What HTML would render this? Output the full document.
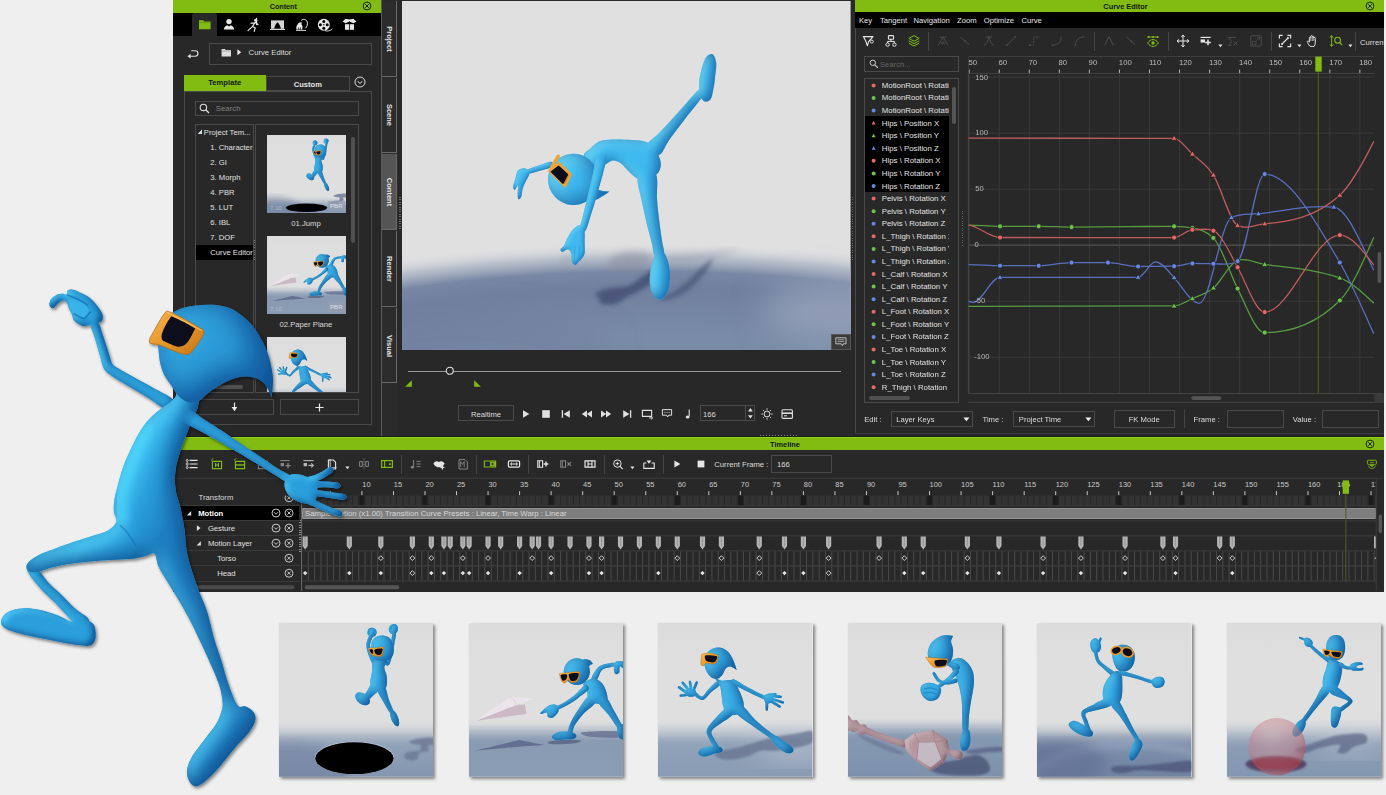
<!DOCTYPE html><html><head><meta charset="utf-8"><title>iClone Curve Editor</title><style>
*{box-sizing:border-box;margin:0;padding:0}
html,body{width:1386px;height:795px;overflow:hidden;background:#efefef}
body{position:relative;font-family:"Liberation Sans",sans-serif;font-size:8px;color:#d0d0d0;line-height:1}
.a{position:absolute}
.t{position:absolute;white-space:nowrap;line-height:10px;height:10px}
.b{position:absolute;border:1px solid #4a4a4a}
.g{background:#82bc13}
svg{position:absolute;overflow:visible}
</style></head><body>
<div class="a" style="left:173px;top:0px;width:209px;height:435.6px;background:#282828;"></div><div class="a" style="left:173px;top:0px;width:208.5px;height:12.5px;background:#82bc13;"></div><div class="t" style="top:1.8px;font-size:7.2px;color:#10180a;font-weight:bold;left:183.3px;width:200px;text-align:center;">Content</div><svg style="left:362px;top:1.3px;" width="10" height="10" viewBox="0 0 10 10"><circle cx="5" cy="5" r="3.9" fill="none" stroke="#1a2a00" stroke-width="1"/><path d="M3.2 3.2L6.8 6.8M6.8 3.2L3.2 6.8" stroke="#1a2a00" stroke-width="1" fill="none"/></svg><div class="a" style="left:173px;top:12.5px;width:208.5px;height:23.5px;background:#000;"></div><div class="a" style="left:192.2px;top:13.2px;width:24.8px;height:23px;background:#282828;border-radius:2px 2px 0 0;"></div><svg style="left:198px;top:18px;" width="14" height="13" viewBox="0 0 14 13"><path d="M1 2.2h4.2l1 1.3H12.6v7.8H1z" fill="#82bc13"/><path d="M1 4.6H12.6" stroke="#5a8a0a" stroke-width="0.7"/></svg><svg style="left:223px;top:18px;" width="12" height="13" viewBox="0 0 12 13"><circle cx="6" cy="3.6" r="2.7" fill="#e8e8e8"/><path d="M0.8 11.6c0.3-3 2.2-3.8 3.6-4.3l1.6 1.2 1.6-1.2c1.4 0.5 3.3 1.3 3.6 4.3z" fill="#e8e8e8"/></svg><svg style="left:246.5px;top:17.5px;" width="13" height="14" viewBox="0 0 13 14"><circle cx="8.6" cy="2.2" r="1.5" fill="#e8e8e8"/><path d="M8.2 4.2L5.6 8.4l2.6 1.6-1 3.4M5.6 8.4L1 12.6M7.8 5L4 5.2M8.2 4.6l2.8 2M9.6 0.4v6.2" stroke="#e8e8e8" stroke-width="1.2" fill="none" stroke-linecap="round"/></svg><svg style="left:270px;top:18.5px;" width="15" height="12" viewBox="0 0 15 12"><path d="M1 1.4h13v8.4H1z" fill="#d4d4d4"/><path d="M4.2 9.8c0.4-3 1.6-4.8 3.3-6.6 1.7 1.8 2.9 3.6 3.3 6.6z" fill="#000"/><path d="M0 10.4h15" stroke="#e8e8e8" stroke-width="1"/></svg><svg style="left:294.5px;top:17.5px;" width="14" height="14" viewBox="0 0 14 14"><path d="M6.2 2.4C8 0.6 11.4 1.2 12.2 4c0.6 2.4-0.2 4.6-1.6 6.2" fill="none" stroke="#e8e8e8" stroke-width="1"/><path d="M1.4 11.6C1 9.4 1.4 7.6 2.6 6.4 3.4 4.8 5 4 6.8 4.4L6.4 6.2C7.6 7.2 7.8 9 7.2 11.6z" fill="#e8e8e8"/><path d="M3.4 9.4v2.6M5.4 9.4v2.6" stroke="#000" stroke-width="0.7"/><path d="M1 12.4H11" stroke="#e8e8e8" stroke-width="0.9"/></svg><svg style="left:317px;top:17.5px;" width="16" height="14" viewBox="0 0 16 14"><circle cx="6.8" cy="6.8" r="6" fill="#e8e8e8"/><circle cx="6.8" cy="3.4" r="1.5" fill="#000"/><circle cx="6.8" cy="10.2" r="1.5" fill="#000"/><circle cx="3.4" cy="6.8" r="1.5" fill="#000"/><circle cx="10.2" cy="6.8" r="1.5" fill="#000"/><circle cx="6.8" cy="6.8" r="0.7" fill="#000"/><path d="M8 12.8c3 0.6 5.4 0 7.4-1.8" stroke="#e8e8e8" stroke-width="0.9" fill="none"/></svg><svg style="left:341.5px;top:18px;" width="15" height="13" viewBox="0 0 15 13"><path d="M3 6.2h9v5.6H3z" fill="#e8e8e8"/><path d="M7.5 1.6L3.6 0.8 0.6 3.6l3 1.6 3.9-1.6 3.9 1.6 3-1.6-3-2.8z" fill="#e8e8e8"/><path d="M7.5 3.6v8.2" stroke="#000" stroke-width="0.8"/></svg><svg style="left:186px;top:48px;" width="14" height="12" viewBox="0 0 14 12"><path d="M3.4 8.2H9.2a2.7 2.7 0 0 0 0-5.4H5.2" fill="none" stroke="#ddd" stroke-width="1.1"/><path d="M4.6 5.8L1.4 8.2l3.2 2.4z" fill="#ddd"/></svg><div class="a" style="left:209px;top:43.3px;width:162.5px;height:22.2px;border:1px solid #4a4a4a;"></div><svg style="left:220.5px;top:47.5px;" width="11" height="10" viewBox="0 0 11 10"><path d="M0.6 1h3.4l0.8 1H10v6.6H0.6z" fill="#ddd"/><path d="M0.6 3h9.4" stroke="#888" stroke-width="0.6"/></svg><svg style="left:236.6px;top:49.3px;" width="5" height="7" viewBox="0 0 5 7"><path d="M0.4 0.2L4.2 3.2 0.4 6.2z" fill="#eee"/></svg><div class="t" style="top:48.1px;font-size:7.71px;color:#dcdcdc;left:248.6px;">Curve Editor</div><div class="a" style="left:183.5px;top:75.4px;width:82.8px;height:15.6px;background:#82bc13;"></div><div class="t" style="top:78.3px;font-size:7.67px;color:#10180a;font-weight:bold;left:124.7px;width:200px;text-align:center;">Template</div><div class="a" style="left:266px;top:75.8px;width:83.8px;height:15.6px;border:1px solid #4a4a4a;"></div><div class="t" style="top:79.7px;font-size:7.57px;color:#e4e4e4;font-weight:bold;left:207.8px;width:200px;text-align:center;">Custom</div><svg style="left:354px;top:76px;" width="12" height="12" viewBox="0 0 12 12"><circle cx="6" cy="6" r="5" fill="none" stroke="#ddd" stroke-width="1"/><path d="M3.6 5L6 7.6 8.4 5" fill="none" stroke="#ddd" stroke-width="1"/></svg><div class="a" style="left:183.5px;top:90.6px;width:188px;height:334.2px;border:1px solid #4a4a4a;"></div><div class="a" style="left:195px;top:100.6px;width:164.4px;height:15.6px;border:1px solid #4a4a4a;"></div><svg style="left:199px;top:103px;" width="11" height="11" viewBox="0 0 11 11"><circle cx="4.4" cy="4.4" r="3.2" fill="none" stroke="#ddd" stroke-width="1.1"/><path d="M6.8 6.8L10 10" stroke="#ddd" stroke-width="1.3"/></svg><div class="t" style="top:104.1px;font-size:7.85px;color:#808080;left:215.7px;">Search</div><div class="a" style="left:195.4px;top:123.6px;width:58.4px;height:269.6px;border:1px solid #4a4a4a;"></div><div class="a" style="left:255.4px;top:123.6px;width:103.6px;height:269.6px;border:1px solid #4a4a4a;"></div><div class="a" style="left:196.4px;top:245px;width:56.6px;height:14.6px;background:#000;"></div><svg style="left:196.8px;top:128.6px;" width="6" height="6" viewBox="0 0 6 6"><path d="M5 0.6V5H0.6z" fill="#ddd"/></svg><div class="t" style="top:127.7px;font-size:7.67px;color:#e0e0e0;left:203.8px;">Project Tem...</div><div class="t" style="top:142.8px;font-size:7.67px;color:#e0e0e0;left:210.3px;width:42.6px;overflow:hidden;">1. Character</div><div class="t" style="top:157.85px;font-size:7.67px;color:#e0e0e0;left:210.3px;width:42.6px;overflow:hidden;">2. GI</div><div class="t" style="top:172.9px;font-size:7.67px;color:#e0e0e0;left:210.3px;width:42.6px;overflow:hidden;">3. Morph</div><div class="t" style="top:187.95px;font-size:7.67px;color:#e0e0e0;left:210.3px;width:42.6px;overflow:hidden;">4. PBR</div><div class="t" style="top:203px;font-size:7.67px;color:#e0e0e0;left:210.3px;width:42.6px;overflow:hidden;">5. LUT</div><div class="t" style="top:218.05px;font-size:7.67px;color:#e0e0e0;left:210.3px;width:42.6px;overflow:hidden;">6. IBL</div><div class="t" style="top:233.1px;font-size:7.67px;color:#e0e0e0;left:210.3px;width:42.6px;overflow:hidden;">7. DOF</div><div class="t" style="top:248.15px;font-size:7.67px;color:#e0e0e0;left:210.3px;width:42.6px;overflow:hidden;">Curve Editor</div><div class="a" style="left:254px;top:240px;width:1.4px;height:22px;background:repeating-linear-gradient(#777 0 1px,transparent 1px 2.4px);"></div><div class="a" style="left:199px;top:385.2px;width:44px;height:3.8px;background:#505050;border-radius:2px;"></div><svg style="left:267px;top:134.5px;overflow:hidden;" width="79" height="78.7" viewBox="0 0 154.4 153.8" preserveAspectRatio="none"><defs><linearGradient id="tb7" x1="0" y1="0" x2="0" y2="154" gradientUnits="userSpaceOnUse"><stop offset="0" stop-color="#dcdcdc"/><stop offset="0.3" stop-color="#dfdfdf"/><stop offset="0.77" stop-color="#dfdfdf"/><stop offset="0.79" stop-color="#ddddde"/><stop offset="0.8" stop-color="#d7d8db"/><stop offset="0.82" stop-color="#ced1d6"/><stop offset="0.83" stop-color="#c2c9d1"/><stop offset="0.85" stop-color="#b6c0cb"/><stop offset="0.86" stop-color="#abb6c5"/><stop offset="0.88" stop-color="#9faec0"/><stop offset="0.89" stop-color="#96a7bb"/><stop offset="0.91" stop-color="#90a2b8"/><stop offset="0.92" stop-color="#8ea0b7"/><stop offset="1" stop-color="#8497b0"/></linearGradient><clipPath id="tc7"><rect x="0" y="0" width="154.4" height="153.8"/></clipPath></defs><rect x="0" y="0" width="154.4" height="153.8" fill="url(#tb7)"/><g clip-path="url(#tc7)"><g filter="url(#blur6)"><ellipse cx="10" cy="150" rx="60" ry="30" fill="#6d7a9c" opacity="0.5"/></g><g filter="url(#blur1)"><path d="M130.08 118.53C131.11 117.57 136.33 116.02 140.39 115.44C144.45 114.85 152.08 113.99 154.42 115.02C156.75 116.06 155.38 120.35 154.42 121.63C153.45 122.9 149.43 121.63 148.64 122.66C147.85 123.69 151.05 126.61 149.67 127.81C148.3 129.02 142.28 128.5 140.39 129.88C138.5 131.25 140.05 134.86 138.33 136.06C136.61 137.27 132.31 137.61 130.08 137.1C127.84 136.58 124.92 134.35 124.92 132.97C124.92 131.59 127.5 129.7 130.08 128.84C132.65 127.99 138.5 128.95 140.39 127.81C142.28 126.68 142.45 123.14 141.42 122.04C140.39 120.94 136.09 121.8 134.2 121.21C132.31 120.63 129.04 119.49 130.08 118.53Z" fill="#6a7594" opacity="0.8"/></g><ellipse cx="77.2" cy="142.1" rx="40.6" ry="8.4" transform="rotate(0 77.2 142.1)" fill="#000"/><g transform="translate(1,6)"><g filter="url(#t2)" fill="#35a8e2"><path d="M110.76 40.87C111.78 38.71 113.04 32.98 113.87 29.3C114.7 25.62 115.22 21.93 115.74 18.8C116.26 15.67 117.03 12.19 116.99 10.5C116.94 8.81 116.05 8.74 115.46 8.65C114.87 8.56 114 8.39 113.46 9.97C112.92 11.56 112.81 15.12 112.23 18.18C111.65 21.23 111.01 24.76 109.98 28.3C108.96 31.85 106.45 37.1 106.08 39.42C105.71 41.75 106.99 42.01 107.77 42.26C108.55 42.5 109.74 43.03 110.76 40.87Z" /><path d="M98.22 39.03C97.58 37.04 94.38 33.07 93.18 30.18C91.98 27.28 90.91 24.48 91.01 21.66C91.12 18.85 93.55 15.01 93.82 13.27C94.08 11.52 93.18 11.37 92.62 11.19C92.05 11.01 91.29 10.44 90.43 12.16C89.57 13.88 87.62 18.27 87.45 21.5C87.29 24.74 88.35 28.26 89.41 31.56C90.48 34.85 92.59 39.5 93.86 41.26C95.13 43.02 96.32 42.48 97.04 42.11C97.77 41.74 98.87 41.02 98.22 39.03Z" /><ellipse cx="114.4" cy="6.11" rx="4.6" ry="5.2" transform="rotate(15 114.4 6.11)" /><ellipse cx="92.95" cy="9.41" rx="4.6" ry="4.6" transform="rotate(0 92.95 9.41)" /></g><path d="M111.51 6.53C111.86 5.91 112.54 3.43 113.57 2.81C114.61 2.19 116.94 2.06 117.7 2.81C118.46 3.57 118.04 6.59 118.11 7.35" fill="none" stroke="#2b90cc" stroke-width="1.2"/><path d="M89.85 10.65C89.85 9.96 89.34 7.35 89.85 6.53C90.37 5.7 91.81 5.56 92.95 5.7C94.08 5.84 96.11 6.46 96.66 7.35C97.21 8.24 96.32 10.45 96.25 11.06" fill="none" stroke="#2b90cc" stroke-width="1.2"/><g filter="url(#t4)" fill="#35a8e2"><path d="M93.25 59.78C91.34 61.15 89.83 65.38 88.39 67.63C86.94 69.89 85.14 71.71 84.58 73.3C84.03 74.89 84.31 76.53 85.04 77.17C85.76 77.81 87.4 77.91 88.93 77.13C90.46 76.35 92.21 74.35 94.21 72.48C96.2 70.61 99.96 68.08 100.9 65.9C101.84 63.72 101.1 60.41 99.83 59.39C98.55 58.37 95.15 58.4 93.25 59.78Z" /><path d="M98.32 67.56C98.99 70.41 102.68 75.85 104.75 79.51C106.82 83.17 109.32 87.73 110.75 89.52C112.18 91.31 112.75 90.53 113.35 90.24C113.95 89.94 114.89 89.91 114.34 87.73C113.78 85.54 111.39 81.01 110.02 77.11C108.66 73.21 107.68 66.75 106.14 64.3C104.59 61.86 102.07 61.87 100.76 62.42C99.46 62.96 97.66 64.71 98.32 67.56Z" /><ellipse cx="83.67" cy="75.83" rx="8.25" ry="5.36" transform="rotate(35 83.67 75.83)" /><ellipse cx="115.64" cy="95.22" rx="3.51" ry="8.66" transform="rotate(-22 115.64 95.22)" /><path d="M94.6 38.09C92.02 39.98 93.5 45.82 92.95 49.43C92.4 53.04 91.02 56.82 91.3 59.74C91.57 62.67 92.78 65.52 94.6 66.96C96.42 68.41 100.1 68.92 102.23 68.41C104.36 67.89 106.46 66.34 107.39 63.87C108.31 61.39 108.14 56.82 107.8 53.56C107.45 50.29 105.22 46.85 105.32 44.27C105.43 41.7 110.21 39.12 108.42 38.09C106.63 37.05 97.18 36.19 94.6 38.09Z" /></g><g filter="url(#t4)" fill="#35a8e2"><path d="M92.53 26.74C92.19 23.99 92.02 20.69 92.95 18.49C93.88 16.29 96.04 14.5 98.1 13.54C100.17 12.58 103.09 12.3 105.32 12.71C107.56 13.13 109.96 14.19 111.51 16.01C113.06 17.84 114.19 21 114.61 23.65C115.02 26.29 114.85 29.66 113.99 31.9C113.13 34.13 111.58 36.02 109.45 37.05C107.32 38.09 103.6 38.43 101.2 38.09C98.79 37.74 96.45 36.88 95.01 34.99C93.57 33.1 92.88 29.49 92.53 26.74Z" /></g><path d="M89.23 25.09C89.23 25.09 95.04 24.84 97.07 24.68C99.11 24.51 104.5 23.85 104.5 23.85C104.5 23.85 104.77 27.54 104.5 28.8C104.22 30.07 103.37 32.74 102.44 33.34C101.5 33.95 98.53 33.45 97.49 33.34C96.44 33.23 95.42 32.85 94.6 32.52C93.77 32.19 92.01 31.86 91.3 30.87C90.58 29.88 89.23 25.09 89.23 25.09Z" fill="url(#orG)" stroke="#a8640f" stroke-width="0.4"/><path d="M95.42 26.74C96.25 26 102.27 25.3 103.26 25.71C104.25 26.12 103.18 29.01 102.85 29.83C102.52 30.66 101.56 31.7 100.79 31.9C100.02 32.09 97.79 31.97 97.07 31.28C96.36 30.59 94.6 27.48 95.42 26.74Z" fill="#0b0c1a"/><path d="M90.47 26.74C90.69 26.3 93.28 26.19 93.77 26.74C94.27 27.29 94.4 30.43 94.18 30.87C93.96 31.31 92.62 30.59 92.12 30.04C91.63 29.49 90.25 27.18 90.47 26.74Z" fill="#0b0c1a"/></g></g></svg><div class="t" style="top:202.8px;font-size:6.17px;color:rgba(190,195,210,0.75);left:270px;">7.10</div><div class="a" style="left:328px;top:200.5px;width:16.6px;height:10px;background:rgba(150,158,178,0.75);"></div><div class="t" style="top:200.8px;font-size:6.17px;color:rgba(225,228,236,0.95);left:236.3px;width:200px;text-align:center;">PBR</div><svg style="left:267px;top:235.8px;overflow:hidden;" width="79" height="78.5" viewBox="0 0 154.4 153.41" preserveAspectRatio="none"><defs><linearGradient id="tb2" x1="0" y1="0" x2="0" y2="154" gradientUnits="userSpaceOnUse"><stop offset="0" stop-color="#dcdcdc"/><stop offset="0.3" stop-color="#dfdfdf"/><stop offset="0.63" stop-color="#dfdfdf"/><stop offset="0.64" stop-color="#ddddde"/><stop offset="0.66" stop-color="#d6d8da"/><stop offset="0.67" stop-color="#ccd0d5"/><stop offset="0.69" stop-color="#c1c7d0"/><stop offset="0.7" stop-color="#b4bdc9"/><stop offset="0.72" stop-color="#a7b3c2"/><stop offset="0.73" stop-color="#9caabd"/><stop offset="0.75" stop-color="#92a2b8"/><stop offset="0.76" stop-color="#8b9db4"/><stop offset="0.78" stop-color="#899bb3"/><stop offset="1" stop-color="#8b9db5"/></linearGradient><clipPath id="tc2"><rect x="0" y="0" width="154.4" height="153.8"/></clipPath></defs><rect x="0" y="0" width="154.4" height="153.8" fill="url(#tb2)"/><g clip-path="url(#tc2)"><g filter="url(#blur05)"><path d="M5.68 127.81C5.68 127.81 50.03 117.09 50.03 117.09C50.03 117.09 75.81 122.04 75.81 122.04C75.81 122.04 37.65 124.72 37.65 124.72C37.65 124.72 5.68 127.81 5.68 127.81Z" fill="#5e6a8c" opacity="0.9"/><path d="M78.91 119.15C80.28 118.36 87.85 116.74 93.35 116.47C98.85 116.19 110.19 116.81 111.91 117.5C113.63 118.19 108.13 119.97 103.66 120.59C99.19 121.21 89.22 121.45 85.1 121.21C80.97 120.97 77.53 119.94 78.91 119.15Z" fill="#56627f" opacity="0.8"/><path d="M111.91 109.66C113.63 108.8 121.54 108.36 128.41 108.22C135.29 108.08 149.04 107.8 153.17 108.84C157.29 109.87 156.6 113.48 153.17 114.41C149.73 115.33 138.38 114.58 132.54 114.41C126.69 114.23 121.54 114.16 118.1 113.37C114.66 112.58 110.19 110.52 111.91 109.66Z" fill="#5c6787" opacity="0.7"/></g><path d="M6.71 97.9C6.71 97.9 44.87 82.43 44.87 82.43C44.87 82.43 55.81 81.2 55.81 81.2C55.81 81.2 57.46 91.1 57.46 91.1C57.46 91.1 6.71 97.9 6.71 97.9Z" fill="#cbb9c6"/><path d="M6.71 97.9C6.71 97.9 41.78 73.77 41.78 73.77C41.78 73.77 65.5 75.42 65.5 75.42C65.5 75.42 45.9 82.64 45.9 82.64C45.9 82.64 6.71 97.9 6.71 97.9Z" fill="#ebe4ea"/><path d="M41.78 73.77C41.78 73.77 46.94 79.34 46.94 79.34C46.94 79.34 45.9 82.64 45.9 82.64" fill="none" stroke="#c9bcc6" stroke-width="0.5"/><g filter="url(#t2)" fill="#35a8e2"><path d="M127.8 57.11C129.3 55.3 130.73 49.15 132.97 46.99C135.2 44.83 138.7 44.77 141.23 44.17C143.76 43.56 146.76 43.82 148.16 43.37C149.56 42.92 149.66 42.05 149.61 41.46C149.56 40.86 149.4 40.02 147.86 39.82C146.31 39.62 143.32 39.62 140.35 40.25C137.38 40.89 132.97 41.31 130.05 43.62C127.13 45.93 123.85 51.76 122.84 54.13C121.82 56.5 123.15 57.36 123.98 57.85C124.81 58.35 126.3 58.92 127.8 57.11Z" /><path d="M146.57 39.12C147.77 37.74 150.62 37.91 152.13 38.09C153.65 38.26 155.06 38.77 155.64 40.15C156.23 41.52 156.4 45.75 155.64 46.34C154.88 46.92 152.03 43.07 151.1 43.65C150.17 44.24 150.83 48.61 150.07 49.84C149.32 51.08 147.42 51.66 146.57 51.08C145.71 50.5 144.91 48.33 144.91 46.34C144.91 44.34 145.36 40.49 146.57 39.12Z" /></g><g filter="url(#t4)" fill="#35a8e2"><path d="M118.6 73.98C115.95 76.07 112.13 82.24 109.28 86.56C106.43 90.88 103.28 95.88 101.47 99.9C99.66 103.92 98.68 108.45 98.43 110.67C98.19 112.89 99.28 113.02 99.99 113.23C100.7 113.45 101.72 113.81 102.7 111.95C103.68 110.1 103.88 105.64 105.85 102.09C107.83 98.55 111.21 94.27 114.54 90.68C117.88 87.09 124.08 83.35 125.85 80.57C127.63 77.8 126.4 75.11 125.19 74.01C123.98 72.91 121.25 71.89 118.6 73.98Z" /><path d="M129.54 80.07C131.04 83.21 136.81 88.29 140.06 92.51C143.3 96.73 146.98 103.13 149.02 105.38C151.05 107.62 151.56 106.4 152.26 105.97C152.95 105.54 154.29 105.66 153.19 102.81C152.09 99.96 148.25 93.58 145.65 88.86C143.05 84.14 140.03 77.02 137.6 74.49C135.17 71.95 132.4 72.72 131.06 73.65C129.72 74.58 128.04 76.92 129.54 80.07Z" /><path d="M83.03 113.37C83.55 112.07 86.47 110.01 89.22 109.25C91.97 108.49 96.61 108.49 99.54 108.84C102.46 109.18 105.72 110.21 106.75 111.31C107.79 112.41 107.61 114.58 105.72 115.44C103.83 116.3 98.68 116.19 95.41 116.47C92.14 116.74 88.19 117.6 86.13 117.09C84.07 116.57 82.52 114.68 83.03 113.37Z" /><path d="M148.63 103.06C149.66 101.69 153.54 99.97 154.82 102.03C156.09 104.09 156.88 113.2 156.26 115.44C155.64 117.67 152.37 116.3 151.1 115.44C149.83 114.58 149.04 112.34 148.63 110.28C148.22 108.22 147.6 104.44 148.63 103.06Z" /><path d="M114.39 61.39C114.39 59.5 116.28 58.64 118.1 57.68C119.92 56.72 122.91 55.27 125.32 55.62C127.73 55.96 130.58 57.68 132.54 59.74C134.5 61.81 136.11 65.07 137.08 67.99C138.04 70.92 139.07 75.15 138.31 77.28C137.56 79.41 134.88 80.27 132.54 80.78C130.2 81.3 126.52 80.96 124.29 80.37C122.05 79.79 120.16 79.17 119.13 77.28C118.1 75.39 118.89 71.67 118.1 69.03C117.31 66.38 114.39 63.28 114.39 61.39Z" /></g><g filter="url(#t6)" fill="#35a8e2"><ellipse cx="107.79" cy="48.61" rx="13" ry="13.41" transform="rotate(0 107.79 48.61)" /><path d="M113.97 37.05C114.49 35.34 118.51 36.44 120.16 37.05C121.81 37.67 123.88 40.77 123.88 40.77C123.88 40.77 120.71 41.73 120.16 43.24C119.61 44.75 121.09 49.16 120.57 49.84C120.06 50.53 118.17 49.5 117.07 47.37C115.97 45.24 113.46 38.77 113.97 37.05Z" /></g><path d="M90.25 50.67C90.25 50.67 96.79 49.71 99.54 49.43C102.29 49.16 110.88 48.61 110.88 48.61C110.88 48.61 110.67 53.24 110.26 54.59C109.85 55.93 108.89 58.08 107.79 58.71C106.69 59.35 103.11 59.58 102.01 59.33C100.91 59.08 100.36 56.75 99.54 56.86C98.71 56.97 96.76 60.05 95.82 60.16C94.89 60.27 93.26 58.95 92.52 57.68C91.78 56.42 90.25 50.67 90.25 50.67Z" fill="url(#orG)" stroke="#a8640f" stroke-width="0.4"/><path d="M99.95 51.08C100.94 50.09 108.39 49.51 109.44 50.26C110.48 51 108.78 55.66 107.79 56.65C106.8 57.64 103.06 58.42 102.01 57.68C100.97 56.94 98.96 52.07 99.95 51.08Z" fill="#0b0c1a"/><path d="M91.7 51.91C92.25 51.08 97.12 50.94 97.89 51.49C98.66 52.04 98.02 55.21 97.47 56.03C96.92 56.86 94.53 58.23 93.76 57.68C92.99 57.13 91.15 52.73 91.7 51.91Z" fill="#0b0c1a"/><g filter="url(#t2)" fill="#35a8e2"><path d="M115.14 62.74C113.04 64.11 109.52 68.75 106.41 71.4C103.29 74.06 99.78 76.56 96.44 78.65C93.1 80.74 88.15 82.67 86.36 83.93C84.58 85.2 85.46 85.71 85.72 86.25C85.99 86.78 85.83 87.81 87.96 87.12C90.09 86.43 94.97 84.13 98.5 82.09C102.04 80.05 105.75 77.4 109.17 74.9C112.58 72.4 117.35 69.02 118.99 67.07C120.63 65.11 119.66 63.89 119.02 63.17C118.38 62.45 117.25 61.36 115.14 62.74Z" /><path d="M88.19 82.43C86.75 81.51 83.55 80.99 80.97 82.02C78.39 83.05 74.23 87.11 72.72 88.62C71.21 90.13 71.04 90.93 71.9 91.1C72.75 91.27 76.71 89.21 77.88 89.65C79.05 90.1 78.05 92.92 78.91 93.78C79.77 94.64 81.66 95.15 83.03 94.81C84.41 94.47 86.06 92.92 87.16 91.72C88.26 90.51 89.46 89.14 89.63 87.59C89.81 86.04 89.63 83.36 88.19 82.43Z" /></g></g></svg><div class="t" style="top:304.1px;font-size:6.17px;color:rgba(190,195,210,0.75);left:270px;">7.10</div><div class="a" style="left:328px;top:301.8px;width:16.6px;height:10px;background:rgba(150,158,178,0.75);"></div><div class="t" style="top:302.1px;font-size:6.17px;color:rgba(225,228,236,0.95);left:236.3px;width:200px;text-align:center;">PBR</div><svg style="left:267px;top:336.8px;overflow:hidden;" width="79" height="55" viewBox="0 0 154.4 107.48" preserveAspectRatio="none"><defs><linearGradient id="tb3" x1="0" y1="0" x2="0" y2="154" gradientUnits="userSpaceOnUse"><stop offset="0" stop-color="#dcdcdc"/><stop offset="0.3" stop-color="#dfdfdf"/><stop offset="0.63" stop-color="#dfdfdf"/><stop offset="0.65" stop-color="#ddddde"/><stop offset="0.66" stop-color="#d7d9db"/><stop offset="0.68" stop-color="#ced2d7"/><stop offset="0.7" stop-color="#c3cad1"/><stop offset="0.72" stop-color="#b8c0cc"/><stop offset="0.74" stop-color="#acb7c6"/><stop offset="0.75" stop-color="#a1afc0"/><stop offset="0.77" stop-color="#98a8bc"/><stop offset="0.79" stop-color="#92a4b9"/><stop offset="0.81" stop-color="#90a2b8"/><stop offset="1" stop-color="#899bb3"/></linearGradient><clipPath id="tc3"><rect x="0" y="0" width="154.4" height="153.8"/></clipPath></defs><rect x="0" y="0" width="154.4" height="153.8" fill="url(#tb3)"/><g clip-path="url(#tc3)"><g filter="url(#blur14)"><ellipse cx="140" cy="122" rx="40" ry="12" fill="#c4c9d6" opacity="0.8"/></g><g filter="url(#blur1)"><path d="M57.68 129.88C60.78 127.81 74.87 125.75 82.43 123.69C90 121.63 96.87 119.22 103.06 117.5C109.25 115.78 113.37 114.58 119.56 113.37C125.75 112.17 134.41 111.14 140.19 110.28C145.97 109.42 151.88 106.67 154.22 108.22C156.55 109.76 156.9 116.81 154.22 119.56C151.53 122.31 143.9 123.34 138.13 124.72C132.35 126.09 125.41 127.3 119.56 127.81C113.72 128.33 107.87 126.95 103.06 127.81C98.25 128.67 94.81 131.59 90.68 132.97C86.56 134.35 82.78 135.55 78.31 136.06C73.84 136.58 67.31 137.1 63.87 136.06C60.43 135.03 54.59 131.94 57.68 129.88Z" fill="#66718f" opacity="0.75"/></g><g filter="url(#t2)" fill="#35a8e2"><path d="M58.13 58.93C56.25 60.13 52.47 64.11 50.13 66.53C47.78 68.95 46.23 73.11 44.04 73.45C41.85 73.78 38.53 69.25 36.97 68.55C35.4 67.84 34.98 68.7 34.66 69.21C34.35 69.71 33.44 70.27 35.08 71.57C36.72 72.86 41.55 77.33 44.51 76.98C47.47 76.63 50.05 71.85 52.86 69.46C55.67 67.07 59.93 64.31 61.36 62.62C62.78 60.93 61.94 59.94 61.4 59.32C60.87 58.71 60.01 57.73 58.13 58.93Z" /><path d="M37.05 66.96C35.85 65.83 32.58 64.73 30.87 64.9C29.15 65.07 27.15 66.72 26.74 67.99C26.33 69.27 27.19 71.57 28.39 72.53C29.59 73.5 32.34 73.91 33.96 73.77C35.58 73.63 37.57 72.84 38.09 71.71C38.6 70.57 38.26 68.1 37.05 66.96Z" /><path d="M30.86 65.08C30.02 63.77 26.67 60.05 25.53 59.03C24.4 58.01 24.32 58.74 24.04 58.97C23.75 59.21 23.03 59.15 23.82 60.46C24.62 61.76 27.68 65.72 28.81 66.79C29.94 67.85 30.26 67.14 30.6 66.86C30.95 66.57 31.71 66.38 30.86 65.08Z" /><path d="M34.25 64.68C34.23 63.42 33.42 59.69 33 58.53C32.58 57.37 32.1 57.66 31.73 57.72C31.37 57.78 30.82 57.66 30.8 58.9C30.78 60.13 31.22 63.92 31.61 65.12C32 66.32 32.69 66.16 33.13 66.09C33.57 66.01 34.27 65.94 34.25 64.68Z" /><path d="M37.26 66.44C37.96 65.22 39.43 61.09 39.74 59.75C40.04 58.41 39.43 58.54 39.08 58.4C38.74 58.26 38.39 57.74 37.67 58.91C36.96 60.08 35.13 64.07 34.78 65.43C34.43 66.78 35.16 66.88 35.57 67.05C35.98 67.21 36.57 67.65 37.26 66.44Z" /><path d="M28.54 67.93C27.34 66.87 23 64.07 21.6 63.37C20.2 62.66 20.35 63.4 20.14 63.71C19.93 64.01 19.18 64.13 20.33 65.2C21.47 66.26 25.6 69.37 27.01 70.12C28.41 70.88 28.5 70.08 28.76 69.71C29.01 69.35 29.73 68.99 28.54 67.93Z" /><path d="M28.63 70.38C27.37 70.36 23.64 71.05 22.47 71.43C21.3 71.81 21.57 72.3 21.62 72.67C21.67 73.03 21.54 73.58 22.76 73.64C23.99 73.7 27.77 73.38 28.98 73.03C30.19 72.68 30.05 71.99 30 71.55C29.94 71.11 29.88 70.4 28.63 70.38Z" /></g><g filter="url(#t4)" fill="#35a8e2"><path d="M67.92 84.88C64.74 86.85 58.55 93.76 55.34 97.58C52.13 101.4 49.13 104.32 48.67 107.79C48.2 111.27 51.21 115.43 52.57 118.43C53.92 121.44 55.59 124.49 56.78 125.82C57.97 127.16 59.06 126.83 59.71 126.46C60.35 126.09 61.16 125.26 60.65 123.61C60.13 121.96 57.8 119.06 56.61 116.56C55.42 114.07 52.93 111.01 53.49 108.64C54.06 106.27 56.56 105.07 60.02 102.35C63.48 99.64 71.85 95.13 74.25 92.36C76.66 89.6 75.51 87.02 74.46 85.77C73.4 84.53 71.11 82.91 67.92 84.88Z" /><path d="M78.08 90.16C80.49 93.15 87.87 97.98 92.65 101.49C97.43 105 102.66 108.42 106.76 111.22C110.86 114.02 115.02 117.23 117.25 118.29C119.49 119.36 119.75 118.23 120.17 117.62C120.6 117.01 121.56 116.37 119.81 114.64C118.06 112.92 113.48 110.32 109.67 107.28C105.87 104.24 101.13 100.44 96.97 96.38C92.81 92.33 87.86 85.09 84.73 82.96C81.59 80.82 79.27 82.37 78.16 83.57C77.05 84.77 75.66 87.17 78.08 90.16Z" /><path d="M40.15 129.88C39.98 128.5 41.7 126.44 44.27 125.34C46.85 124.24 52.42 123.38 55.62 123.28C58.82 123.17 62.08 123.79 63.46 124.72C64.83 125.65 65.18 127.81 63.87 128.84C62.56 129.88 58.71 130.12 55.62 130.91C52.52 131.7 47.88 133.76 45.3 133.59C42.73 133.42 40.32 131.25 40.15 129.88Z" /><path d="M113.79 117.5C113.17 115.37 116.09 112.96 117.91 112.96C119.73 112.96 122.11 115.71 124.72 117.5C127.33 119.29 131.84 121.9 133.59 123.69C135.34 125.48 135.86 127.13 135.24 128.23C134.62 129.33 132.14 130.7 129.88 130.29C127.61 129.88 124.31 127.88 121.63 125.75C118.94 123.62 114.41 119.63 113.79 117.5Z" /><path d="M57.68 55.62C57.96 54.59 60.95 57.34 63.87 57.68C66.79 58.02 72.29 55.96 75.21 57.68C78.14 59.4 79.68 64.38 81.4 67.99C83.12 71.6 84.94 76.07 85.53 79.34C86.11 82.61 86.11 85.53 84.91 87.59C83.71 89.65 80.78 91.13 78.31 91.72C75.83 92.3 72.19 92.3 70.06 91.1C67.93 89.89 66.55 87.32 65.52 84.5C64.49 81.68 64.42 77.62 63.87 74.18C63.32 70.74 63.25 66.96 62.22 63.87C61.19 60.78 57.41 56.65 57.68 55.62Z" /></g><g filter="url(#t6)" fill="#35a8e2"><path d="M46.34 41.18C45.89 37.91 46.41 34.48 47.78 31.9C49.16 29.32 52.08 26.91 54.59 25.71C57.1 24.51 60.26 24.16 62.84 24.68C65.42 25.19 67.99 26.74 70.06 28.8C72.12 30.87 73.77 34.03 75.21 37.05C76.66 40.08 78.72 46.96 78.72 46.96C78.72 46.96 74.94 43.93 73.15 43.65C71.36 43.38 69.54 43.83 67.99 45.3C66.45 46.78 65.59 50.74 63.87 52.52C62.15 54.31 59.92 56.2 57.68 56.03C55.45 55.86 52.35 53.97 50.46 51.49C48.57 49.02 46.78 44.45 46.34 41.18Z" /></g><path d="M43.65 31.28C43.65 31.28 49.29 29.93 51.49 30.04C53.69 30.15 60.16 32.1 60.16 32.1C60.16 32.1 59.94 36.88 59.33 38.09C58.73 39.3 57.08 40.93 55.62 41.18C54.16 41.43 49.77 39.72 48.4 39.94C47.02 40.16 46.05 42.66 45.3 42.83C44.56 42.99 43.05 42.72 42.83 41.18C42.61 39.64 43.65 31.28 43.65 31.28Z" fill="url(#orG)" stroke="#a8640f" stroke-width="0.4"/><path d="M47.37 32.52C48.74 31.88 57.34 32.6 58.71 33.34C60.09 34.08 58.23 37.26 57.68 38.09C57.13 38.91 55.82 39.53 54.59 39.53C53.35 39.53 49.36 39.02 48.4 38.09C47.44 37.15 45.99 33.15 47.37 32.52Z" fill="#0b0c1a"/><g filter="url(#t2)" fill="#35a8e2"><path d="M74.04 60.86C76.1 62.37 81.61 64.71 85.63 66.68C89.65 68.65 94.53 71 98.17 72.7C101.81 74.39 105.57 76.31 107.49 76.84C109.41 77.37 109.44 76.41 109.68 75.87C109.92 75.32 110.6 74.65 108.94 73.59C107.28 72.52 103.28 71.22 99.7 69.48C96.13 67.74 91.37 65.28 87.49 63.12C83.6 60.97 78.76 57.47 76.39 56.56C74.02 55.65 73.67 56.94 73.28 57.66C72.89 58.37 71.98 59.36 74.04 60.86Z" /><path d="M106.15 72.53C107.01 71.5 109.76 70.81 111.31 71.09C112.86 71.36 114.92 72.81 115.44 74.18C115.95 75.56 115.44 78.31 114.41 79.34C113.37 80.37 110.62 80.71 109.25 80.37C107.87 80.03 106.67 78.58 106.15 77.28C105.64 75.97 105.3 73.56 106.15 72.53Z" /><path d="M113.29 74.49C115.02 74.79 120.85 74.99 122.58 74.88C124.31 74.77 123.63 74.21 123.66 73.84C123.68 73.47 124.43 73 122.73 72.66C121.03 72.32 115.22 71.75 113.46 71.82C111.7 71.89 112.2 72.63 112.17 73.07C112.14 73.52 111.55 74.18 113.29 74.49Z" /><path d="M114.02 77.53C115.88 78.28 122.46 80.06 124.4 80.41C126.34 80.76 125.57 79.98 125.68 79.63C125.79 79.27 126.85 79.05 125.04 78.27C123.22 77.5 116.75 75.36 114.79 74.97C112.83 74.57 113.38 75.47 113.25 75.9C113.13 76.33 112.16 76.77 114.02 77.53Z" /><path d="M112.67 79.44C114.11 80.56 119.4 83.65 121.03 84.41C122.67 85.17 122.28 84.31 122.48 84C122.67 83.68 123.61 83.66 122.22 82.52C120.82 81.38 115.73 77.98 114.08 77.17C112.44 76.37 112.59 77.29 112.35 77.67C112.12 78.05 111.22 78.32 112.67 79.44Z" /><path d="M107.5 78.31C107.31 79.88 107.5 85.02 107.72 86.56C107.95 88.1 108.47 87.56 108.84 87.56C109.21 87.56 109.73 88.1 109.95 86.56C110.17 85.02 110.36 79.88 110.17 78.31C109.99 76.73 109.28 77.11 108.84 77.11C108.39 77.11 107.69 76.73 107.5 78.31Z" /><path d="M110.47 73.44C111.9 73.43 116.32 72.61 117.66 72.19C118.99 71.78 118.54 71.31 118.49 70.95C118.44 70.58 118.74 70.01 117.34 69.99C115.94 69.96 111.47 70.41 110.09 70.8C108.72 71.18 109.03 71.85 109.09 72.29C109.15 72.73 109.04 73.46 110.47 73.44Z" /></g></g></svg><div class="a" style="left:351.2px;top:137px;width:3.8px;height:106px;background:#505050;border-radius:2px;"></div><div class="t" style="top:218.9px;font-size:7.67px;color:#dcdcdc;left:206px;width:200px;text-align:center;">01.Jump</div><div class="t" style="top:320.1px;font-size:7.67px;color:#dcdcdc;left:206px;width:200px;text-align:center;">02.Paper Plane</div><div class="a" style="left:195px;top:399px;width:78.8px;height:15.6px;border:1px solid #4a4a4a;"></div><div class="a" style="left:280px;top:399px;width:78.8px;height:15.6px;border:1px solid #4a4a4a;"></div><svg style="left:230px;top:402px;" width="9" height="10" viewBox="0 0 9 10"><path d="M4.5 0.6V6" stroke="#e8e8e8" stroke-width="1.2"/><path d="M1.6 5L4.5 9.2 7.4 5z" fill="#e8e8e8"/></svg><svg style="left:315px;top:402.6px;" width="9" height="9" viewBox="0 0 9 9"><path d="M4.5 0.4V8.6M0.4 4.5H8.6" stroke="#e8e8e8" stroke-width="1.2"/></svg>
<div class="a" style="left:381px;top:0px;width:17.2px;height:435.6px;background:#2a2a2a;"></div><div class="a" style="left:381px;top:0px;width:1px;height:435.6px;background:#5a5a5a;"></div><div class="a" style="left:382px;top:1px;width:15.4px;height:75.5px;background:#2c2c2c;border-right:1px solid #6a6a6a;border-bottom:1px solid #6a6a6a;"></div><div class="t" style="left:358.8px;top:33.75px;width:60px;text-align:center;font-size:7.5px;font-weight:bold;color:#e6e6e6;transform:rotate(90deg);">Project</div><div class="a" style="left:382px;top:77.5px;width:15.4px;height:75.9px;background:#2c2c2c;border-right:1px solid #6a6a6a;border-bottom:1px solid #6a6a6a;"></div><div class="t" style="left:358.8px;top:110.45px;width:60px;text-align:center;font-size:7.5px;font-weight:bold;color:#e6e6e6;transform:rotate(90deg);">Scene</div><div class="a" style="left:382px;top:154.4px;width:15.4px;height:75.9px;background:#555555;border-right:1px solid #6a6a6a;border-bottom:1px solid #6a6a6a;"></div><div class="t" style="left:358.8px;top:187.35px;width:60px;text-align:center;font-size:7.5px;font-weight:bold;color:#e6e6e6;transform:rotate(90deg);">Content</div><div class="a" style="left:382px;top:231.3px;width:15.4px;height:75.9px;background:#2c2c2c;border-right:1px solid #6a6a6a;border-bottom:1px solid #6a6a6a;"></div><div class="t" style="left:358.8px;top:264.25px;width:60px;text-align:center;font-size:7.5px;font-weight:bold;color:#e6e6e6;transform:rotate(90deg);">Render</div><div class="a" style="left:382px;top:308.2px;width:15.4px;height:74.8px;background:#2c2c2c;border-right:1px solid #6a6a6a;border-bottom:1px solid #6a6a6a;"></div><div class="t" style="left:358.8px;top:340.6px;width:60px;text-align:center;font-size:7.5px;font-weight:bold;color:#e6e6e6;transform:rotate(90deg);">Visual</div>
<div class="a" style="left:398px;top:0px;width:457px;height:435.6px;background:#282828;"></div><div class="a" style="left:399.2px;top:197px;width:1.4px;height:32px;background:repeating-linear-gradient(#666 0 1px,transparent 1px 2.4px);"></div><div class="a" style="left:852px;top:197px;width:1.4px;height:64px;background:repeating-linear-gradient(#666 0 1px,transparent 1px 2.4px);"></div><svg width="0" height="0" style="left:0;top:0"><defs><filter id="v8" x="-30%" y="-30%" width="160%" height="160%" color-interpolation-filters="sRGB"><feGaussianBlur in="SourceAlpha" stdDeviation="9.2" result="b"/><feOffset in="b" dx="-6.25" dy="-3.75" result="o1"/><feComposite in="SourceAlpha" in2="o1" operator="out" result="m1"/><feFlood flood-color="#1566aa" flood-opacity="1"/><feComposite in2="m1" operator="in" result="dk"/><feOffset in="b" dx="6.25" dy="3.75" result="o2"/><feComposite in="SourceAlpha" in2="o2" operator="out" result="m2"/><feFlood flood-color="#8cf0ff" flood-opacity="0.85"/><feComposite in2="m2" operator="in" result="lt"/><feMerge><feMergeNode in="SourceGraphic"/><feMergeNode in="lt"/><feMergeNode in="dk"/></feMerge></filter><filter id="v5" x="-30%" y="-30%" width="160%" height="160%" color-interpolation-filters="sRGB"><feGaussianBlur in="SourceAlpha" stdDeviation="5.75" result="b"/><feOffset in="b" dx="-4" dy="-2.4" result="o1"/><feComposite in="SourceAlpha" in2="o1" operator="out" result="m1"/><feFlood flood-color="#1566aa" flood-opacity="1"/><feComposite in2="m1" operator="in" result="dk"/><feOffset in="b" dx="4" dy="2.4" result="o2"/><feComposite in="SourceAlpha" in2="o2" operator="out" result="m2"/><feFlood flood-color="#8cf0ff" flood-opacity="0.85"/><feComposite in2="m2" operator="in" result="lt"/><feMerge><feMergeNode in="SourceGraphic"/><feMergeNode in="lt"/><feMergeNode in="dk"/></feMerge></filter><filter id="v3" x="-30%" y="-30%" width="160%" height="160%" color-interpolation-filters="sRGB"><feGaussianBlur in="SourceAlpha" stdDeviation="2.99" result="b"/><feOffset in="b" dx="-2.25" dy="-1.35" result="o1"/><feComposite in="SourceAlpha" in2="o1" operator="out" result="m1"/><feFlood flood-color="#1566aa" flood-opacity="1"/><feComposite in2="m1" operator="in" result="dk"/><feOffset in="b" dx="2.25" dy="1.35" result="o2"/><feComposite in="SourceAlpha" in2="o2" operator="out" result="m2"/><feFlood flood-color="#8cf0ff" flood-opacity="0.85"/><feComposite in2="m2" operator="in" result="lt"/><feMerge><feMergeNode in="SourceGraphic"/><feMergeNode in="lt"/><feMergeNode in="dk"/></feMerge></filter><filter id="v2" x="-30%" y="-30%" width="160%" height="160%" color-interpolation-filters="sRGB"><feGaussianBlur in="SourceAlpha" stdDeviation="1.95" result="b"/><feOffset in="b" dx="-1.38" dy="-0.82" result="o1"/><feComposite in="SourceAlpha" in2="o1" operator="out" result="m1"/><feFlood flood-color="#1566aa" flood-opacity="1"/><feComposite in2="m1" operator="in" result="dk"/><feOffset in="b" dx="1.38" dy="0.82" result="o2"/><feComposite in="SourceAlpha" in2="o2" operator="out" result="m2"/><feFlood flood-color="#8cf0ff" flood-opacity="0.85"/><feComposite in2="m2" operator="in" result="lt"/><feMerge><feMergeNode in="SourceGraphic"/><feMergeNode in="lt"/><feMergeNode in="dk"/></feMerge></filter><filter id="v1" x="-30%" y="-30%" width="160%" height="160%" color-interpolation-filters="sRGB"><feGaussianBlur in="SourceAlpha" stdDeviation="1" result="b"/><feOffset in="b" dx="-0.7" dy="-0.42" result="o1"/><feComposite in="SourceAlpha" in2="o1" operator="out" result="m1"/><feFlood flood-color="#1872b4" flood-opacity="0.85"/><feComposite in2="m1" operator="in" result="dk"/><feOffset in="b" dx="0.7" dy="0.42" result="o2"/><feComposite in="SourceAlpha" in2="o2" operator="out" result="m2"/><feFlood flood-color="#7fe4ff" flood-opacity="0.6"/><feComposite in2="m2" operator="in" result="lt"/><feMerge><feMergeNode in="SourceGraphic"/><feMergeNode in="lt"/><feMergeNode in="dk"/></feMerge></filter><filter id="blur1"><feGaussianBlur stdDeviation="1"/></filter><filter id="blur2"><feGaussianBlur stdDeviation="2"/></filter><filter id="blur3"><feGaussianBlur stdDeviation="3.5"/></filter><filter id="blur6"><feGaussianBlur stdDeviation="6"/></filter><filter id="blur14" x="-50%" y="-50%" width="200%" height="200%"><feGaussianBlur stdDeviation="16"/></filter><filter id="blur05"><feGaussianBlur stdDeviation="0.5"/></filter><linearGradient id="orG" x1="0" y1="0" x2="1" y2="1"><stop offset="0" stop-color="#f8bc54"/><stop offset="0.5" stop-color="#ec9c2c"/><stop offset="1" stop-color="#c67a18"/></linearGradient></defs></svg><svg style="left:402px;top:0.6px;" width="448.6" height="349" viewBox="0 0 448.6 349"><rect x="0" y="0" width="448.6" height="349" fill="#e0e0e0"/><defs><radialGradient id="vfl" cx="0.5" cy="0.5" r="0.5"><stop offset="0" stop-color="#7b8da8"/><stop offset="0.55" stop-color="#798ba6"/><stop offset="0.78" stop-color="#70809e"/><stop offset="0.86" stop-color="#7786a3" stop-opacity="0.98"/><stop offset="0.93" stop-color="#a7b1c2" stop-opacity="0.7"/><stop offset="0.97" stop-color="#c8cbd5" stop-opacity="0.35"/><stop offset="1" stop-color="#dcdcdf" stop-opacity="0"/></radialGradient><linearGradient id="vfl2" x1="0" y1="0" x2="1" y2="0"><stop offset="0" stop-color="#5f6d90" stop-opacity="0.35"/><stop offset="0.45" stop-color="#6a789a" stop-opacity="0.0"/><stop offset="1" stop-color="#c0c6d6" stop-opacity="0.35"/></linearGradient><clipPath id="vclip"><rect x="0" y="0" width="448.6" height="349"/></clipPath></defs><g clip-path="url(#vclip)"><ellipse cx="246" cy="444" rx="640" ry="202" fill="url(#vfl)"/><g filter="url(#blur14)"><ellipse cx="60" cy="350" rx="150" ry="40" fill="#6f7d9e" opacity="0.45"/><ellipse cx="440" cy="310" rx="80" ry="30" fill="#aab3c8" opacity="0.55"/></g><g filter="url(#blur2)"><path d="M193.69 292.35C195.33 290.72 201.31 288.71 206.74 287.46C212.18 286.21 220.6 286.92 226.31 284.85C232.02 282.79 236.91 277.62 240.99 275.07C245.06 272.51 248.33 269.09 250.77 269.52C253.22 269.96 256.48 275.12 255.66 277.68C254.85 280.23 249.69 282.41 245.88 284.85C242.07 287.3 236.64 290.29 232.83 292.35C229.03 294.42 226.31 295.45 223.05 297.25C219.79 299.04 217.07 302.14 213.26 303.12C209.46 304.1 202.94 304.1 200.22 303.12C197.5 302.14 198.04 299.04 196.96 297.25C195.87 295.45 192.06 293.99 193.69 292.35Z" fill="#454f74" opacity="0.85"/><path d="M255.66 297.25C256.75 295.89 266.54 293.99 271.97 290.72C277.41 287.46 283.39 282.03 288.28 277.68C293.17 273.33 297.52 267.89 301.33 264.63C305.13 261.37 310.57 257.29 311.11 258.11C311.66 258.92 307.85 265.07 304.59 269.52C301.33 273.98 295.89 280.78 291.54 284.85C287.19 288.93 282.84 291.65 278.5 293.99C274.15 296.32 269.25 298.33 265.45 298.88C261.64 299.42 254.58 298.61 255.66 297.25Z" fill="#4a557a" opacity="0.75"/></g><g filter="url(#blur3)"><ellipse cx="227.94" cy="259.74" rx="22.18" ry="8.48" transform="rotate(-6 227.94 259.74)" fill="#8a8c9c" opacity="0.55"/><path d="M245.88 258.11C245.88 256.75 267.62 255.93 278.5 254.85C289.37 253.76 301.33 252.67 311.11 251.59C320.9 250.5 337.2 247.24 337.2 248.32C337.2 249.41 320.9 255.66 311.11 258.11C301.33 260.55 289.37 263 278.5 263C267.62 263 245.88 259.47 245.88 258.11Z" fill="#9a9dae" opacity="0.5"/><ellipse cx="167.6" cy="258.76" rx="11.74" ry="2.94" transform="rotate(-8 167.6 258.76)" fill="#9a9dae" opacity="0.5"/></g><g filter="url(#v2)" fill="#3fbaf0"><path d="M148.07 160.66C145.81 160.88 141.51 162.84 137.93 164.05C134.36 165.25 129.65 166.8 126.61 167.91C123.57 169.01 121.06 169.68 119.71 170.66C118.37 171.65 118.25 173.04 118.56 173.81C118.87 174.58 119.95 175.49 121.56 175.29C123.18 175.09 125.25 173.62 128.25 172.61C131.26 171.6 135.98 170.28 139.57 169.23C143.16 168.17 147.83 167.37 149.81 166.28C151.8 165.19 151.76 163.62 151.47 162.68C151.18 161.74 150.32 160.43 148.07 160.66Z" /><path d="M123.36 167.54C121.85 167.09 119.73 167.47 118.38 167.99C117.02 168.52 116.04 169.13 115.21 170.71C114.38 172.3 114.07 175.05 113.4 177.5C112.72 179.96 111.21 183.54 111.13 185.43C111.06 187.31 112.11 189.01 112.94 188.82C113.77 188.63 115.66 183.54 116.11 184.29C116.56 185.05 115.58 191.01 115.66 193.35C115.73 195.69 115.96 197.95 116.56 198.33C117.17 198.71 118.6 197.39 119.28 195.61C119.96 193.84 119.96 190.14 120.64 187.69C121.32 185.24 122.38 182.97 123.36 180.9C124.34 178.82 125.85 176.94 126.53 175.24C127.21 173.54 127.96 171.99 127.43 170.71C126.9 169.43 124.87 167.99 123.36 167.54Z" /></g><g filter="url(#v5)" fill="#3fbaf0"><path d="M310.81 53.44C312.32 54.57 313.83 58.34 314.21 62.04C314.59 65.74 313.46 71.85 313.08 75.62C312.7 79.4 312.7 80.91 311.95 84.68C311.19 88.45 310.25 95.7 308.55 98.26C306.85 100.83 303.57 101.02 301.76 100.07C299.95 99.13 298.44 95.92 297.68 92.6C296.93 89.28 296.74 84.87 297.23 80.15C297.72 75.44 299.31 68.45 300.63 64.3C301.95 60.15 303.46 57.06 305.15 55.25C306.85 53.44 309.3 52.3 310.81 53.44Z" /><path d="M296.72 88.69C292.37 92.63 282.02 105.02 275.47 112.19C268.92 119.36 262.4 126.6 257.43 131.72C252.46 136.84 247.33 139.24 245.64 142.91C243.96 146.58 245.2 152.03 247.31 153.75C249.41 155.47 255 155.6 258.26 153.23C261.52 150.86 262.76 145.34 266.85 139.52C270.93 133.69 276.86 125.99 282.76 118.3C288.67 110.6 299.13 98.31 302.27 93.35C305.4 88.39 302.52 89.3 301.59 88.52C300.67 87.75 301.08 84.74 296.72 88.69Z" /><path d="M181.77 154.41C182.33 151.32 185.92 149.96 188.56 147.62C191.2 145.28 193.84 141.88 197.62 140.37C201.39 138.86 205.92 138.79 211.2 138.56C216.48 138.34 223.65 138.56 229.31 139.02C234.97 139.47 241.01 139.39 245.16 141.28C249.31 143.17 251.95 146.94 254.21 150.34C256.48 153.73 258.37 158.18 258.74 161.65C259.12 165.13 258.37 168.45 256.48 171.16C254.59 173.88 250.74 176.82 247.42 177.96C244.1 179.09 239.88 179.09 236.56 177.96C233.24 176.82 230.52 173.8 227.5 171.16C224.48 168.52 221.16 164.07 218.44 162.11C215.73 160.15 213.54 159.28 211.2 159.39C208.86 159.5 206.67 161.28 204.41 162.79C202.14 164.3 199.5 165.99 197.62 168.45C195.73 170.9 195.16 177.88 193.09 177.5C191.01 177.13 187.05 170.03 185.16 166.18C183.28 162.33 181.2 157.5 181.77 154.41Z" /><path d="M235.55 176.38C234.86 181.97 238.44 192.69 239.96 200.38C241.49 208.07 243.04 215.52 244.7 222.53C246.36 229.53 248.62 237.1 249.9 242.4C251.18 247.71 251.01 251.77 252.39 254.34C253.76 256.91 256.51 258.13 258.15 257.82C259.78 257.51 261.88 255.36 262.21 252.46C262.54 249.55 260.92 245.76 260.1 240.4C259.28 235.03 258.14 227.27 257.3 220.27C256.46 213.28 255.51 206.06 255.04 198.42C254.56 190.77 256.27 179.67 254.45 174.42C252.63 169.16 247.26 166.57 244.11 166.9C240.96 167.22 236.24 170.8 235.55 176.38Z" /><path d="M257.3 248.4C255.52 249.32 252.95 253.9 251.5 257.4C250.05 260.9 249.22 265.4 248.6 269.4C247.98 273.4 247.53 277.65 247.8 281.4C248.07 285.15 248.88 289.1 250.2 291.9C251.52 294.7 253.73 297.45 255.7 298.2C257.67 298.95 260.18 298.2 262 296.4C263.82 294.6 265.6 291.23 266.6 287.4C267.6 283.57 268.1 277.9 268 273.4C267.9 268.9 266.97 263.98 266 260.4C265.03 256.82 263.65 253.9 262.2 251.9C260.75 249.9 259.08 247.48 257.3 248.4Z" /></g><g filter="url(#v8)" fill="#3fbaf0"><ellipse cx="171.4" cy="178.4" rx="25.4" ry="25.6" transform="rotate(-8 171.4 178.4)" /><path d="M189.69 184.29C191.39 183.24 194.71 188.22 197.62 189.28C200.52 190.33 207.12 190.63 207.12 190.63C207.12 190.63 202.22 194.22 199.88 195.61C197.54 197.01 195.16 199.01 193.09 199.01C191.01 199.01 187.99 198.07 187.43 195.61C186.86 193.16 187.99 185.35 189.69 184.29Z" /></g><path d="M156.2 155.4L149.6 167" stroke="#eaa63c" stroke-width="3.8" stroke-linecap="round"/><path d="M157.4 162.4L168.8 173.6L163.2 185.4L147 169.8Z" fill="url(#orG)" stroke="#eea436" stroke-width="2.2" stroke-linejoin="round"/><path d="M156.6 165.2L165.4 173.6L161 182.2L149.4 170.8Z" fill="#0d0e1c" stroke="#0d0e1c" stroke-width="1.4" stroke-linejoin="round"/><defs><linearGradient id="vamg" gradientUnits="userSpaceOnUse" x1="201.5" y1="145.4" x2="198" y2="162.4"><stop offset="0" stop-color="#000"/><stop offset="0.3" stop-color="#000"/><stop offset="1" stop-color="#fff"/></linearGradient><mask id="varm" maskUnits="userSpaceOnUse" x="100" y="100" width="200" height="200"><rect x="100" y="100" width="200" height="200" fill="url(#vamg)"/></mask></defs><g mask="url(#varm)"><g filter="url(#v2)" fill="#3fbaf0"><path d="M196.02 144.26C194.55 146.9 194.58 151.47 193.71 156.31C192.85 161.14 192.29 166.29 190.83 173.29C189.37 180.29 186.66 191.13 184.94 198.31C183.23 205.5 181.78 211.54 180.54 216.4C179.31 221.26 177.67 225 177.54 227.46C177.41 229.91 178.73 230.84 179.75 231.15C180.77 231.47 182.37 231.47 183.66 229.34C184.94 227.22 185.89 223.21 187.46 218.4C189.02 213.59 190.94 207.63 193.06 200.49C195.18 193.34 198.3 182.51 200.17 175.51C202.04 168.51 203.15 163.32 204.29 158.49C205.42 153.67 207.28 149.55 206.98 146.54C206.69 143.54 204.36 140.85 202.53 140.47C200.7 140.09 197.49 141.62 196.02 144.26Z" /><path d="M176.73 224.19C174.89 224.84 172.17 227.12 170.21 229.41C168.25 231.69 166.41 235.28 164.99 237.89C163.58 240.5 162.82 243.32 161.73 245.06C160.64 246.8 158.69 247.35 158.47 248.32C158.25 249.3 159.23 250.93 160.43 250.93C161.62 250.93 164.23 248.21 165.65 248.32C167.06 248.43 168.15 249.41 168.91 251.59C169.67 253.76 169.45 259.3 170.21 261.37C170.97 263.44 172.49 263.98 173.47 263.98C174.45 263.98 175.1 262.35 176.08 261.37C177.06 260.39 178.26 259.63 179.34 258.11C180.43 256.59 182.06 254.96 182.61 252.24C183.15 249.52 182.61 245.17 182.61 241.8C182.61 238.43 182.82 234.73 182.61 232.02C182.39 229.3 182.28 226.8 181.3 225.49C180.32 224.19 178.58 223.54 176.73 224.19Z" /></g></g><path d="M173 245.4C172.6 251.4 172.2 256.4 172.4 261.4" stroke="#2a98d2" stroke-width="0.7" fill="none"/><path d="M177.4 244.4C177.4 250.4 177 255.4 176.6 259.4" stroke="#2a98d2" stroke-width="0.7" fill="none"/></g></svg><div class="a" style="left:831px;top:333.6px;width:19.5px;height:16px;background:#3a3a3a;border:1px solid #555;"></div><svg style="left:835px;top:337px;" width="12" height="10" viewBox="0 0 12 10"><path d="M0.8 0.8H11v6H8.4L7.4 8.6 6.4 6.8H0.8z" fill="none" stroke="#ccc" stroke-width="0.9"/><path d="M2.6 2.8H9.2M2.6 4.6H9.2" stroke="#ccc" stroke-width="0.7"/></svg><div class="a" style="left:408px;top:370.6px;width:433px;height:1.2px;background:#989898;"></div><svg style="left:445px;top:366.4px;" width="10" height="10" viewBox="0 0 10 10"><circle cx="4.8" cy="4.8" r="3.5" fill="#282828" stroke="#e0e0e0" stroke-width="1.1"/></svg><svg style="left:404.6px;top:379.8px;" width="7" height="7" viewBox="0 0 7 7"><path d="M6.8 0.2V6.8H0.2z" fill="#82bc13"/></svg><svg style="left:474px;top:379.8px;" width="7" height="7" viewBox="0 0 7 7"><path d="M0.2 0.2V6.8H6.8z" fill="#82bc13"/></svg><div class="a" style="left:458.3px;top:405.3px;width:55.6px;height:16px;border:1px solid #4a4a4a;"></div><div class="t" style="top:409.5px;font-size:7.67px;color:#dcdcdc;left:386px;width:200px;text-align:center;">Realtime</div><svg style="left:519.5px;top:407.5px;" width="12" height="12" viewBox="0 0 12 12"><path d="M3 2.2L9.4 6 3 9.8z" fill="#e0e0e0"/></svg><svg style="left:540px;top:407.5px;" width="12" height="12" viewBox="0 0 12 12"><path d="M2.2 2.2H9.8V9.8H2.2z" fill="#e0e0e0"/></svg><svg style="left:560px;top:407.5px;" width="12" height="12" viewBox="0 0 12 12"><path d="M2.4 2.2V9.8" stroke="#e0e0e0" stroke-width="1.3"/><path d="M9.8 2.2L3.6 6 9.8 9.8z" fill="#e0e0e0"/></svg><svg style="left:581px;top:407.5px;" width="12" height="12" viewBox="0 0 12 12"><path d="M6 2.4L0.8 6 6 9.6zM11 2.4L5.8 6 11 9.6z" fill="#e0e0e0"/></svg><svg style="left:600px;top:407.5px;" width="12" height="12" viewBox="0 0 12 12"><path d="M1 2.4L6.2 6 1 9.6zM6 2.4L11.2 6 6 9.6z" fill="#e0e0e0"/></svg><svg style="left:620.6px;top:407.5px;" width="12" height="12" viewBox="0 0 12 12"><path d="M9.6 2.2V9.8" stroke="#e0e0e0" stroke-width="1.3"/><path d="M2.2 2.2L8.4 6 2.2 9.8z" fill="#e0e0e0"/></svg><svg style="left:641px;top:407.5px;" width="12" height="12" viewBox="0 0 12 12"><path d="M1.4 2.4H10.6V8.4H1.4z" fill="none" stroke="#e0e0e0" stroke-width="1.1"/><path d="M8 10H11.4M10 8.6l1.6 1.4-1.6 1.4" stroke="#e0e0e0" stroke-width="0.9" fill="none"/></svg><svg style="left:661px;top:407.5px;" width="12" height="12" viewBox="0 0 12 12"><path d="M1.4 1.6H10.6V7.2H7.6L6.6 9 5.6 7.2H1.4z" fill="none" stroke="#e0e0e0" stroke-width="1"/><path d="M3.4 4.4h1M5.5 4.4h1M7.6 4.4h1" stroke="#e0e0e0" stroke-width="0.9"/></svg><svg style="left:682px;top:407.5px;" width="12" height="12" viewBox="0 0 12 12"><path d="M7.2 1.4V8.6" stroke="#e0e0e0" stroke-width="1.1"/><ellipse cx="5.6" cy="9" rx="1.9" ry="1.5" fill="#e0e0e0"/></svg><div class="a" style="left:699.5px;top:405.3px;width:55px;height:16px;border:1px solid #4a4a4a;"></div><div class="a" style="left:745px;top:405.3px;width:1px;height:16px;background:#4a4a4a;"></div><div class="t" style="top:409.5px;font-size:7.67px;color:#dcdcdc;left:703px;">166</div><svg style="left:747px;top:407px;" width="7" height="13" viewBox="0 0 7 13"><path d="M3.4 1L5.8 4.4H1zM3.4 11.6L5.8 8.2H1z" fill="#e0e0e0"/></svg><svg style="left:760.7px;top:407.5px;" width="12" height="12" viewBox="0 0 12 12"><circle cx="6" cy="6" r="2.9" fill="none" stroke="#e0e0e0" stroke-width="1"/><path d="M10 6L11.6 6" stroke="#e0e0e0" stroke-width="0.9"/><path d="M8.83 8.83L9.96 9.96" stroke="#e0e0e0" stroke-width="0.9"/><path d="M6 10L6 11.6" stroke="#e0e0e0" stroke-width="0.9"/><path d="M3.17 8.83L2.04 9.96" stroke="#e0e0e0" stroke-width="0.9"/><path d="M2 6L0.4 6" stroke="#e0e0e0" stroke-width="0.9"/><path d="M3.17 3.17L2.04 2.04" stroke="#e0e0e0" stroke-width="0.9"/><path d="M6 2L6 0.4" stroke="#e0e0e0" stroke-width="0.9"/><path d="M8.83 3.17L9.96 2.04" stroke="#e0e0e0" stroke-width="0.9"/></svg><svg style="left:781px;top:407.5px;" width="12" height="12" viewBox="0 0 12 12"><rect x="1" y="1.8" width="10.4" height="8.6" rx="1" fill="none" stroke="#e0e0e0" stroke-width="1.1"/><path d="M1 5.2H11.4" stroke="#e0e0e0" stroke-width="1.6"/><path d="M3 7.8H6" stroke="#e0e0e0" stroke-width="1"/></svg>
<div class="a" style="left:854.8px;top:0px;width:528.9px;height:435.6px;background:#282828;"></div><div class="a" style="left:854.8px;top:0px;width:1px;height:433.4px;background:#4a4a4a;"></div><div class="a" style="left:854.8px;top:432.8px;width:528.9px;height:1px;background:#3c3c3c;"></div><div class="a" style="left:855px;top:0px;width:528.7px;height:12.3px;background:#82bc13;"></div><div class="t" style="top:1.8px;font-size:7.39px;color:#10180a;font-weight:bold;left:1025.5px;width:200px;text-align:center;">Curve Editor</div><svg style="left:1365.2px;top:1.4px;" width="10" height="10" viewBox="0 0 10 10"><circle cx="5" cy="5" r="3.9" fill="none" stroke="#1a2a00" stroke-width="1"/><path d="M3.2 3.2L6.8 6.8M6.8 3.2L3.2 6.8" stroke="#1a2a00" stroke-width="1" fill="none"/></svg><div class="a" style="left:855px;top:12.3px;width:528.7px;height:15.5px;background:#000;"></div><div class="t" style="top:16.3px;font-size:7.67px;color:#e6e6e6;left:859px;">Key</div><div class="t" style="top:16.3px;font-size:7.67px;color:#e6e6e6;left:880px;">Tangent</div><div class="t" style="top:16.3px;font-size:7.67px;color:#e6e6e6;left:913.5px;">Navigation</div><div class="t" style="top:16.3px;font-size:7.67px;color:#e6e6e6;left:957px;">Zoom</div><div class="t" style="top:16.3px;font-size:7.67px;color:#e6e6e6;left:983.8px;">Optimize</div><div class="t" style="top:16.3px;font-size:7.67px;color:#e6e6e6;left:1021.4px;">Curve</div><svg style="left:861.5px;top:34.3px;" width="14" height="14" viewBox="0 0 14 14"><path d="M1.4 2.6H11L6.6 7.6 5.4 11.8 3.8 7.2z" fill="none" stroke="#e6e6e6" stroke-width="1.1" stroke-linejoin="round"/><circle cx="9.8" cy="7.6" r="1.5" fill="none" stroke="#e6e6e6" stroke-width="0.9"/></svg><svg style="left:884px;top:34.3px;" width="14" height="14" viewBox="0 0 14 14"><rect x="4.4" y="1.6" width="5.2" height="3.6" rx="0.8" fill="none" stroke="#e6e6e6" stroke-width="1.1"/><path d="M7 5.2V7.4M3.6 9V7.4H10.4V9" fill="none" stroke="#e6e6e6" stroke-width="1"/><circle cx="3.6" cy="10.6" r="1.7" fill="none" stroke="#e6e6e6" stroke-width="1"/><circle cx="10.4" cy="10.6" r="1.7" fill="none" stroke="#e6e6e6" stroke-width="1"/></svg><svg style="left:907px;top:34.3px;" width="14" height="14" viewBox="0 0 14 14"><path d="M7 1.6L12.2 4.4 7 7.2 1.8 4.4z" fill="none" stroke="#82bc13" stroke-width="1"/><path d="M1.8 6.8L7 9.6 12.2 6.8M1.8 9.2L7 12 12.2 9.2" fill="none" stroke="#82bc13" stroke-width="1"/></svg><div class="a" style="left:928.4px;top:32px;width:1px;height:19px;background:#444;"></div><svg style="left:936px;top:34.3px;" width="14" height="14" viewBox="0 0 14 14"><path d="M2 11.4L7 3.2 12 11.4M3.4 3.2H10.6" fill="none" stroke="#4c4c4c" stroke-width="1"/><path d="M5.4 9.6L7 7.4 8.6 9.6z" fill="none" stroke="#4c4c4c" stroke-width="0.7"/></svg><svg style="left:958px;top:34.3px;" width="14" height="14" viewBox="0 0 14 14"><path d="M2.4 3.4C6 5 8 9 11.6 10.6" fill="none" stroke="#4c4c4c" stroke-width="1"/><circle cx="7" cy="7" r="0.9" fill="#4c4c4c"/></svg><svg style="left:981.5px;top:34.3px;" width="14" height="14" viewBox="0 0 14 14"><path d="M1.8 11.6C4.6 10.6 6.2 6.4 7 3 7.8 6.4 9.4 10.6 12.2 11.6M3.8 3H10.2" fill="none" stroke="#4c4c4c" stroke-width="1"/></svg><svg style="left:1004px;top:34.3px;" width="14" height="14" viewBox="0 0 14 14"><path d="M2.6 11.2L11.4 2.8" stroke="#4c4c4c" stroke-width="1"/><circle cx="2.6" cy="11.2" r="0.9" fill="#4c4c4c"/><circle cx="11.4" cy="2.8" r="0.9" fill="#4c4c4c"/></svg><svg style="left:1026.6px;top:34.3px;" width="14" height="14" viewBox="0 0 14 14"><path d="M2.6 11.2H6.6V3H11.4" fill="none" stroke="#4c4c4c" stroke-width="1" stroke-dasharray="2 1"/><circle cx="2.6" cy="11.2" r="0.9" fill="#4c4c4c"/></svg><svg style="left:1049.6px;top:34.3px;" width="14" height="14" viewBox="0 0 14 14"><path d="M2.4 11.2C8 11 11 8 11.4 2.8" fill="none" stroke="#4c4c4c" stroke-width="1"/><circle cx="2.4" cy="11.2" r="0.9" fill="#4c4c4c"/></svg><svg style="left:1072.5px;top:34.3px;" width="14" height="14" viewBox="0 0 14 14"><path d="M2.4 11.2C2.8 6 6 3 11.4 2.8" fill="none" stroke="#4c4c4c" stroke-width="1"/><circle cx="2.4" cy="11.2" r="0.9" fill="#4c4c4c"/></svg><div class="a" style="left:1093.6px;top:32px;width:1px;height:19px;background:#444;"></div><svg style="left:1101.6px;top:34.3px;" width="14" height="14" viewBox="0 0 14 14"><path d="M2.6 11.4L7 2.6 11.4 11.4" fill="none" stroke="#4c4c4c" stroke-width="1"/></svg><svg style="left:1123.6px;top:34.3px;" width="14" height="14" viewBox="0 0 14 14"><path d="M2.6 3L11.4 11" stroke="#4c4c4c" stroke-width="1"/><circle cx="7" cy="7" r="0.9" fill="#4c4c4c"/></svg><svg style="left:1146.4px;top:34.3px;" width="14" height="14" viewBox="0 0 14 14"><path d="M2 3H12" stroke="#82bc13" stroke-width="0.9"/><circle cx="2.4" cy="3" r="1.1" fill="#82bc13"/><circle cx="7" cy="3" r="1.1" fill="#82bc13"/><circle cx="11.6" cy="3" r="1.1" fill="#82bc13"/><path d="M1.6 9C3.4 6.4 5.2 5.6 7 5.6s3.6 0.8 5.4 3.4C10.6 11.6 8.8 12.4 7 12.4S3.4 11.6 1.6 9z" fill="none" stroke="#82bc13" stroke-width="1"/><circle cx="7" cy="9" r="1.7" fill="#82bc13"/></svg><div class="a" style="left:1168px;top:32px;width:1px;height:19px;background:#444;"></div><svg style="left:1175.5px;top:34.3px;" width="14" height="14" viewBox="0 0 14 14"><path d="M7 1.2V12.8M1.2 7H12.8" stroke="#e6e6e6" stroke-width="1"/><path d="M5.4 3L7 1 8.6 3M5.4 11L7 13 8.6 11M3 5.4L1 7 3 8.6M11 5.4L13 7 11 8.6" fill="none" stroke="#e6e6e6" stroke-width="1"/></svg><svg style="left:1199px;top:34.3px;" width="14" height="14" viewBox="0 0 14 14"><path d="M1.6 3.4H11.6" stroke="#e6e6e6" stroke-width="1.2"/><path d="M1.6 5.4H6V8.6H1.6z" fill="#e6e6e6"/><path d="M9 5.6V11.2M6.2 8.4H11.8" stroke="#e6e6e6" stroke-width="1.5"/></svg><svg style="left:1218px;top:43.5px;" width="5" height="4" viewBox="0 0 5 4"><path d="M0.4 0.6H4.4L2.4 3.2z" fill="#e6e6e6"/></svg><svg style="left:1226px;top:34.3px;" width="14" height="14" viewBox="0 0 14 14"><path d="M2.4 3.4H10M2.4 3.4L5.4 7.4 2.4 11.4H5.6" fill="none" stroke="#4c4c4c" stroke-width="1"/><path d="M7.6 7.4L11.6 11.4M11.6 7.4L7.6 11.4" stroke="#4c4c4c" stroke-width="1"/></svg><svg style="left:1248.5px;top:34.3px;" width="14" height="14" viewBox="0 0 14 14"><rect x="1.8" y="1.8" width="10.4" height="10.4" rx="1" fill="none" stroke="#4c4c4c" stroke-width="1"/><rect x="3.4" y="7.2" width="3.6" height="3.6" fill="none" stroke="#4c4c4c" stroke-width="0.8"/><path d="M7.4 6.6L10.6 3.4M8.4 3.4H10.6V5.6" fill="none" stroke="#4c4c4c" stroke-width="0.8"/></svg><div class="a" style="left:1270.5px;top:32px;width:1px;height:19px;background:#444;"></div><svg style="left:1278.4px;top:34.3px;" width="14" height="14" viewBox="0 0 14 14"><path d="M1.4 4.6V1.4H4.6M9.4 1.4H12.6V4.6M12.6 9.4V12.6H9.4M4.6 12.6H1.4V9.4" fill="none" stroke="#e6e6e6" stroke-width="1.2"/><path d="M4 10L10 4" stroke="#e6e6e6" stroke-width="1.1"/><circle cx="4" cy="10" r="1" fill="#e6e6e6"/><circle cx="10" cy="4" r="1" fill="#e6e6e6"/></svg><svg style="left:1297.4px;top:43.5px;" width="5" height="4" viewBox="0 0 5 4"><path d="M0.4 0.6H4.4L2.4 3.2z" fill="#e6e6e6"/></svg><svg style="left:1305.6px;top:34.3px;" width="14" height="14" viewBox="0 0 14 14"><path d="M4 12.4C2.6 10.6 1.6 8.8 1.2 7.4c0.6-0.6 1.6-0.2 2.2 0.8V3.6c0-1 1.4-1 1.4 0V2.4c0-1 1.5-1 1.5 0v0.4c0-1 1.5-1 1.5 0.1V4c0-1 1.5-0.9 1.5 0.1V9c0 1.4-0.6 2.4-1.2 3.4z" fill="none" stroke="#e6e6e6" stroke-width="0.95" stroke-linejoin="round"/><path d="M4.8 3.6V7M6.3 2.9V7M7.8 3.2V7" stroke="#e6e6e6" stroke-width="0.7"/></svg><svg style="left:1328.6px;top:34.3px;" width="14" height="14" viewBox="0 0 14 14"><path d="M2.6 1.8V12.2" stroke="#82bc13" stroke-width="1"/><path d="M1 3.6L2.6 1.6 4.2 3.6M1 10.4L2.6 12.4 4.2 10.4" fill="none" stroke="#82bc13" stroke-width="1"/><circle cx="8.6" cy="6.2" r="2.9" fill="none" stroke="#82bc13" stroke-width="1.1"/><path d="M10.6 8.4L13 11" stroke="#82bc13" stroke-width="1.2"/></svg><svg style="left:1347.6px;top:43.5px;" width="5" height="4" viewBox="0 0 5 4"><path d="M0.4 0.6H4.4L2.4 3.2z" fill="#e6e6e6"/></svg><div class="a" style="left:1354.6px;top:32px;width:1px;height:19px;background:#444;"></div><div class="t" style="top:37.5px;font-size:7.67px;color:#dcdcdc;left:1360px;width:24px;overflow:hidden;">Current</div><div class="a" style="left:864.3px;top:55.9px;width:94.8px;height:16px;border:1px solid #4a4a4a;"></div><svg style="left:868.6px;top:59.4px;" width="10" height="10" viewBox="0 0 10 10"><circle cx="3.8" cy="3.8" r="2.7" fill="none" stroke="#ccc" stroke-width="1"/><path d="M5.8 5.8L8.8 8.8" stroke="#ccc" stroke-width="1.2"/></svg><div class="t" style="top:60.2px;font-size:7.67px;color:#666;left:880px;">Search...</div><div class="a" style="left:864.3px;top:77.9px;width:94.8px;height:324.8px;border:1px solid #4a4a4a;"></div><div class="a" style="left:865.3px;top:116.4px;width:83.6px;height:75.6px;background:#000;"></div><div class="t" style="top:80.9px;font-size:7.84px;color:#e2e2e2;left:881.8px;width:67.2px;overflow:hidden;">MotionRoot \ Rotation X</div><div class="t" style="top:93.48px;font-size:7.84px;color:#e2e2e2;left:881.8px;width:67.2px;overflow:hidden;">MotionRoot \ Rotation Y</div><div class="t" style="top:106.05px;font-size:7.84px;color:#e2e2e2;left:881.8px;width:67.2px;overflow:hidden;">MotionRoot \ Rotation Z</div><div class="t" style="top:118.62px;font-size:7.84px;color:#e2e2e2;left:881.8px;width:67.2px;overflow:hidden;">Hips \ Position X</div><div class="t" style="top:131.2px;font-size:7.84px;color:#e2e2e2;left:881.8px;width:67.2px;overflow:hidden;">Hips \ Position Y</div><div class="t" style="top:143.78px;font-size:7.84px;color:#e2e2e2;left:881.8px;width:67.2px;overflow:hidden;">Hips \ Position Z</div><div class="t" style="top:156.35px;font-size:7.84px;color:#e2e2e2;left:881.8px;width:67.2px;overflow:hidden;">Hips \ Rotation X</div><div class="t" style="top:168.93px;font-size:7.84px;color:#e2e2e2;left:881.8px;width:67.2px;overflow:hidden;">Hips \ Rotation Y</div><div class="t" style="top:181.5px;font-size:7.84px;color:#e2e2e2;left:881.8px;width:67.2px;overflow:hidden;">Hips \ Rotation Z</div><div class="t" style="top:194.07px;font-size:7.84px;color:#e2e2e2;left:881.8px;width:67.2px;overflow:hidden;">Pelvis \ Rotation X</div><div class="t" style="top:206.65px;font-size:7.84px;color:#e2e2e2;left:881.8px;width:67.2px;overflow:hidden;">Pelvis \ Rotation Y</div><div class="t" style="top:219.22px;font-size:7.84px;color:#e2e2e2;left:881.8px;width:67.2px;overflow:hidden;">Pelvis \ Rotation Z</div><div class="t" style="top:231.8px;font-size:7.84px;color:#e2e2e2;left:881.8px;width:67.2px;overflow:hidden;">L_Thigh \ Rotation X</div><div class="t" style="top:244.38px;font-size:7.84px;color:#e2e2e2;left:881.8px;width:67.2px;overflow:hidden;">L_Thigh \ Rotation Y</div><div class="t" style="top:256.95px;font-size:7.84px;color:#e2e2e2;left:881.8px;width:67.2px;overflow:hidden;">L_Thigh \ Rotation Z</div><div class="t" style="top:269.52px;font-size:7.84px;color:#e2e2e2;left:881.8px;width:67.2px;overflow:hidden;">L_Calf \ Rotation X</div><div class="t" style="top:282.1px;font-size:7.84px;color:#e2e2e2;left:881.8px;width:67.2px;overflow:hidden;">L_Calf \ Rotation Y</div><div class="t" style="top:294.67px;font-size:7.84px;color:#e2e2e2;left:881.8px;width:67.2px;overflow:hidden;">L_Calf \ Rotation Z</div><div class="t" style="top:307.25px;font-size:7.84px;color:#e2e2e2;left:881.8px;width:67.2px;overflow:hidden;">L_Foot \ Rotation X</div><div class="t" style="top:319.82px;font-size:7.84px;color:#e2e2e2;left:881.8px;width:67.2px;overflow:hidden;">L_Foot \ Rotation Y</div><div class="t" style="top:332.4px;font-size:7.84px;color:#e2e2e2;left:881.8px;width:67.2px;overflow:hidden;">L_Foot \ Rotation Z</div><div class="t" style="top:344.98px;font-size:7.84px;color:#e2e2e2;left:881.8px;width:67.2px;overflow:hidden;">L_Toe \ Rotation X</div><div class="t" style="top:357.55px;font-size:7.84px;color:#e2e2e2;left:881.8px;width:67.2px;overflow:hidden;">L_Toe \ Rotation Y</div><div class="t" style="top:370.12px;font-size:7.84px;color:#e2e2e2;left:881.8px;width:67.2px;overflow:hidden;">L_Toe \ Rotation Z</div><div class="t" style="top:382.7px;font-size:7.84px;color:#e2e2e2;left:881.8px;width:67.2px;overflow:hidden;">R_Thigh \ Rotation X</div><svg style="left:0px;top:0px;" width="1386" height="440" viewBox="0 0 1386 440"><circle cx="873.6" cy="85.4" r="2" fill="#e26a6a"/><circle cx="873.6" cy="97.98" r="2" fill="#6fc24f"/><circle cx="873.6" cy="110.55" r="2" fill="#6a86e0"/><path d="M873.6 121.12l2 3.5h-4z" fill="#e26a6a"/><path d="M873.6 133.7l2 3.5h-4z" fill="#6fc24f"/><path d="M873.6 146.28l2 3.5h-4z" fill="#6a86e0"/><circle cx="873.6" cy="160.85" r="2" fill="#e26a6a"/><circle cx="873.6" cy="173.43" r="2" fill="#6fc24f"/><circle cx="873.6" cy="186" r="2" fill="#6a86e0"/><circle cx="873.6" cy="198.57" r="2" fill="#e26a6a"/><circle cx="873.6" cy="211.15" r="2" fill="#6fc24f"/><circle cx="873.6" cy="223.72" r="2" fill="#6a86e0"/><circle cx="873.6" cy="236.3" r="2" fill="#e26a6a"/><circle cx="873.6" cy="248.88" r="2" fill="#6fc24f"/><circle cx="873.6" cy="261.45" r="2" fill="#6a86e0"/><circle cx="873.6" cy="274.02" r="2" fill="#e26a6a"/><circle cx="873.6" cy="286.6" r="2" fill="#6fc24f"/><circle cx="873.6" cy="299.17" r="2" fill="#6a86e0"/><circle cx="873.6" cy="311.75" r="2" fill="#e26a6a"/><circle cx="873.6" cy="324.32" r="2" fill="#6fc24f"/><circle cx="873.6" cy="336.9" r="2" fill="#6a86e0"/><circle cx="873.6" cy="349.48" r="2" fill="#e26a6a"/><circle cx="873.6" cy="362.05" r="2" fill="#6fc24f"/><circle cx="873.6" cy="374.62" r="2" fill="#6a86e0"/><circle cx="873.6" cy="387.2" r="2" fill="#e26a6a"/></svg><div class="a" style="left:952px;top:87px;width:3.6px;height:37px;background:#555;border-radius:2px;"></div><div class="a" style="left:868.5px;top:395.8px;width:41.5px;height:3.8px;background:#505050;border-radius:2px;"></div><div class="a" style="left:961.8px;top:211px;width:1.4px;height:36px;background:repeating-linear-gradient(#666 0 1px,transparent 1px 2.4px);"></div><svg style="left:0px;top:0px;" width="1386" height="440" viewBox="0 0 1386 440"><rect x="968.4" y="55.5" width="405.8" height="338.1" fill="#282828"/><path d="M969.2 73.4V393.6" stroke="#393939" stroke-width="1"/><path d="M969.2 69.6V73.6" stroke="#b8b8b8" stroke-width="1"/><path d="M999.25 73.4V393.6" stroke="#393939" stroke-width="1"/><path d="M999.25 69.6V73.6" stroke="#b8b8b8" stroke-width="1"/><path d="M1029.3 73.4V393.6" stroke="#393939" stroke-width="1"/><path d="M1029.3 69.6V73.6" stroke="#b8b8b8" stroke-width="1"/><path d="M1059.35 73.4V393.6" stroke="#393939" stroke-width="1"/><path d="M1059.35 69.6V73.6" stroke="#b8b8b8" stroke-width="1"/><path d="M1089.4 73.4V393.6" stroke="#393939" stroke-width="1"/><path d="M1089.4 69.6V73.6" stroke="#b8b8b8" stroke-width="1"/><path d="M1119.45 73.4V393.6" stroke="#393939" stroke-width="1"/><path d="M1119.45 69.6V73.6" stroke="#b8b8b8" stroke-width="1"/><path d="M1149.5 73.4V393.6" stroke="#393939" stroke-width="1"/><path d="M1149.5 69.6V73.6" stroke="#b8b8b8" stroke-width="1"/><path d="M1179.55 73.4V393.6" stroke="#393939" stroke-width="1"/><path d="M1179.55 69.6V73.6" stroke="#b8b8b8" stroke-width="1"/><path d="M1209.6 73.4V393.6" stroke="#393939" stroke-width="1"/><path d="M1209.6 69.6V73.6" stroke="#b8b8b8" stroke-width="1"/><path d="M1239.65 73.4V393.6" stroke="#393939" stroke-width="1"/><path d="M1239.65 69.6V73.6" stroke="#b8b8b8" stroke-width="1"/><path d="M1269.7 73.4V393.6" stroke="#393939" stroke-width="1"/><path d="M1269.7 69.6V73.6" stroke="#b8b8b8" stroke-width="1"/><path d="M1299.75 73.4V393.6" stroke="#393939" stroke-width="1"/><path d="M1299.75 69.6V73.6" stroke="#b8b8b8" stroke-width="1"/><path d="M1329.8 73.4V393.6" stroke="#393939" stroke-width="1"/><path d="M1329.8 69.6V73.6" stroke="#b8b8b8" stroke-width="1"/><path d="M1359.85 73.4V393.6" stroke="#393939" stroke-width="1"/><path d="M1359.85 69.6V73.6" stroke="#b8b8b8" stroke-width="1"/><path d="M968.4 77.09H1374.2" stroke="#393939" stroke-width="1"/><path d="M968.4 133.13H1374.2" stroke="#393939" stroke-width="1"/><path d="M968.4 189.16H1374.2" stroke="#393939" stroke-width="1"/><path d="M968.4 245.2H1374.2" stroke="#4a4a4a" stroke-width="1.6"/><path d="M968.4 301.24H1374.2" stroke="#393939" stroke-width="1"/><path d="M968.4 357.27H1374.2" stroke="#393939" stroke-width="1"/><path d="M968.4 73.4V56.5H1374.2" stroke="#3e3e3e" stroke-width="1" fill="none"/><path d="M968.4 73.4H1374.2" stroke="#454545" stroke-width="1"/><path d="M968.4 73.4V393.6H1383.2" stroke="#454545" stroke-width="1" fill="none"/><path d="M968.4 402.4H1383.2V393.6" stroke="#454545" stroke-width="1" fill="none"/><path d="M1318.3 71V393.6" stroke="#566020" stroke-width="1"/><g clip-path="url(#gclip)"><path d="M968.4 306.3C1036.97 306.3 1105.53 305.9 1174.1 305.9C1180.2 305.9 1186.3 301.35 1192.4 298.6C1199.4 295.45 1206.4 293.5 1213.4 287.9C1221.47 281.45 1229.53 262.72 1237.6 260.3C1246.63 257.59 1255.67 263.04 1264.7 264.4C1289.73 268.15 1314.77 269.14 1339.8 277.9C1351.13 281.87 1362.47 292.53 1373.8 303.3" fill="none" stroke="#569c40" stroke-width="1.3"/><path d="M968.4 225.1C978.93 225.1 989.47 226.3 1000 226.3C1012.9 226.3 1025.8 226.3 1038.7 226.3C1049.67 226.3 1060.63 227.1 1071.6 227.1C1105.77 227.1 1139.93 226.3 1174.1 226.3C1180.2 226.3 1186.3 226.68 1192.4 227.9C1199.4 229.3 1206.4 230.9 1213.4 237.9C1221.47 245.97 1229.53 272.47 1237.6 288.6C1246.63 306.67 1255.67 332.6 1264.7 332.6C1289.73 332.6 1314.77 325.53 1339.8 300.5C1351.13 289.17 1362.47 263.37 1373.8 237.3" fill="none" stroke="#569c40" stroke-width="1.3"/><path d="M968.4 264.6C978.93 264.6 989.47 265.7 1000 265.7C1012.9 265.7 1025.8 265.7 1038.7 265.7C1049.67 265.7 1060.63 262.6 1071.6 262.6C1083.7 262.6 1095.8 262.6 1107.9 262.6C1117.97 262.6 1128.03 266.5 1138.1 266.5C1150.1 266.5 1162.1 266.2 1174.1 266.2C1180.2 266.2 1186.3 263.4 1192.4 263.4C1199.4 263.4 1206.4 263.7 1213.4 263.7C1221.47 263.7 1229.53 266.04 1237.6 261.2C1246.63 255.78 1255.67 174.1 1264.7 174.1C1289.73 174.1 1314.77 219.94 1339.8 262.5C1351.13 281.77 1362.47 308.87 1373.8 333.8" fill="none" stroke="#586fbe" stroke-width="1.3"/><path d="M968.4 301.2C969.93 301.81 971.47 302.4 973 302.4C982 302.4 991 277.3 1000 277.3C1046.03 277.3 1092.07 277.3 1138.1 277.3C1143.9 277.3 1149.7 261.9 1155.5 261.9C1161.7 261.9 1167.9 270.78 1174.1 277.6C1182.5 286.84 1190.9 303.3 1199.3 303.3C1210 303.3 1220.7 222.85 1231.4 217.5C1240.4 213 1249.4 214.6 1258.4 213.7C1283.53 211.19 1308.67 204.59 1333.8 207.1C1347.13 208.43 1360.47 242.3 1373.8 270.3" fill="none" stroke="#586fbe" stroke-width="1.3"/><path d="M968.4 225.1C978.93 226.15 989.47 237.5 1000 237.5C1058.03 237.5 1116.07 237.6 1174.1 237.6C1180.2 237.6 1186.3 229.8 1192.4 229.8C1199.4 229.8 1206.4 227.9 1213.4 230.7C1221.47 233.93 1229.53 252.68 1237.6 267.2C1246.63 283.46 1255.67 312.1 1264.7 312.1C1289.73 312.1 1314.77 235.1 1339.8 235.1C1351.13 235.1 1362.47 250.27 1373.8 265" fill="none" stroke="#be5c5c" stroke-width="1.3"/><path d="M968.4 138.2C1036.97 138.2 1105.53 138.3 1174.1 138.3C1180.2 138.3 1186.3 148.29 1192.4 154C1199.4 160.55 1206.4 164.04 1213.4 175.1C1221.47 187.84 1229.53 221.37 1237.6 225.4C1246.63 229.92 1255.67 224.7 1264.7 223.8C1289.73 221.3 1314.77 217.73 1339.8 195.2C1351.13 185 1362.47 164.07 1373.8 141.4" fill="none" stroke="#be5c5c" stroke-width="1.3"/><path d="M1174.1 302.9l3 5h-6z" fill="#6fc24f" stroke="#1c1c1c" stroke-width="0.7"/><path d="M1192.4 295.6l3 5h-6z" fill="#6fc24f" stroke="#1c1c1c" stroke-width="0.7"/><path d="M1213.4 284.9l3 5h-6z" fill="#6fc24f" stroke="#1c1c1c" stroke-width="0.7"/><path d="M1237.6 257.3l3 5h-6z" fill="#6fc24f" stroke="#1c1c1c" stroke-width="0.7"/><path d="M1264.7 261.4l3 5h-6z" fill="#6fc24f" stroke="#1c1c1c" stroke-width="0.7"/><path d="M1339.8 274.9l3 5h-6z" fill="#6fc24f" stroke="#1c1c1c" stroke-width="0.7"/><circle cx="1000" cy="226.3" r="2.5" fill="#6fc24f" stroke="#1c1c1c" stroke-width="0.7"/><circle cx="1038.7" cy="226.3" r="2.5" fill="#6fc24f" stroke="#1c1c1c" stroke-width="0.7"/><circle cx="1071.6" cy="227.1" r="2.5" fill="#6fc24f" stroke="#1c1c1c" stroke-width="0.7"/><circle cx="1174.1" cy="226.3" r="2.5" fill="#6fc24f" stroke="#1c1c1c" stroke-width="0.7"/><circle cx="1192.4" cy="227.9" r="2.5" fill="#6fc24f" stroke="#1c1c1c" stroke-width="0.7"/><circle cx="1213.4" cy="237.9" r="2.5" fill="#6fc24f" stroke="#1c1c1c" stroke-width="0.7"/><circle cx="1237.6" cy="288.6" r="2.5" fill="#6fc24f" stroke="#1c1c1c" stroke-width="0.7"/><circle cx="1264.7" cy="332.6" r="2.5" fill="#6fc24f" stroke="#1c1c1c" stroke-width="0.7"/><circle cx="1339.8" cy="300.5" r="2.5" fill="#6fc24f" stroke="#1c1c1c" stroke-width="0.7"/><circle cx="1000" cy="265.7" r="2.5" fill="#6a86e0" stroke="#1c1c1c" stroke-width="0.7"/><circle cx="1038.7" cy="265.7" r="2.5" fill="#6a86e0" stroke="#1c1c1c" stroke-width="0.7"/><circle cx="1071.6" cy="262.6" r="2.5" fill="#6a86e0" stroke="#1c1c1c" stroke-width="0.7"/><circle cx="1107.9" cy="262.6" r="2.5" fill="#6a86e0" stroke="#1c1c1c" stroke-width="0.7"/><circle cx="1138.1" cy="266.5" r="2.5" fill="#6a86e0" stroke="#1c1c1c" stroke-width="0.7"/><circle cx="1174.1" cy="266.2" r="2.5" fill="#6a86e0" stroke="#1c1c1c" stroke-width="0.7"/><circle cx="1192.4" cy="263.4" r="2.5" fill="#6a86e0" stroke="#1c1c1c" stroke-width="0.7"/><circle cx="1213.4" cy="263.7" r="2.5" fill="#6a86e0" stroke="#1c1c1c" stroke-width="0.7"/><circle cx="1237.6" cy="261.2" r="2.5" fill="#6a86e0" stroke="#1c1c1c" stroke-width="0.7"/><circle cx="1264.7" cy="174.1" r="2.5" fill="#6a86e0" stroke="#1c1c1c" stroke-width="0.7"/><circle cx="1339.8" cy="262.5" r="2.5" fill="#6a86e0" stroke="#1c1c1c" stroke-width="0.7"/><path d="M1000 274.3l3 5h-6z" fill="#6a86e0" stroke="#1c1c1c" stroke-width="0.7"/><path d="M1138.1 274.3l3 5h-6z" fill="#6a86e0" stroke="#1c1c1c" stroke-width="0.7"/><path d="M1174.1 274.6l3 5h-6z" fill="#6a86e0" stroke="#1c1c1c" stroke-width="0.7"/><path d="M1231.4 214.5l3 5h-6z" fill="#6a86e0" stroke="#1c1c1c" stroke-width="0.7"/><path d="M1258.4 210.7l3 5h-6z" fill="#6a86e0" stroke="#1c1c1c" stroke-width="0.7"/><path d="M1333.8 204.1l3 5h-6z" fill="#6a86e0" stroke="#1c1c1c" stroke-width="0.7"/><circle cx="1000" cy="237.5" r="2.5" fill="#e26a6a" stroke="#1c1c1c" stroke-width="0.7"/><circle cx="1174.1" cy="237.6" r="2.5" fill="#e26a6a" stroke="#1c1c1c" stroke-width="0.7"/><circle cx="1192.4" cy="229.8" r="2.5" fill="#e26a6a" stroke="#1c1c1c" stroke-width="0.7"/><circle cx="1213.4" cy="230.7" r="2.5" fill="#e26a6a" stroke="#1c1c1c" stroke-width="0.7"/><circle cx="1237.6" cy="267.2" r="2.5" fill="#e26a6a" stroke="#1c1c1c" stroke-width="0.7"/><circle cx="1264.7" cy="312.1" r="2.5" fill="#e26a6a" stroke="#1c1c1c" stroke-width="0.7"/><circle cx="1339.8" cy="235.1" r="2.5" fill="#e26a6a" stroke="#1c1c1c" stroke-width="0.7"/><path d="M1174.1 135.3l3 5h-6z" fill="#e26a6a" stroke="#1c1c1c" stroke-width="0.7"/><path d="M1192.4 151l3 5h-6z" fill="#e26a6a" stroke="#1c1c1c" stroke-width="0.7"/><path d="M1213.4 172.1l3 5h-6z" fill="#e26a6a" stroke="#1c1c1c" stroke-width="0.7"/><path d="M1237.6 222.4l3 5h-6z" fill="#e26a6a" stroke="#1c1c1c" stroke-width="0.7"/><path d="M1264.7 220.8l3 5h-6z" fill="#e26a6a" stroke="#1c1c1c" stroke-width="0.7"/><path d="M1339.8 192.2l3 5h-6z" fill="#e26a6a" stroke="#1c1c1c" stroke-width="0.7"/></g><defs><clipPath id="gclip"><rect x="968.4" y="73.4" width="405.8" height="320.2"/></clipPath></defs><rect x="1315.3" y="56.6" width="6.4" height="15" fill="#82bc13"/><rect x="1374.2" y="393.6" width="9" height="9" fill="#3a3a3a"/><rect x="1377.6" y="252" width="3.6" height="31" rx="1.8" fill="#555"/><rect x="1191.2" y="396.2" width="30" height="3.8" rx="1.9" fill="#555"/></svg><div class="t" style="top:58.3px;font-size:7.76px;color:#bcbcbc;left:968.4px;">50</div><div class="t" style="top:58.3px;font-size:7.76px;color:#bcbcbc;left:998.45px;">60</div><div class="t" style="top:58.3px;font-size:7.76px;color:#bcbcbc;left:1028.5px;">70</div><div class="t" style="top:58.3px;font-size:7.76px;color:#bcbcbc;left:1058.55px;">80</div><div class="t" style="top:58.3px;font-size:7.76px;color:#bcbcbc;left:1088.6px;">90</div><div class="t" style="top:58.3px;font-size:7.76px;color:#bcbcbc;left:1118.85px;">100</div><div class="t" style="top:58.3px;font-size:7.76px;color:#bcbcbc;left:1148.9px;">110</div><div class="t" style="top:58.3px;font-size:7.76px;color:#bcbcbc;left:1178.95px;">120</div><div class="t" style="top:58.3px;font-size:7.76px;color:#bcbcbc;left:1209px;">130</div><div class="t" style="top:58.3px;font-size:7.76px;color:#bcbcbc;left:1239.05px;">140</div><div class="t" style="top:58.3px;font-size:7.76px;color:#bcbcbc;left:1269.1px;">150</div><div class="t" style="top:58.3px;font-size:7.76px;color:#bcbcbc;left:1299.15px;">160</div><div class="t" style="top:58.3px;font-size:7.76px;color:#bcbcbc;left:1329.2px;">170</div><div class="t" style="top:58.3px;font-size:7.76px;color:#bcbcbc;left:1359.25px;">180</div><div class="t" style="top:72.89px;font-size:7.67px;color:#b8b8b8;left:975.2px;">150</div><div class="t" style="top:128.13px;font-size:7.67px;color:#b8b8b8;left:975.2px;">100</div><div class="t" style="top:184.16px;font-size:7.67px;color:#b8b8b8;left:975.2px;">50</div><div class="t" style="top:240.2px;font-size:7.67px;color:#b8b8b8;left:974.6px;">0</div><div class="t" style="top:296.24px;font-size:7.67px;color:#b8b8b8;left:974.2px;">-50</div><div class="t" style="top:352.27px;font-size:7.67px;color:#b8b8b8;left:974.2px;">-100</div><div class="t" style="top:415.2px;font-size:7.67px;color:#dcdcdc;left:864.2px;">Edit :</div><div class="a" style="left:890.5px;top:411.2px;width:82.4px;height:16px;border:1px solid #4a4a4a;"></div><div class="t" style="top:415.2px;font-size:7.67px;color:#dcdcdc;left:896.2px;">Layer Keys</div><svg style="left:962.5px;top:416.8px;" width="7" height="5" viewBox="0 0 7 5"><path d="M0.4 0.6H6.4L3.4 4.2z" fill="#eee"/></svg><div class="t" style="top:415.2px;font-size:7.67px;color:#dcdcdc;left:982.5px;">Time :</div><div class="a" style="left:1013.3px;top:411.2px;width:82px;height:16px;border:1px solid #4a4a4a;"></div><div class="t" style="top:415.2px;font-size:7.67px;color:#dcdcdc;left:1018.8px;">Project Time</div><svg style="left:1085px;top:416.8px;" width="7" height="5" viewBox="0 0 7 5"><path d="M0.4 0.6H6.4L3.4 4.2z" fill="#eee"/></svg><div class="a" style="left:1114px;top:410.2px;width:61px;height:17.6px;border:1px solid #4a4a4a;"></div><div class="t" style="top:415.2px;font-size:7.67px;color:#dcdcdc;left:1044.2px;width:200px;text-align:center;">FK Mode</div><div class="a" style="left:1184.2px;top:410px;width:1px;height:18px;background:#444;"></div><div class="t" style="top:415.2px;font-size:7.67px;color:#dcdcdc;left:1193.6px;">Frame :</div><div class="a" style="left:1226.9px;top:410.2px;width:57px;height:17.6px;border:1px solid #4a4a4a;"></div><div class="t" style="top:415.2px;font-size:7.67px;color:#dcdcdc;left:1292.8px;">Value :</div><div class="a" style="left:1322px;top:410.2px;width:57px;height:17.6px;border:1px solid #4a4a4a;"></div>
<div class="a" style="left:173px;top:435.6px;width:1210.7px;height:2px;background:#1c1c24;"></div><div class="a" style="left:173px;top:437.4px;width:1210.7px;height:154.2px;background:#282828;"></div><div class="a" style="left:173px;top:437.4px;width:1210.7px;height:12.9px;background:#82bc13;"></div><div class="a" style="left:173px;top:437.4px;width:1210.7px;height:1px;background:#92d20c;"></div><div class="t" style="top:439.5px;font-size:7.39px;color:#10180a;font-weight:bold;left:685px;width:200px;text-align:center;">Timeline</div><svg style="left:1365px;top:439px;" width="10" height="10" viewBox="0 0 10 10"><circle cx="5" cy="5" r="3.9" fill="none" stroke="#1a2a00" stroke-width="1"/><path d="M3.2 3.2L6.8 6.8M6.8 3.2L3.2 6.8" stroke="#1a2a00" stroke-width="1" fill="none"/></svg><div class="a" style="left:760px;top:435.2px;width:38px;height:1.2px;background:repeating-linear-gradient(90deg,#888 0 1px,transparent 1px 3px);"></div><svg style="left:185.3px;top:458.3px;" width="14" height="12" viewBox="0 0 14 12"><path d="M4.6 2.4H12.6M4.6 6H12.6M4.6 9.6H12.6" stroke="#e6e6e6" stroke-width="1.1"/><circle cx="2.2" cy="2.4" r="1" fill="none" stroke="#e6e6e6" stroke-width="0.8"/><circle cx="2.2" cy="6" r="1" fill="none" stroke="#e6e6e6" stroke-width="0.8"/><circle cx="2.2" cy="9.6" r="1" fill="none" stroke="#e6e6e6" stroke-width="0.8"/><path d="M2.2 3.4V5M2.2 7V8.6" stroke="#e6e6e6" stroke-width="0.7"/></svg><svg style="left:209.5px;top:458.3px;" width="14" height="12" viewBox="0 0 14 12"><path d="M2.4 3.4H11.6V10.6H2.4z" fill="none" stroke="#82bc13" stroke-width="1.1"/><path d="M5.6 5V9M8.4 5V9M5.6 7H8.4" stroke="#82bc13" stroke-width="1.2"/><path d="M1 2.4L3.4 0.4" stroke="#82bc13" stroke-width="0.9"/></svg><svg style="left:232.8px;top:458.3px;" width="14" height="12" viewBox="0 0 14 12"><path d="M2.4 3.4H11.6V10.6H2.4z" fill="none" stroke="#82bc13" stroke-width="1.1"/><path d="M2.4 7H11.6" stroke="#82bc13" stroke-width="1.4"/><path d="M1 2.4L3.4 0.4" stroke="#82bc13" stroke-width="0.9"/></svg><svg style="left:255.6px;top:458.3px;" width="14" height="12" viewBox="0 0 14 12"><path d="M2.4 3.4H11.6V10.6H2.4z" fill="none" stroke="#858585" stroke-width="1.1"/></svg><svg style="left:279px;top:458.3px;" width="14" height="12" viewBox="0 0 14 12"><path d="M1.4 2.6H10.6" stroke="#858585" stroke-width="1.1"/><path d="M1.6 5H5V8.2H1.6z" fill="#858585"/><path d="M9 5V10.2M6.4 7.6H11.6" stroke="#858585" stroke-width="1.3"/></svg><svg style="left:302.2px;top:458.3px;" width="14" height="12" viewBox="0 0 14 12"><path d="M1.4 2.6H11.6" stroke="#b8b8b8" stroke-width="1.1"/><path d="M1.6 5H5V8.2H1.6z" fill="#b8b8b8"/><path d="M6.4 7.4H11M9.2 5.4L11.4 7.4 9.2 9.4" stroke="#b8b8b8" stroke-width="1.1" fill="none"/></svg><svg style="left:325.4px;top:458.3px;" width="14" height="12" viewBox="0 0 14 12"><path d="M3.4 2H8.4L10.6 4.2V11H3.4z" fill="none" stroke="#e6e6e6" stroke-width="1.1"/><path d="M5.2 1V9.6H11.6" fill="none" stroke="#e6e6e6" stroke-width="0.8"/></svg><svg style="left:344.8px;top:466px;" width="5" height="4" viewBox="0 0 5 4"><path d="M0.4 0.6H4.4L2.4 3.2z" fill="#e6e6e6"/></svg><svg style="left:357px;top:458.3px;" width="14" height="12" viewBox="0 0 14 12"><path d="M7 0.8V11.2" stroke="#858585" stroke-width="0.9" stroke-dasharray="1.4 1"/><path d="M2.6 3.6H5.4V8.4H2.6zM8.6 3.6H11.4V8.4H8.6z" fill="none" stroke="#858585" stroke-width="1"/></svg><svg style="left:380px;top:458.3px;" width="14" height="12" viewBox="0 0 14 12"><path d="M1.6 2.6H12.4V9.4H1.6z" fill="none" stroke="#82bc13" stroke-width="1.2"/><path d="M4.6 2.6V9.4" stroke="#82bc13" stroke-width="1.1"/><rect x="9" y="5.2" width="1.8" height="1.8" fill="#82bc13"/></svg><div class="a" style="left:401.2px;top:454.5px;width:1px;height:19px;background:#444;"></div><svg style="left:409px;top:458.3px;" width="14" height="12" viewBox="0 0 14 12"><path d="M4.6 2V9" stroke="#858585" stroke-width="1"/><ellipse cx="3.4" cy="9.2" rx="1.6" ry="1.2" fill="#858585"/><path d="M7.4 3.4H11.6M7.4 6H11.6M7.4 8.6H11.6" stroke="#858585" stroke-width="0.9"/></svg><svg style="left:432.2px;top:458.3px;" width="14" height="12" viewBox="0 0 14 12"><path d="M1.4 5.4C3 3 5 2.6 7 4 9 2.6 11 3 12.6 5.4 11 8.6 9 9.2 7 9.2S3 8.6 1.4 5.4z" fill="#e6e6e6"/><path d="M10.4 7.4V11.4M8.4 9.4H12.4" stroke="#e6e6e6" stroke-width="1.2"/></svg><svg style="left:455.6px;top:458.3px;" width="14" height="12" viewBox="0 0 14 12"><path d="M3 1.6H9L11.4 4V11H3z" fill="none" stroke="#858585" stroke-width="1"/><path d="M4.6 9V3.6L6.4 6.4 8.2 3.6V9" fill="none" stroke="#858585" stroke-width="0.9"/></svg><div class="a" style="left:476.3px;top:454.5px;width:1px;height:19px;background:#444;"></div><svg style="left:483.4px;top:458.3px;" width="14" height="12" viewBox="0 0 14 12"><path d="M1.4 3H12.6V9H1.4z" fill="none" stroke="#82bc13" stroke-width="1.2"/><path d="M7 3.6H12V8.4H7z" fill="#82bc13"/><path d="M8.4 6H10.8M9.6 4.8V7.2" stroke="#282828" stroke-width="0.9"/></svg><svg style="left:507.2px;top:458.3px;" width="14" height="12" viewBox="0 0 14 12"><rect x="1.4" y="2.8" width="11.2" height="6.4" rx="1.2" fill="none" stroke="#e6e6e6" stroke-width="1.2"/><path d="M3.6 6H10.4M5 4.6L3.4 6 5 7.4M9 4.6L10.6 6 9 7.4" fill="none" stroke="#e6e6e6" stroke-width="1"/></svg><div class="a" style="left:528.3px;top:454.5px;width:1px;height:19px;background:#444;"></div><svg style="left:535.8px;top:458.3px;" width="14" height="12" viewBox="0 0 14 12"><path d="M1.8 2.8H6.6V9.2H1.8z" fill="none" stroke="#e6e6e6" stroke-width="1.1"/><path d="M3.4 2.8V9.2" stroke="#e6e6e6" stroke-width="0.9"/><path d="M10 3.6V8.4M7.6 6H12.4" stroke="#e6e6e6" stroke-width="1.4"/></svg><svg style="left:559px;top:458.3px;" width="14" height="12" viewBox="0 0 14 12"><path d="M1.8 2.8H6.6V9.2H1.8z" fill="none" stroke="#858585" stroke-width="1.1"/><path d="M3.4 2.8V9.2" stroke="#858585" stroke-width="0.9"/><path d="M8.4 4.2L12 7.8M12 4.2L8.4 7.8" stroke="#858585" stroke-width="1.1"/></svg><svg style="left:582.5px;top:458.3px;" width="14" height="12" viewBox="0 0 14 12"><path d="M2 2.8H12V9.2H2z" fill="none" stroke="#e6e6e6" stroke-width="1.2"/><path d="M5 2.8V9.2M9 2.8V9.2M5 6H9" stroke="#e6e6e6" stroke-width="1.1"/></svg><div class="a" style="left:603.5px;top:454.5px;width:1px;height:19px;background:#444;"></div><svg style="left:610.6px;top:458.3px;" width="14" height="12" viewBox="0 0 14 12"><circle cx="6.4" cy="5.6" r="3.7" fill="none" stroke="#e6e6e6" stroke-width="1"/><path d="M4.6 5.6H8.2M6.4 3.8V7.4" stroke="#e6e6e6" stroke-width="0.9"/><path d="M9 8.4L11.6 11" stroke="#e6e6e6" stroke-width="1.1"/></svg><svg style="left:629.8px;top:466px;" width="5" height="4" viewBox="0 0 5 4"><path d="M0.4 0.6H4.4L2.4 3.2z" fill="#e6e6e6"/></svg><svg style="left:642.2px;top:458.3px;" width="14" height="12" viewBox="0 0 14 12"><path d="M1.8 5V10.4H12.2V5H9.6M4.4 5H1.8" fill="none" stroke="#e6e6e6" stroke-width="1.1"/><path d="M4.6 2.6H9.4L7 5.8z" fill="#e6e6e6"/></svg><div class="a" style="left:662.7px;top:454.5px;width:1px;height:19px;background:#444;"></div><svg style="left:670.4px;top:458.3px;" width="14" height="12" viewBox="0 0 14 12"><path d="M4.4 2.6L10.4 6 4.4 9.4z" fill="#e6e6e6"/></svg><svg style="left:694.2px;top:458.3px;" width="14" height="12" viewBox="0 0 14 12"><path d="M3.6 2.6H10.4V9.4H3.6z" fill="#e6e6e6"/></svg><div class="t" style="top:460.4px;font-size:7.67px;color:#dcdcdc;left:714.3px;">Current Frame :</div><div class="a" style="left:771.4px;top:455.2px;width:61px;height:17.6px;border:1px solid #4a4a4a;"></div><div class="t" style="top:460.4px;font-size:7.67px;color:#dcdcdc;left:777px;">166</div><svg style="left:1364.6px;top:458.8px;" width="14" height="12" viewBox="0 0 14 12"><g transform="translate(1.2,0.6) scale(0.82)"><rect x="1.4" y="0.8" width="11" height="5" rx="1" fill="none" stroke="#82bc13" stroke-width="1.1"/><path d="M4.6 3.4H9.2" stroke="#82bc13" stroke-width="1"/><path d="M4 6.6H9.8L6.9 9z" fill="#82bc13"/><path d="M2.6 7.4C3 9.6 5 10.8 6.9 10.8S10.8 9.6 11.2 7.4" fill="none" stroke="#82bc13" stroke-width="1"/></g></svg><svg style="left:0px;top:0px;" width="1386" height="600" viewBox="0 0 1386 600"><path d="M173 478.2H1383.7" stroke="#3c3c3c" stroke-width="1"/><path d="M330.39 491.2V495.2" stroke="#c8c8c8" stroke-width="1"/><path d="M361.92 491.2V495.2" stroke="#c8c8c8" stroke-width="1"/><path d="M393.46 491.2V495.2" stroke="#c8c8c8" stroke-width="1"/><path d="M424.99 491.2V495.2" stroke="#c8c8c8" stroke-width="1"/><path d="M456.53 491.2V495.2" stroke="#c8c8c8" stroke-width="1"/><path d="M488.06 491.2V495.2" stroke="#c8c8c8" stroke-width="1"/><path d="M519.6 491.2V495.2" stroke="#c8c8c8" stroke-width="1"/><path d="M551.13 491.2V495.2" stroke="#c8c8c8" stroke-width="1"/><path d="M582.66 491.2V495.2" stroke="#c8c8c8" stroke-width="1"/><path d="M614.2 491.2V495.2" stroke="#c8c8c8" stroke-width="1"/><path d="M645.74 491.2V495.2" stroke="#c8c8c8" stroke-width="1"/><path d="M677.27 491.2V495.2" stroke="#c8c8c8" stroke-width="1"/><path d="M708.81 491.2V495.2" stroke="#c8c8c8" stroke-width="1"/><path d="M740.34 491.2V495.2" stroke="#c8c8c8" stroke-width="1"/><path d="M771.88 491.2V495.2" stroke="#c8c8c8" stroke-width="1"/><path d="M803.41 491.2V495.2" stroke="#c8c8c8" stroke-width="1"/><path d="M834.95 491.2V495.2" stroke="#c8c8c8" stroke-width="1"/><path d="M866.48 491.2V495.2" stroke="#c8c8c8" stroke-width="1"/><path d="M898.02 491.2V495.2" stroke="#c8c8c8" stroke-width="1"/><path d="M929.55 491.2V495.2" stroke="#c8c8c8" stroke-width="1"/><path d="M961.09 491.2V495.2" stroke="#c8c8c8" stroke-width="1"/><path d="M992.62 491.2V495.2" stroke="#c8c8c8" stroke-width="1"/><path d="M1024.16 491.2V495.2" stroke="#c8c8c8" stroke-width="1"/><path d="M1055.69 491.2V495.2" stroke="#c8c8c8" stroke-width="1"/><path d="M1087.22 491.2V495.2" stroke="#c8c8c8" stroke-width="1"/><path d="M1118.76 491.2V495.2" stroke="#c8c8c8" stroke-width="1"/><path d="M1150.3 491.2V495.2" stroke="#c8c8c8" stroke-width="1"/><path d="M1181.83 491.2V495.2" stroke="#c8c8c8" stroke-width="1"/><path d="M1213.37 491.2V495.2" stroke="#c8c8c8" stroke-width="1"/><path d="M1244.9 491.2V495.2" stroke="#c8c8c8" stroke-width="1"/><path d="M1276.43 491.2V495.2" stroke="#c8c8c8" stroke-width="1"/><path d="M1307.97 491.2V495.2" stroke="#c8c8c8" stroke-width="1"/><path d="M1339.51 491.2V495.2" stroke="#c8c8c8" stroke-width="1"/><path d="M1371.04 491.2V495.2" stroke="#c8c8c8" stroke-width="1"/><rect x="301.6" y="495.6" width="1074.6" height="9.8" fill="#333333"/><rect x="359.32" y="495.6" width="5.2" height="9.8" fill="#1c1c1c"/><rect x="422.39" y="495.6" width="5.2" height="9.8" fill="#1c1c1c"/><rect x="485.46" y="495.6" width="5.2" height="9.8" fill="#1c1c1c"/><rect x="548.53" y="495.6" width="5.2" height="9.8" fill="#1c1c1c"/><rect x="611.6" y="495.6" width="5.2" height="9.8" fill="#1c1c1c"/><rect x="674.67" y="495.6" width="5.2" height="9.8" fill="#1c1c1c"/><rect x="737.74" y="495.6" width="5.2" height="9.8" fill="#1c1c1c"/><rect x="800.81" y="495.6" width="5.2" height="9.8" fill="#1c1c1c"/><rect x="863.88" y="495.6" width="5.2" height="9.8" fill="#1c1c1c"/><rect x="926.95" y="495.6" width="5.2" height="9.8" fill="#1c1c1c"/><rect x="990.02" y="495.6" width="5.2" height="9.8" fill="#1c1c1c"/><rect x="1053.09" y="495.6" width="5.2" height="9.8" fill="#1c1c1c"/><rect x="1116.16" y="495.6" width="5.2" height="9.8" fill="#1c1c1c"/><rect x="1179.23" y="495.6" width="5.2" height="9.8" fill="#1c1c1c"/><rect x="1242.3" y="495.6" width="5.2" height="9.8" fill="#1c1c1c"/><rect x="1305.37" y="495.6" width="5.2" height="9.8" fill="#1c1c1c"/><rect x="1368.44" y="495.6" width="5.2" height="9.8" fill="#1c1c1c"/><path d="M308.31 495.6V505.4M314.61 495.6V505.4M320.92 495.6V505.4M327.23 495.6V505.4M333.54 495.6V505.4M339.84 495.6V505.4M346.15 495.6V505.4M352.46 495.6V505.4M358.76 495.6V505.4M365.07 495.6V505.4M371.38 495.6V505.4M377.68 495.6V505.4M383.99 495.6V505.4M390.3 495.6V505.4M396.61 495.6V505.4M402.91 495.6V505.4M409.22 495.6V505.4M415.53 495.6V505.4M421.83 495.6V505.4M428.14 495.6V505.4M434.45 495.6V505.4M440.75 495.6V505.4M447.06 495.6V505.4M453.37 495.6V505.4M459.68 495.6V505.4M465.98 495.6V505.4M472.29 495.6V505.4M478.6 495.6V505.4M484.9 495.6V505.4M491.21 495.6V505.4M497.52 495.6V505.4M503.82 495.6V505.4M510.13 495.6V505.4M516.44 495.6V505.4M522.75 495.6V505.4M529.05 495.6V505.4M535.36 495.6V505.4M541.67 495.6V505.4M547.97 495.6V505.4M554.28 495.6V505.4M560.59 495.6V505.4M566.89 495.6V505.4M573.2 495.6V505.4M579.51 495.6V505.4M585.81 495.6V505.4M592.12 495.6V505.4M598.43 495.6V505.4M604.74 495.6V505.4M611.04 495.6V505.4M617.35 495.6V505.4M623.66 495.6V505.4M629.96 495.6V505.4M636.27 495.6V505.4M642.58 495.6V505.4M648.89 495.6V505.4M655.19 495.6V505.4M661.5 495.6V505.4M667.81 495.6V505.4M674.11 495.6V505.4M680.42 495.6V505.4M686.73 495.6V505.4M693.03 495.6V505.4M699.34 495.6V505.4M705.65 495.6V505.4M711.96 495.6V505.4M718.26 495.6V505.4M724.57 495.6V505.4M730.88 495.6V505.4M737.18 495.6V505.4M743.49 495.6V505.4M749.8 495.6V505.4M756.1 495.6V505.4M762.41 495.6V505.4M768.72 495.6V505.4M775.02 495.6V505.4M781.33 495.6V505.4M787.64 495.6V505.4M793.95 495.6V505.4M800.25 495.6V505.4M806.56 495.6V505.4M812.87 495.6V505.4M819.17 495.6V505.4M825.48 495.6V505.4M831.79 495.6V505.4M838.1 495.6V505.4M844.4 495.6V505.4M850.71 495.6V505.4M857.02 495.6V505.4M863.32 495.6V505.4M869.63 495.6V505.4M875.94 495.6V505.4M882.24 495.6V505.4M888.55 495.6V505.4M894.86 495.6V505.4M901.17 495.6V505.4M907.47 495.6V505.4M913.78 495.6V505.4M920.09 495.6V505.4M926.39 495.6V505.4M932.7 495.6V505.4M939.01 495.6V505.4M945.31 495.6V505.4M951.62 495.6V505.4M957.93 495.6V505.4M964.24 495.6V505.4M970.54 495.6V505.4M976.85 495.6V505.4M983.16 495.6V505.4M989.46 495.6V505.4M995.77 495.6V505.4M1002.08 495.6V505.4M1008.38 495.6V505.4M1014.69 495.6V505.4M1021 495.6V505.4M1027.31 495.6V505.4M1033.61 495.6V505.4M1039.92 495.6V505.4M1046.23 495.6V505.4M1052.53 495.6V505.4M1058.84 495.6V505.4M1065.15 495.6V505.4M1071.45 495.6V505.4M1077.76 495.6V505.4M1084.07 495.6V505.4M1090.38 495.6V505.4M1096.68 495.6V505.4M1102.99 495.6V505.4M1109.3 495.6V505.4M1115.6 495.6V505.4M1121.91 495.6V505.4M1128.22 495.6V505.4M1134.52 495.6V505.4M1140.83 495.6V505.4M1147.14 495.6V505.4M1153.45 495.6V505.4M1159.75 495.6V505.4M1166.06 495.6V505.4M1172.37 495.6V505.4M1178.67 495.6V505.4M1184.98 495.6V505.4M1191.29 495.6V505.4M1197.59 495.6V505.4M1203.9 495.6V505.4M1210.21 495.6V505.4M1216.52 495.6V505.4M1222.82 495.6V505.4M1229.13 495.6V505.4M1235.44 495.6V505.4M1241.74 495.6V505.4M1248.05 495.6V505.4M1254.36 495.6V505.4M1260.66 495.6V505.4M1266.97 495.6V505.4M1273.28 495.6V505.4M1279.59 495.6V505.4M1285.89 495.6V505.4M1292.2 495.6V505.4M1298.51 495.6V505.4M1304.81 495.6V505.4M1311.12 495.6V505.4M1317.43 495.6V505.4M1323.73 495.6V505.4M1330.04 495.6V505.4M1336.35 495.6V505.4M1342.66 495.6V505.4M1348.96 495.6V505.4M1355.27 495.6V505.4M1361.58 495.6V505.4M1367.88 495.6V505.4M1374.19 495.6V505.4" stroke="#282828" stroke-width="1"/><path d="M301.6 505.8H1376.2" stroke="#3c3c3c" stroke-width="1"/><path d="M301.6 520.9H1376.2" stroke="#3c3c3c" stroke-width="1"/><path d="M301.6 535.8H1376.2" stroke="#3c3c3c" stroke-width="1"/><path d="M301.6 550.9H1376.2" stroke="#3c3c3c" stroke-width="1"/><path d="M301.6 565.9H1376.2" stroke="#3c3c3c" stroke-width="1"/><path d="M301.6 581H1376.2" stroke="#3c3c3c" stroke-width="1"/><rect x="302.6" y="508.6" width="1073" height="10" fill="#7e7e7e" stroke="#a4a4a4" stroke-width="0.8"/><path d="M308.31 551.4V580.6M314.61 551.4V580.6M320.92 551.4V580.6M327.23 551.4V580.6M333.54 551.4V580.6M339.84 551.4V580.6M346.15 551.4V580.6M352.46 551.4V580.6M358.76 551.4V580.6M365.07 551.4V580.6M371.38 551.4V580.6M377.68 551.4V580.6M383.99 551.4V580.6M390.3 551.4V580.6M396.61 551.4V580.6M402.91 551.4V580.6M409.22 551.4V580.6M415.53 551.4V580.6M421.83 551.4V580.6M428.14 551.4V580.6M434.45 551.4V580.6M440.75 551.4V580.6M447.06 551.4V580.6M453.37 551.4V580.6M459.68 551.4V580.6M465.98 551.4V580.6M472.29 551.4V580.6M478.6 551.4V580.6M484.9 551.4V580.6M491.21 551.4V580.6M497.52 551.4V580.6M503.82 551.4V580.6M510.13 551.4V580.6M516.44 551.4V580.6M522.75 551.4V580.6M529.05 551.4V580.6M535.36 551.4V580.6M541.67 551.4V580.6M547.97 551.4V580.6M554.28 551.4V580.6M560.59 551.4V580.6M566.89 551.4V580.6M573.2 551.4V580.6M579.51 551.4V580.6M585.81 551.4V580.6M592.12 551.4V580.6M598.43 551.4V580.6M604.74 551.4V580.6M611.04 551.4V580.6M617.35 551.4V580.6M623.66 551.4V580.6M629.96 551.4V580.6M636.27 551.4V580.6M642.58 551.4V580.6M648.89 551.4V580.6M655.19 551.4V580.6M661.5 551.4V580.6M667.81 551.4V580.6M674.11 551.4V580.6M680.42 551.4V580.6M686.73 551.4V580.6M693.03 551.4V580.6M699.34 551.4V580.6M705.65 551.4V580.6M711.96 551.4V580.6M718.26 551.4V580.6M724.57 551.4V580.6M730.88 551.4V580.6M737.18 551.4V580.6M743.49 551.4V580.6M749.8 551.4V580.6M756.1 551.4V580.6M762.41 551.4V580.6M768.72 551.4V580.6M775.02 551.4V580.6M781.33 551.4V580.6M787.64 551.4V580.6M793.95 551.4V580.6M800.25 551.4V580.6M806.56 551.4V580.6M812.87 551.4V580.6M819.17 551.4V580.6M825.48 551.4V580.6M831.79 551.4V580.6M838.1 551.4V580.6M844.4 551.4V580.6M850.71 551.4V580.6M857.02 551.4V580.6M863.32 551.4V580.6M869.63 551.4V580.6M875.94 551.4V580.6M882.24 551.4V580.6M888.55 551.4V580.6M894.86 551.4V580.6M901.17 551.4V580.6M907.47 551.4V580.6M913.78 551.4V580.6M920.09 551.4V580.6M926.39 551.4V580.6M932.7 551.4V580.6M939.01 551.4V580.6M945.31 551.4V580.6M951.62 551.4V580.6M957.93 551.4V580.6M964.24 551.4V580.6M970.54 551.4V580.6M976.85 551.4V580.6M983.16 551.4V580.6M989.46 551.4V580.6M995.77 551.4V580.6M1002.08 551.4V580.6M1008.38 551.4V580.6M1014.69 551.4V580.6M1021 551.4V580.6M1027.31 551.4V580.6M1033.61 551.4V580.6M1039.92 551.4V580.6M1046.23 551.4V580.6M1052.53 551.4V580.6M1058.84 551.4V580.6M1065.15 551.4V580.6M1071.45 551.4V580.6M1077.76 551.4V580.6M1084.07 551.4V580.6M1090.38 551.4V580.6M1096.68 551.4V580.6M1102.99 551.4V580.6M1109.3 551.4V580.6M1115.6 551.4V580.6M1121.91 551.4V580.6M1128.22 551.4V580.6M1134.52 551.4V580.6M1140.83 551.4V580.6M1147.14 551.4V580.6M1153.45 551.4V580.6M1159.75 551.4V580.6M1166.06 551.4V580.6M1172.37 551.4V580.6M1178.67 551.4V580.6M1184.98 551.4V580.6M1191.29 551.4V580.6M1197.59 551.4V580.6M1203.9 551.4V580.6M1210.21 551.4V580.6M1216.52 551.4V580.6M1222.82 551.4V580.6M1229.13 551.4V580.6M1235.44 551.4V580.6M1241.74 551.4V580.6M1248.05 551.4V580.6M1254.36 551.4V580.6M1260.66 551.4V580.6M1266.97 551.4V580.6M1273.28 551.4V580.6M1279.59 551.4V580.6M1285.89 551.4V580.6M1292.2 551.4V580.6M1298.51 551.4V580.6M1304.81 551.4V580.6M1311.12 551.4V580.6M1317.43 551.4V580.6M1323.73 551.4V580.6M1330.04 551.4V580.6M1336.35 551.4V580.6M1342.66 551.4V580.6M1348.96 551.4V580.6M1355.27 551.4V580.6M1361.58 551.4V580.6M1367.88 551.4V580.6M1374.19 551.4V580.6" stroke="#4a4a4a" stroke-width="1"/><path d="M301.6 565.9H1376.2" stroke="#3c3c3c" stroke-width="1"/><path d="M302.56 536.4h5.2v9.6l-2.6 3.6-2.6-3.6z" fill="#b4b4b4"/><path d="M305.16 537V546" stroke="#999" stroke-width="1.2"/><path d="M346.71 536.4h5.2v9.6l-2.6 3.6-2.6-3.6z" fill="#b4b4b4"/><path d="M349.31 537V546" stroke="#999" stroke-width="1.2"/><path d="M378.24 536.4h5.2v9.6l-2.6 3.6-2.6-3.6z" fill="#b4b4b4"/><path d="M380.84 537V546" stroke="#999" stroke-width="1.2"/><path d="M409.78 536.4h5.2v9.6l-2.6 3.6-2.6-3.6z" fill="#b4b4b4"/><path d="M412.38 537V546" stroke="#999" stroke-width="1.2"/><path d="M428.7 536.4h5.2v9.6l-2.6 3.6-2.6-3.6z" fill="#b4b4b4"/><path d="M431.3 537V546" stroke="#999" stroke-width="1.2"/><path d="M441.31 536.4h5.2v9.6l-2.6 3.6-2.6-3.6z" fill="#b4b4b4"/><path d="M443.91 537V546" stroke="#999" stroke-width="1.2"/><path d="M447.62 536.4h5.2v9.6l-2.6 3.6-2.6-3.6z" fill="#b4b4b4"/><path d="M450.22 537V546" stroke="#999" stroke-width="1.2"/><path d="M460.23 536.4h5.2v9.6l-2.6 3.6-2.6-3.6z" fill="#b4b4b4"/><path d="M462.83 537V546" stroke="#999" stroke-width="1.2"/><path d="M466.54 536.4h5.2v9.6l-2.6 3.6-2.6-3.6z" fill="#b4b4b4"/><path d="M469.14 537V546" stroke="#999" stroke-width="1.2"/><path d="M485.46 536.4h5.2v9.6l-2.6 3.6-2.6-3.6z" fill="#b4b4b4"/><path d="M488.06 537V546" stroke="#999" stroke-width="1.2"/><path d="M498.07 536.4h5.2v9.6l-2.6 3.6-2.6-3.6z" fill="#b4b4b4"/><path d="M500.67 537V546" stroke="#999" stroke-width="1.2"/><path d="M517 536.4h5.2v9.6l-2.6 3.6-2.6-3.6z" fill="#b4b4b4"/><path d="M519.6 537V546" stroke="#999" stroke-width="1.2"/><path d="M529.61 536.4h5.2v9.6l-2.6 3.6-2.6-3.6z" fill="#b4b4b4"/><path d="M532.21 537V546" stroke="#999" stroke-width="1.2"/><path d="M535.92 536.4h5.2v9.6l-2.6 3.6-2.6-3.6z" fill="#b4b4b4"/><path d="M538.52 537V546" stroke="#999" stroke-width="1.2"/><path d="M548.53 536.4h5.2v9.6l-2.6 3.6-2.6-3.6z" fill="#b4b4b4"/><path d="M551.13 537V546" stroke="#999" stroke-width="1.2"/><path d="M567.45 536.4h5.2v9.6l-2.6 3.6-2.6-3.6z" fill="#b4b4b4"/><path d="M570.05 537V546" stroke="#999" stroke-width="1.2"/><path d="M586.37 536.4h5.2v9.6l-2.6 3.6-2.6-3.6z" fill="#b4b4b4"/><path d="M588.97 537V546" stroke="#999" stroke-width="1.2"/><path d="M598.99 536.4h5.2v9.6l-2.6 3.6-2.6-3.6z" fill="#b4b4b4"/><path d="M601.59 537V546" stroke="#999" stroke-width="1.2"/><path d="M617.91 536.4h5.2v9.6l-2.6 3.6-2.6-3.6z" fill="#b4b4b4"/><path d="M620.51 537V546" stroke="#999" stroke-width="1.2"/><path d="M636.83 536.4h5.2v9.6l-2.6 3.6-2.6-3.6z" fill="#b4b4b4"/><path d="M639.43 537V546" stroke="#999" stroke-width="1.2"/><path d="M655.75 536.4h5.2v9.6l-2.6 3.6-2.6-3.6z" fill="#b4b4b4"/><path d="M658.35 537V546" stroke="#999" stroke-width="1.2"/><path d="M674.67 536.4h5.2v9.6l-2.6 3.6-2.6-3.6z" fill="#b4b4b4"/><path d="M677.27 537V546" stroke="#999" stroke-width="1.2"/><path d="M699.9 536.4h5.2v9.6l-2.6 3.6-2.6-3.6z" fill="#b4b4b4"/><path d="M702.5 537V546" stroke="#999" stroke-width="1.2"/><path d="M718.82 536.4h5.2v9.6l-2.6 3.6-2.6-3.6z" fill="#b4b4b4"/><path d="M721.42 537V546" stroke="#999" stroke-width="1.2"/><path d="M756.66 536.4h5.2v9.6l-2.6 3.6-2.6-3.6z" fill="#b4b4b4"/><path d="M759.26 537V546" stroke="#999" stroke-width="1.2"/><path d="M781.89 536.4h5.2v9.6l-2.6 3.6-2.6-3.6z" fill="#b4b4b4"/><path d="M784.49 537V546" stroke="#999" stroke-width="1.2"/><path d="M800.81 536.4h5.2v9.6l-2.6 3.6-2.6-3.6z" fill="#b4b4b4"/><path d="M803.41 537V546" stroke="#999" stroke-width="1.2"/><path d="M826.04 536.4h5.2v9.6l-2.6 3.6-2.6-3.6z" fill="#b4b4b4"/><path d="M828.64 537V546" stroke="#999" stroke-width="1.2"/><path d="M876.49 536.4h5.2v9.6l-2.6 3.6-2.6-3.6z" fill="#b4b4b4"/><path d="M879.09 537V546" stroke="#999" stroke-width="1.2"/><path d="M901.72 536.4h5.2v9.6l-2.6 3.6-2.6-3.6z" fill="#b4b4b4"/><path d="M904.32 537V546" stroke="#999" stroke-width="1.2"/><path d="M920.64 536.4h5.2v9.6l-2.6 3.6-2.6-3.6z" fill="#b4b4b4"/><path d="M923.24 537V546" stroke="#999" stroke-width="1.2"/><path d="M964.79 536.4h5.2v9.6l-2.6 3.6-2.6-3.6z" fill="#b4b4b4"/><path d="M967.39 537V546" stroke="#999" stroke-width="1.2"/><path d="M996.33 536.4h5.2v9.6l-2.6 3.6-2.6-3.6z" fill="#b4b4b4"/><path d="M998.93 537V546" stroke="#999" stroke-width="1.2"/><path d="M1040.48 536.4h5.2v9.6l-2.6 3.6-2.6-3.6z" fill="#b4b4b4"/><path d="M1043.08 537V546" stroke="#999" stroke-width="1.2"/><path d="M1078.32 536.4h5.2v9.6l-2.6 3.6-2.6-3.6z" fill="#b4b4b4"/><path d="M1080.92 537V546" stroke="#999" stroke-width="1.2"/><path d="M1122.47 536.4h5.2v9.6l-2.6 3.6-2.6-3.6z" fill="#b4b4b4"/><path d="M1125.07 537V546" stroke="#999" stroke-width="1.2"/><path d="M1160.31 536.4h5.2v9.6l-2.6 3.6-2.6-3.6z" fill="#b4b4b4"/><path d="M1162.91 537V546" stroke="#999" stroke-width="1.2"/><path d="M1172.92 536.4h5.2v9.6l-2.6 3.6-2.6-3.6z" fill="#b4b4b4"/><path d="M1175.52 537V546" stroke="#999" stroke-width="1.2"/><path d="M1217.07 536.4h5.2v9.6l-2.6 3.6-2.6-3.6z" fill="#b4b4b4"/><path d="M1219.67 537V546" stroke="#999" stroke-width="1.2"/><path d="M1229.69 536.4h5.2v9.6l-2.6 3.6-2.6-3.6z" fill="#b4b4b4"/><path d="M1232.29 537V546" stroke="#999" stroke-width="1.2"/><rect x="1374" y="536.4" width="2" height="12" fill="#b4b4b4"/><rect x="1374.8" y="557.4" width="1.2" height="1.6" fill="#ccc"/><path d="M380.84 555.7l2.4 2.4-2.4 2.4-2.4-2.4z" fill="#282828" stroke="#e0e0e0" stroke-width="0.9"/><path d="M412.38 555.7l2.4 2.4-2.4 2.4-2.4-2.4z" fill="#282828" stroke="#e0e0e0" stroke-width="0.9"/><path d="M431.3 555.7l2.4 2.4-2.4 2.4-2.4-2.4z" fill="#282828" stroke="#e0e0e0" stroke-width="0.9"/><path d="M462.83 555.7l2.4 2.4-2.4 2.4-2.4-2.4z" fill="#282828" stroke="#e0e0e0" stroke-width="0.9"/><path d="M488.06 555.7l2.4 2.4-2.4 2.4-2.4-2.4z" fill="#282828" stroke="#e0e0e0" stroke-width="0.9"/><path d="M532.21 555.7l2.4 2.4-2.4 2.4-2.4-2.4z" fill="#282828" stroke="#e0e0e0" stroke-width="0.9"/><path d="M551.13 555.7l2.4 2.4-2.4 2.4-2.4-2.4z" fill="#282828" stroke="#e0e0e0" stroke-width="0.9"/><path d="M588.97 555.7l2.4 2.4-2.4 2.4-2.4-2.4z" fill="#282828" stroke="#e0e0e0" stroke-width="0.9"/><path d="M601.59 555.7l2.4 2.4-2.4 2.4-2.4-2.4z" fill="#282828" stroke="#e0e0e0" stroke-width="0.9"/><path d="M677.27 555.7l2.4 2.4-2.4 2.4-2.4-2.4z" fill="#282828" stroke="#e0e0e0" stroke-width="0.9"/><path d="M721.42 555.7l2.4 2.4-2.4 2.4-2.4-2.4z" fill="#282828" stroke="#e0e0e0" stroke-width="0.9"/><path d="M759.26 555.7l2.4 2.4-2.4 2.4-2.4-2.4z" fill="#282828" stroke="#e0e0e0" stroke-width="0.9"/><path d="M828.64 555.7l2.4 2.4-2.4 2.4-2.4-2.4z" fill="#282828" stroke="#e0e0e0" stroke-width="0.9"/><path d="M879.09 555.7l2.4 2.4-2.4 2.4-2.4-2.4z" fill="#282828" stroke="#e0e0e0" stroke-width="0.9"/><path d="M904.32 555.7l2.4 2.4-2.4 2.4-2.4-2.4z" fill="#282828" stroke="#e0e0e0" stroke-width="0.9"/><path d="M967.39 555.7l2.4 2.4-2.4 2.4-2.4-2.4z" fill="#282828" stroke="#e0e0e0" stroke-width="0.9"/><path d="M1043.08 555.7l2.4 2.4-2.4 2.4-2.4-2.4z" fill="#282828" stroke="#e0e0e0" stroke-width="0.9"/><path d="M1080.92 555.7l2.4 2.4-2.4 2.4-2.4-2.4z" fill="#282828" stroke="#e0e0e0" stroke-width="0.9"/><path d="M1125.07 555.7l2.4 2.4-2.4 2.4-2.4-2.4z" fill="#282828" stroke="#e0e0e0" stroke-width="0.9"/><path d="M1162.91 555.7l2.4 2.4-2.4 2.4-2.4-2.4z" fill="#282828" stroke="#e0e0e0" stroke-width="0.9"/><path d="M1175.52 555.7l2.4 2.4-2.4 2.4-2.4-2.4z" fill="#282828" stroke="#e0e0e0" stroke-width="0.9"/><path d="M1219.67 555.7l2.4 2.4-2.4 2.4-2.4-2.4z" fill="#282828" stroke="#e0e0e0" stroke-width="0.9"/><path d="M1232.29 555.7l2.4 2.4-2.4 2.4-2.4-2.4z" fill="#282828" stroke="#e0e0e0" stroke-width="0.9"/><path d="M412.38 570.7l2.4 2.4-2.4 2.4-2.4-2.4z" fill="#282828" stroke="#e0e0e0" stroke-width="0.9"/><path d="M759.26 570.7l2.4 2.4-2.4 2.4-2.4-2.4z" fill="#282828" stroke="#e0e0e0" stroke-width="0.9"/><path d="M828.64 570.7l2.4 2.4-2.4 2.4-2.4-2.4z" fill="#282828" stroke="#e0e0e0" stroke-width="0.9"/><path d="M305.16 570.9l2.2 2.2-2.2 2.2-2.2-2.2z" fill="#e6e6e6"/><path d="M349.31 570.9l2.2 2.2-2.2 2.2-2.2-2.2z" fill="#e6e6e6"/><path d="M380.84 570.9l2.2 2.2-2.2 2.2-2.2-2.2z" fill="#e6e6e6"/><path d="M431.3 570.9l2.2 2.2-2.2 2.2-2.2-2.2z" fill="#e6e6e6"/><path d="M443.91 570.9l2.2 2.2-2.2 2.2-2.2-2.2z" fill="#e6e6e6"/><path d="M462.83 570.9l2.2 2.2-2.2 2.2-2.2-2.2z" fill="#e6e6e6"/><path d="M469.14 570.9l2.2 2.2-2.2 2.2-2.2-2.2z" fill="#e6e6e6"/><path d="M488.06 570.9l2.2 2.2-2.2 2.2-2.2-2.2z" fill="#e6e6e6"/><path d="M519.6 570.9l2.2 2.2-2.2 2.2-2.2-2.2z" fill="#e6e6e6"/><path d="M551.13 570.9l2.2 2.2-2.2 2.2-2.2-2.2z" fill="#e6e6e6"/><path d="M588.97 570.9l2.2 2.2-2.2 2.2-2.2-2.2z" fill="#e6e6e6"/><path d="M601.59 570.9l2.2 2.2-2.2 2.2-2.2-2.2z" fill="#e6e6e6"/><path d="M658.35 570.9l2.2 2.2-2.2 2.2-2.2-2.2z" fill="#e6e6e6"/><path d="M702.5 570.9l2.2 2.2-2.2 2.2-2.2-2.2z" fill="#e6e6e6"/><path d="M784.49 570.9l2.2 2.2-2.2 2.2-2.2-2.2z" fill="#e6e6e6"/><path d="M803.41 570.9l2.2 2.2-2.2 2.2-2.2-2.2z" fill="#e6e6e6"/><path d="M904.32 570.9l2.2 2.2-2.2 2.2-2.2-2.2z" fill="#e6e6e6"/><path d="M923.24 570.9l2.2 2.2-2.2 2.2-2.2-2.2z" fill="#e6e6e6"/><path d="M967.39 570.9l2.2 2.2-2.2 2.2-2.2-2.2z" fill="#e6e6e6"/><path d="M998.93 570.9l2.2 2.2-2.2 2.2-2.2-2.2z" fill="#e6e6e6"/><path d="M1043.08 570.9l2.2 2.2-2.2 2.2-2.2-2.2z" fill="#e6e6e6"/><path d="M1080.92 570.9l2.2 2.2-2.2 2.2-2.2-2.2z" fill="#e6e6e6"/><path d="M1125.07 570.9l2.2 2.2-2.2 2.2-2.2-2.2z" fill="#e6e6e6"/><path d="M1175.52 570.9l2.2 2.2-2.2 2.2-2.2-2.2z" fill="#e6e6e6"/><path d="M1232.29 570.9l2.2 2.2-2.2 2.2-2.2-2.2z" fill="#e6e6e6"/><path d="M301.6 495.4V591" stroke="#6a6a6a" stroke-width="1"/><path d="M1376.2 478.4V591" stroke="#3c3c3c" stroke-width="1"/><path d="M1345.81 493V581" stroke="#535d1c" stroke-width="1"/><rect x="304.8" y="585.2" width="94.4" height="4" rx="2" fill="#555"/><rect x="180" y="585.2" width="114.5" height="4" rx="2" fill="#4a4a4a"/><rect x="1378.6" y="514.5" width="3.4" height="18.5" rx="1.7" fill="#555"/></svg><div class="a" style="left:299.4px;top:520px;width:1.4px;height:33px;background:repeating-linear-gradient(#888 0 1px,transparent 1px 2.4px);"></div><div class="t" style="top:480.4px;font-size:7.48px;color:#c8c8c8;left:330.79px;">5</div><div class="t" style="top:480.4px;font-size:7.48px;color:#c8c8c8;left:362.32px;">10</div><div class="t" style="top:480.4px;font-size:7.48px;color:#c8c8c8;left:393.86px;">15</div><div class="t" style="top:480.4px;font-size:7.48px;color:#c8c8c8;left:425.39px;">20</div><div class="t" style="top:480.4px;font-size:7.48px;color:#c8c8c8;left:456.93px;">25</div><div class="t" style="top:480.4px;font-size:7.48px;color:#c8c8c8;left:488.46px;">30</div><div class="t" style="top:480.4px;font-size:7.48px;color:#c8c8c8;left:520px;">35</div><div class="t" style="top:480.4px;font-size:7.48px;color:#c8c8c8;left:551.53px;">40</div><div class="t" style="top:480.4px;font-size:7.48px;color:#c8c8c8;left:583.06px;">45</div><div class="t" style="top:480.4px;font-size:7.48px;color:#c8c8c8;left:614.6px;">50</div><div class="t" style="top:480.4px;font-size:7.48px;color:#c8c8c8;left:646.14px;">55</div><div class="t" style="top:480.4px;font-size:7.48px;color:#c8c8c8;left:677.67px;">60</div><div class="t" style="top:480.4px;font-size:7.48px;color:#c8c8c8;left:709.21px;">65</div><div class="t" style="top:480.4px;font-size:7.48px;color:#c8c8c8;left:740.74px;">70</div><div class="t" style="top:480.4px;font-size:7.48px;color:#c8c8c8;left:772.27px;">75</div><div class="t" style="top:480.4px;font-size:7.48px;color:#c8c8c8;left:803.81px;">80</div><div class="t" style="top:480.4px;font-size:7.48px;color:#c8c8c8;left:835.35px;">85</div><div class="t" style="top:480.4px;font-size:7.48px;color:#c8c8c8;left:866.88px;">90</div><div class="t" style="top:480.4px;font-size:7.48px;color:#c8c8c8;left:898.42px;">95</div><div class="t" style="top:480.4px;font-size:7.48px;color:#c8c8c8;left:929.55px;">100</div><div class="t" style="top:480.4px;font-size:7.48px;color:#c8c8c8;left:961.09px;">105</div><div class="t" style="top:480.4px;font-size:7.48px;color:#c8c8c8;left:992.62px;">110</div><div class="t" style="top:480.4px;font-size:7.48px;color:#c8c8c8;left:1024.16px;">115</div><div class="t" style="top:480.4px;font-size:7.48px;color:#c8c8c8;left:1055.69px;">120</div><div class="t" style="top:480.4px;font-size:7.48px;color:#c8c8c8;left:1087.22px;">125</div><div class="t" style="top:480.4px;font-size:7.48px;color:#c8c8c8;left:1118.76px;">130</div><div class="t" style="top:480.4px;font-size:7.48px;color:#c8c8c8;left:1150.3px;">135</div><div class="t" style="top:480.4px;font-size:7.48px;color:#c8c8c8;left:1181.83px;">140</div><div class="t" style="top:480.4px;font-size:7.48px;color:#c8c8c8;left:1213.37px;">145</div><div class="t" style="top:480.4px;font-size:7.48px;color:#c8c8c8;left:1244.9px;">150</div><div class="t" style="top:480.4px;font-size:7.48px;color:#c8c8c8;left:1276.43px;">155</div><div class="t" style="top:480.4px;font-size:7.48px;color:#c8c8c8;left:1307.97px;">160</div><div class="a" style="left:1336.91px;top:480.4px;width:20px;height:10px;overflow:hidden"><div class="t" style="left:0;top:0;font-size:8px;color:#c8c8c8;">165</div></div><div class="a" style="left:1370.64px;top:480.4px;width:5.6px;height:10px;overflow:hidden"><div class="t" style="left:0;top:0;font-size:8px;color:#c8c8c8;">170</div></div><svg style="left:0px;top:0px;" width="1386" height="600" viewBox="0 0 1386 600"><rect x="1342.61" y="480.4" width="6.4" height="13.4" fill="#82bc13"/></svg><div class="t" style="top:509.2px;font-size:7.74px;color:#d6d6d6;left:305px;">Sample Motion (x1.00) Transition Curve Presets : Linear, Time Warp : Linear</div><div class="a" style="left:173px;top:505.3px;width:127px;height:1px;background:#3a3a3a;"></div><div class="a" style="left:173px;top:520.4px;width:127px;height:1px;background:#3a3a3a;"></div><div class="a" style="left:173px;top:535.3px;width:127px;height:1px;background:#3a3a3a;"></div><div class="a" style="left:173px;top:550.4px;width:127px;height:1px;background:#3a3a3a;"></div><div class="a" style="left:173px;top:565.4px;width:127px;height:1px;background:#3a3a3a;"></div><div class="a" style="left:173px;top:580.5px;width:127px;height:1px;background:#3a3a3a;"></div><div class="a" style="left:173px;top:506.4px;width:126.4px;height:14px;background:#000;"></div><div class="a" style="left:190px;top:495.4px;width:90px;height:10px;overflow:hidden;"><div class="t" style="left:8.6px;top:-2.9px;font-size:7.7px;color:#dcdcdc;">Transform</div></div><div class="t" style="top:508.9px;font-size:7.67px;color:#ffffff;font-weight:bold;left:198.2px;">Motion</div><div class="t" style="top:524px;font-size:7.67px;color:#e0e0e0;left:207.9px;">Gesture</div><div class="t" style="top:539.1px;font-size:7.67px;color:#e0e0e0;left:207.9px;">Motion Layer</div><div class="t" style="top:554.1px;font-size:7.67px;color:#e0e0e0;left:217.2px;">Torso</div><div class="t" style="top:569.1px;font-size:7.67px;color:#e0e0e0;left:217.2px;">Head</div><svg style="left:0px;top:0px;" width="1386" height="600" viewBox="0 0 1386 600"><g clip-path="url(#trclip)"><circle cx="289" cy="497.8" r="4" fill="none" stroke="#d8d8d8" stroke-width="0.9"/><path d="M287.4 496.2l3.2 3.2m0-3.2l-3.2 3.2" fill="none" stroke="#d8d8d8" stroke-width="0.9"/></g><path d="M191.2 511v4.4h-4.4z" fill="#e0e0e0"/><circle cx="276" cy="513" r="4" fill="none" stroke="#d8d8d8" stroke-width="0.9"/><path d="M274 512.2l2 2 2-2" fill="none" stroke="#d8d8d8" stroke-width="0.9"/><circle cx="289" cy="513" r="4" fill="none" stroke="#d8d8d8" stroke-width="0.9"/><path d="M287.4 511.4l3.2 3.2m0-3.2l-3.2 3.2" fill="none" stroke="#d8d8d8" stroke-width="0.9"/><path d="M196.9 525.3l3.6 2.8-3.6 2.8z" fill="#e0e0e0"/><circle cx="276" cy="528.1" r="4" fill="none" stroke="#d8d8d8" stroke-width="0.9"/><path d="M274 527.3l2 2 2-2" fill="none" stroke="#d8d8d8" stroke-width="0.9"/><circle cx="289" cy="528.1" r="4" fill="none" stroke="#d8d8d8" stroke-width="0.9"/><path d="M287.4 526.5l3.2 3.2m0-3.2l-3.2 3.2" fill="none" stroke="#d8d8d8" stroke-width="0.9"/><path d="M200.9 541.2v4.4h-4.4z" fill="#e0e0e0"/><circle cx="276" cy="543.2" r="4" fill="none" stroke="#d8d8d8" stroke-width="0.9"/><path d="M274 542.4l2 2 2-2" fill="none" stroke="#d8d8d8" stroke-width="0.9"/><circle cx="289" cy="543.2" r="4" fill="none" stroke="#d8d8d8" stroke-width="0.9"/><path d="M287.4 541.6l3.2 3.2m0-3.2l-3.2 3.2" fill="none" stroke="#d8d8d8" stroke-width="0.9"/><circle cx="289" cy="558.2" r="4" fill="none" stroke="#d8d8d8" stroke-width="0.9"/><path d="M287.4 556.6l3.2 3.2m0-3.2l-3.2 3.2" fill="none" stroke="#d8d8d8" stroke-width="0.9"/><circle cx="289" cy="573.2" r="4" fill="none" stroke="#d8d8d8" stroke-width="0.9"/><path d="M287.4 571.6l3.2 3.2m0-3.2l-3.2 3.2" fill="none" stroke="#d8d8d8" stroke-width="0.9"/><defs><clipPath id="trclip"><rect x="280" y="495.4" width="20" height="12"/></clipPath></defs></svg>
<svg width="0" height="0" style="left:0;top:0"><defs><filter id="t6" x="-30%" y="-30%" width="160%" height="160%" color-interpolation-filters="sRGB"><feGaussianBlur in="SourceAlpha" stdDeviation="6" result="b"/><feOffset in="b" dx="-4" dy="-2.4" result="o1"/><feComposite in="SourceAlpha" in2="o1" operator="out" result="m1"/><feFlood flood-color="#0f5496" flood-opacity="1"/><feComposite in2="m1" operator="in" result="dk"/><feOffset in="b" dx="4" dy="2.4" result="o2"/><feComposite in="SourceAlpha" in2="o2" operator="out" result="m2"/><feFlood flood-color="#66dafc" flood-opacity="0.85"/><feComposite in2="m2" operator="in" result="lt"/><feMerge><feMergeNode in="SourceGraphic"/><feMergeNode in="lt"/><feMergeNode in="dk"/></feMerge></filter><filter id="t4" x="-30%" y="-30%" width="160%" height="160%" color-interpolation-filters="sRGB"><feGaussianBlur in="SourceAlpha" stdDeviation="4.2" result="b"/><feOffset in="b" dx="-2.9" dy="-1.74" result="o1"/><feComposite in="SourceAlpha" in2="o1" operator="out" result="m1"/><feFlood flood-color="#0f5496" flood-opacity="1"/><feComposite in2="m1" operator="in" result="dk"/><feOffset in="b" dx="2.9" dy="1.74" result="o2"/><feComposite in="SourceAlpha" in2="o2" operator="out" result="m2"/><feFlood flood-color="#66dafc" flood-opacity="0.85"/><feComposite in2="m2" operator="in" result="lt"/><feMerge><feMergeNode in="SourceGraphic"/><feMergeNode in="lt"/><feMergeNode in="dk"/></feMerge></filter><filter id="t2" x="-30%" y="-30%" width="160%" height="160%" color-interpolation-filters="sRGB"><feGaussianBlur in="SourceAlpha" stdDeviation="2.1" result="b"/><feOffset in="b" dx="-1.5" dy="-0.9" result="o1"/><feComposite in="SourceAlpha" in2="o1" operator="out" result="m1"/><feFlood flood-color="#0f5496" flood-opacity="1"/><feComposite in2="m1" operator="in" result="dk"/><feOffset in="b" dx="1.5" dy="0.9" result="o2"/><feComposite in="SourceAlpha" in2="o2" operator="out" result="m2"/><feFlood flood-color="#66dafc" flood-opacity="0.85"/><feComposite in2="m2" operator="in" result="lt"/><feMerge><feMergeNode in="SourceGraphic"/><feMergeNode in="lt"/><feMergeNode in="dk"/></feMerge></filter><filter id="t1" x="-30%" y="-30%" width="160%" height="160%" color-interpolation-filters="sRGB"><feGaussianBlur in="SourceAlpha" stdDeviation="1.2" result="b"/><feOffset in="b" dx="-0.8" dy="-0.48" result="o1"/><feComposite in="SourceAlpha" in2="o1" operator="out" result="m1"/><feFlood flood-color="#0f5496" flood-opacity="1"/><feComposite in2="m1" operator="in" result="dk"/><feOffset in="b" dx="0.8" dy="0.48" result="o2"/><feComposite in="SourceAlpha" in2="o2" operator="out" result="m2"/><feFlood flood-color="#66dafc" flood-opacity="0.85"/><feComposite in2="m2" operator="in" result="lt"/><feMerge><feMergeNode in="SourceGraphic"/><feMergeNode in="lt"/><feMergeNode in="dk"/></feMerge></filter><filter id="pk" x="-30%" y="-30%" width="160%" height="160%" color-interpolation-filters="sRGB"><feGaussianBlur in="SourceAlpha" stdDeviation="2.6" result="b"/><feOffset in="b" dx="-1.8" dy="-1.08" result="o1"/><feComposite in="SourceAlpha" in2="o1" operator="out" result="m1"/><feFlood flood-color="#6c4c5c" flood-opacity="0.9"/><feComposite in2="m1" operator="in" result="dk"/><feOffset in="b" dx="1.8" dy="1.08" result="o2"/><feComposite in="SourceAlpha" in2="o2" operator="out" result="m2"/><feFlood flood-color="#f6e4e6" flood-opacity="0.75"/><feComposite in2="m2" operator="in" result="lt"/><feMerge><feMergeNode in="SourceGraphic"/><feMergeNode in="lt"/><feMergeNode in="dk"/></feMerge></filter></defs></svg><svg style="left:279px;top:623.2px;overflow:hidden;box-shadow:2px 2px 3px rgba(0,0,0,0.45);" width="154.4" height="153.8" viewBox="0 0 154.4 153.8"><defs><linearGradient id="tb1" x1="0" y1="0" x2="0" y2="154" gradientUnits="userSpaceOnUse"><stop offset="0" stop-color="#dcdcdc"/><stop offset="0.3" stop-color="#dfdfdf"/><stop offset="0.63" stop-color="#dfdfdf"/><stop offset="0.65" stop-color="#ddddde"/><stop offset="0.67" stop-color="#d7d8db"/><stop offset="0.69" stop-color="#ced1d6"/><stop offset="0.71" stop-color="#c2c9d1"/><stop offset="0.72" stop-color="#b6c0cb"/><stop offset="0.74" stop-color="#abb6c5"/><stop offset="0.76" stop-color="#9faec0"/><stop offset="0.78" stop-color="#96a7bb"/><stop offset="0.8" stop-color="#90a2b8"/><stop offset="0.82" stop-color="#8ea0b7"/><stop offset="1" stop-color="#8497b0"/></linearGradient><clipPath id="tc1"><rect x="0" y="0" width="154.4" height="153.8"/></clipPath></defs><rect x="0" y="0" width="154.4" height="153.8" fill="url(#tb1)"/><g clip-path="url(#tc1)"><g filter="url(#blur6)"><ellipse cx="10" cy="150" rx="60" ry="30" fill="#6d7a9c" opacity="0.5"/></g><g filter="url(#blur1)"><path d="M130.08 118.53C131.11 117.57 136.33 116.02 140.39 115.44C144.45 114.85 152.08 113.99 154.42 115.02C156.75 116.06 155.38 120.35 154.42 121.63C153.45 122.9 149.43 121.63 148.64 122.66C147.85 123.69 151.05 126.61 149.67 127.81C148.3 129.02 142.28 128.5 140.39 129.88C138.5 131.25 140.05 134.86 138.33 136.06C136.61 137.27 132.31 137.61 130.08 137.1C127.84 136.58 124.92 134.35 124.92 132.97C124.92 131.59 127.5 129.7 130.08 128.84C132.65 127.99 138.5 128.95 140.39 127.81C142.28 126.68 142.45 123.14 141.42 122.04C140.39 120.94 136.09 121.8 134.2 121.21C132.31 120.63 129.04 119.49 130.08 118.53Z" fill="#6a7594" opacity="0.8"/></g><ellipse cx="75.41" cy="134.84" rx="39.69" ry="16.38" transform="rotate(0 75.41 134.84)" fill="#c8cede" opacity="0.7"/><ellipse cx="75.41" cy="135.24" rx="39.19" ry="15.88" transform="rotate(0 75.41 135.24)" fill="#000"/><g><g filter="url(#t2)" fill="#35a8e2"><path d="M110.76 40.87C111.78 38.71 113.04 32.98 113.87 29.3C114.7 25.62 115.22 21.93 115.74 18.8C116.26 15.67 117.03 12.19 116.99 10.5C116.94 8.81 116.05 8.74 115.46 8.65C114.87 8.56 114 8.39 113.46 9.97C112.92 11.56 112.81 15.12 112.23 18.18C111.65 21.23 111.01 24.76 109.98 28.3C108.96 31.85 106.45 37.1 106.08 39.42C105.71 41.75 106.99 42.01 107.77 42.26C108.55 42.5 109.74 43.03 110.76 40.87Z" /><path d="M98.22 39.03C97.58 37.04 94.38 33.07 93.18 30.18C91.98 27.28 90.91 24.48 91.01 21.66C91.12 18.85 93.55 15.01 93.82 13.27C94.08 11.52 93.18 11.37 92.62 11.19C92.05 11.01 91.29 10.44 90.43 12.16C89.57 13.88 87.62 18.27 87.45 21.5C87.29 24.74 88.35 28.26 89.41 31.56C90.48 34.85 92.59 39.5 93.86 41.26C95.13 43.02 96.32 42.48 97.04 42.11C97.77 41.74 98.87 41.02 98.22 39.03Z" /><ellipse cx="114.4" cy="6.11" rx="4.6" ry="5.2" transform="rotate(15 114.4 6.11)" /><ellipse cx="92.95" cy="9.41" rx="4.6" ry="4.6" transform="rotate(0 92.95 9.41)" /></g><path d="M111.51 6.53C111.86 5.91 112.54 3.43 113.57 2.81C114.61 2.19 116.94 2.06 117.7 2.81C118.46 3.57 118.04 6.59 118.11 7.35" fill="none" stroke="#2b90cc" stroke-width="1.2"/><path d="M89.85 10.65C89.85 9.96 89.34 7.35 89.85 6.53C90.37 5.7 91.81 5.56 92.95 5.7C94.08 5.84 96.11 6.46 96.66 7.35C97.21 8.24 96.32 10.45 96.25 11.06" fill="none" stroke="#2b90cc" stroke-width="1.2"/><g filter="url(#t4)" fill="#35a8e2"><path d="M93.25 59.78C91.34 61.15 89.83 65.38 88.39 67.63C86.94 69.89 85.14 71.71 84.58 73.3C84.03 74.89 84.31 76.53 85.04 77.17C85.76 77.81 87.4 77.91 88.93 77.13C90.46 76.35 92.21 74.35 94.21 72.48C96.2 70.61 99.96 68.08 100.9 65.9C101.84 63.72 101.1 60.41 99.83 59.39C98.55 58.37 95.15 58.4 93.25 59.78Z" /><path d="M98.32 67.56C98.99 70.41 102.68 75.85 104.75 79.51C106.82 83.17 109.32 87.73 110.75 89.52C112.18 91.31 112.75 90.53 113.35 90.24C113.95 89.94 114.89 89.91 114.34 87.73C113.78 85.54 111.39 81.01 110.02 77.11C108.66 73.21 107.68 66.75 106.14 64.3C104.59 61.86 102.07 61.87 100.76 62.42C99.46 62.96 97.66 64.71 98.32 67.56Z" /><ellipse cx="83.67" cy="75.83" rx="8.25" ry="5.36" transform="rotate(35 83.67 75.83)" /><ellipse cx="115.64" cy="95.22" rx="3.51" ry="8.66" transform="rotate(-22 115.64 95.22)" /><path d="M94.6 38.09C92.02 39.98 93.5 45.82 92.95 49.43C92.4 53.04 91.02 56.82 91.3 59.74C91.57 62.67 92.78 65.52 94.6 66.96C96.42 68.41 100.1 68.92 102.23 68.41C104.36 67.89 106.46 66.34 107.39 63.87C108.31 61.39 108.14 56.82 107.8 53.56C107.45 50.29 105.22 46.85 105.32 44.27C105.43 41.7 110.21 39.12 108.42 38.09C106.63 37.05 97.18 36.19 94.6 38.09Z" /></g><g filter="url(#t4)" fill="#35a8e2"><path d="M92.53 26.74C92.19 23.99 92.02 20.69 92.95 18.49C93.88 16.29 96.04 14.5 98.1 13.54C100.17 12.58 103.09 12.3 105.32 12.71C107.56 13.13 109.96 14.19 111.51 16.01C113.06 17.84 114.19 21 114.61 23.65C115.02 26.29 114.85 29.66 113.99 31.9C113.13 34.13 111.58 36.02 109.45 37.05C107.32 38.09 103.6 38.43 101.2 38.09C98.79 37.74 96.45 36.88 95.01 34.99C93.57 33.1 92.88 29.49 92.53 26.74Z" /></g><path d="M89.23 25.09C89.23 25.09 95.04 24.84 97.07 24.68C99.11 24.51 104.5 23.85 104.5 23.85C104.5 23.85 104.77 27.54 104.5 28.8C104.22 30.07 103.37 32.74 102.44 33.34C101.5 33.95 98.53 33.45 97.49 33.34C96.44 33.23 95.42 32.85 94.6 32.52C93.77 32.19 92.01 31.86 91.3 30.87C90.58 29.88 89.23 25.09 89.23 25.09Z" fill="url(#orG)" stroke="#a8640f" stroke-width="0.4"/><path d="M95.42 26.74C96.25 26 102.27 25.3 103.26 25.71C104.25 26.12 103.18 29.01 102.85 29.83C102.52 30.66 101.56 31.7 100.79 31.9C100.02 32.09 97.79 31.97 97.07 31.28C96.36 30.59 94.6 27.48 95.42 26.74Z" fill="#0b0c1a"/><path d="M90.47 26.74C90.69 26.3 93.28 26.19 93.77 26.74C94.27 27.29 94.4 30.43 94.18 30.87C93.96 31.31 92.62 30.59 92.12 30.04C91.63 29.49 90.25 27.18 90.47 26.74Z" fill="#0b0c1a"/></g></g></svg><svg style="left:468.6px;top:623.2px;overflow:hidden;box-shadow:2px 2px 3px rgba(0,0,0,0.45);" width="154.4" height="153.8" viewBox="0 0 154.4 153.8"><defs><linearGradient id="tb2" x1="0" y1="0" x2="0" y2="154" gradientUnits="userSpaceOnUse"><stop offset="0" stop-color="#dcdcdc"/><stop offset="0.3" stop-color="#dfdfdf"/><stop offset="0.63" stop-color="#dfdfdf"/><stop offset="0.64" stop-color="#ddddde"/><stop offset="0.66" stop-color="#d6d8da"/><stop offset="0.67" stop-color="#ccd0d5"/><stop offset="0.69" stop-color="#c1c7d0"/><stop offset="0.7" stop-color="#b4bdc9"/><stop offset="0.72" stop-color="#a7b3c2"/><stop offset="0.73" stop-color="#9caabd"/><stop offset="0.75" stop-color="#92a2b8"/><stop offset="0.76" stop-color="#8b9db4"/><stop offset="0.78" stop-color="#899bb3"/><stop offset="1" stop-color="#8b9db5"/></linearGradient><clipPath id="tc2"><rect x="0" y="0" width="154.4" height="153.8"/></clipPath></defs><rect x="0" y="0" width="154.4" height="153.8" fill="url(#tb2)"/><g clip-path="url(#tc2)"><g filter="url(#blur05)"><path d="M5.68 127.81C5.68 127.81 50.03 117.09 50.03 117.09C50.03 117.09 75.81 122.04 75.81 122.04C75.81 122.04 37.65 124.72 37.65 124.72C37.65 124.72 5.68 127.81 5.68 127.81Z" fill="#5e6a8c" opacity="0.9"/><path d="M78.91 119.15C80.28 118.36 87.85 116.74 93.35 116.47C98.85 116.19 110.19 116.81 111.91 117.5C113.63 118.19 108.13 119.97 103.66 120.59C99.19 121.21 89.22 121.45 85.1 121.21C80.97 120.97 77.53 119.94 78.91 119.15Z" fill="#56627f" opacity="0.8"/><path d="M111.91 109.66C113.63 108.8 121.54 108.36 128.41 108.22C135.29 108.08 149.04 107.8 153.17 108.84C157.29 109.87 156.6 113.48 153.17 114.41C149.73 115.33 138.38 114.58 132.54 114.41C126.69 114.23 121.54 114.16 118.1 113.37C114.66 112.58 110.19 110.52 111.91 109.66Z" fill="#5c6787" opacity="0.7"/></g><path d="M6.71 97.9C6.71 97.9 44.87 82.43 44.87 82.43C44.87 82.43 55.81 81.2 55.81 81.2C55.81 81.2 57.46 91.1 57.46 91.1C57.46 91.1 6.71 97.9 6.71 97.9Z" fill="#cbb9c6"/><path d="M6.71 97.9C6.71 97.9 41.78 73.77 41.78 73.77C41.78 73.77 65.5 75.42 65.5 75.42C65.5 75.42 45.9 82.64 45.9 82.64C45.9 82.64 6.71 97.9 6.71 97.9Z" fill="#ebe4ea"/><path d="M41.78 73.77C41.78 73.77 46.94 79.34 46.94 79.34C46.94 79.34 45.9 82.64 45.9 82.64" fill="none" stroke="#c9bcc6" stroke-width="0.5"/><g filter="url(#t2)" fill="#35a8e2"><path d="M127.8 57.11C129.3 55.3 130.73 49.15 132.97 46.99C135.2 44.83 138.7 44.77 141.23 44.17C143.76 43.56 146.76 43.82 148.16 43.37C149.56 42.92 149.66 42.05 149.61 41.46C149.56 40.86 149.4 40.02 147.86 39.82C146.31 39.62 143.32 39.62 140.35 40.25C137.38 40.89 132.97 41.31 130.05 43.62C127.13 45.93 123.85 51.76 122.84 54.13C121.82 56.5 123.15 57.36 123.98 57.85C124.81 58.35 126.3 58.92 127.8 57.11Z" /><path d="M146.57 39.12C147.77 37.74 150.62 37.91 152.13 38.09C153.65 38.26 155.06 38.77 155.64 40.15C156.23 41.52 156.4 45.75 155.64 46.34C154.88 46.92 152.03 43.07 151.1 43.65C150.17 44.24 150.83 48.61 150.07 49.84C149.32 51.08 147.42 51.66 146.57 51.08C145.71 50.5 144.91 48.33 144.91 46.34C144.91 44.34 145.36 40.49 146.57 39.12Z" /></g><g filter="url(#t4)" fill="#35a8e2"><path d="M118.6 73.98C115.95 76.07 112.13 82.24 109.28 86.56C106.43 90.88 103.28 95.88 101.47 99.9C99.66 103.92 98.68 108.45 98.43 110.67C98.19 112.89 99.28 113.02 99.99 113.23C100.7 113.45 101.72 113.81 102.7 111.95C103.68 110.1 103.88 105.64 105.85 102.09C107.83 98.55 111.21 94.27 114.54 90.68C117.88 87.09 124.08 83.35 125.85 80.57C127.63 77.8 126.4 75.11 125.19 74.01C123.98 72.91 121.25 71.89 118.6 73.98Z" /><path d="M129.54 80.07C131.04 83.21 136.81 88.29 140.06 92.51C143.3 96.73 146.98 103.13 149.02 105.38C151.05 107.62 151.56 106.4 152.26 105.97C152.95 105.54 154.29 105.66 153.19 102.81C152.09 99.96 148.25 93.58 145.65 88.86C143.05 84.14 140.03 77.02 137.6 74.49C135.17 71.95 132.4 72.72 131.06 73.65C129.72 74.58 128.04 76.92 129.54 80.07Z" /><path d="M83.03 113.37C83.55 112.07 86.47 110.01 89.22 109.25C91.97 108.49 96.61 108.49 99.54 108.84C102.46 109.18 105.72 110.21 106.75 111.31C107.79 112.41 107.61 114.58 105.72 115.44C103.83 116.3 98.68 116.19 95.41 116.47C92.14 116.74 88.19 117.6 86.13 117.09C84.07 116.57 82.52 114.68 83.03 113.37Z" /><path d="M148.63 103.06C149.66 101.69 153.54 99.97 154.82 102.03C156.09 104.09 156.88 113.2 156.26 115.44C155.64 117.67 152.37 116.3 151.1 115.44C149.83 114.58 149.04 112.34 148.63 110.28C148.22 108.22 147.6 104.44 148.63 103.06Z" /><path d="M114.39 61.39C114.39 59.5 116.28 58.64 118.1 57.68C119.92 56.72 122.91 55.27 125.32 55.62C127.73 55.96 130.58 57.68 132.54 59.74C134.5 61.81 136.11 65.07 137.08 67.99C138.04 70.92 139.07 75.15 138.31 77.28C137.56 79.41 134.88 80.27 132.54 80.78C130.2 81.3 126.52 80.96 124.29 80.37C122.05 79.79 120.16 79.17 119.13 77.28C118.1 75.39 118.89 71.67 118.1 69.03C117.31 66.38 114.39 63.28 114.39 61.39Z" /></g><g filter="url(#t6)" fill="#35a8e2"><ellipse cx="107.79" cy="48.61" rx="13" ry="13.41" transform="rotate(0 107.79 48.61)" /><path d="M113.97 37.05C114.49 35.34 118.51 36.44 120.16 37.05C121.81 37.67 123.88 40.77 123.88 40.77C123.88 40.77 120.71 41.73 120.16 43.24C119.61 44.75 121.09 49.16 120.57 49.84C120.06 50.53 118.17 49.5 117.07 47.37C115.97 45.24 113.46 38.77 113.97 37.05Z" /></g><path d="M90.25 50.67C90.25 50.67 96.79 49.71 99.54 49.43C102.29 49.16 110.88 48.61 110.88 48.61C110.88 48.61 110.67 53.24 110.26 54.59C109.85 55.93 108.89 58.08 107.79 58.71C106.69 59.35 103.11 59.58 102.01 59.33C100.91 59.08 100.36 56.75 99.54 56.86C98.71 56.97 96.76 60.05 95.82 60.16C94.89 60.27 93.26 58.95 92.52 57.68C91.78 56.42 90.25 50.67 90.25 50.67Z" fill="url(#orG)" stroke="#a8640f" stroke-width="0.4"/><path d="M99.95 51.08C100.94 50.09 108.39 49.51 109.44 50.26C110.48 51 108.78 55.66 107.79 56.65C106.8 57.64 103.06 58.42 102.01 57.68C100.97 56.94 98.96 52.07 99.95 51.08Z" fill="#0b0c1a"/><path d="M91.7 51.91C92.25 51.08 97.12 50.94 97.89 51.49C98.66 52.04 98.02 55.21 97.47 56.03C96.92 56.86 94.53 58.23 93.76 57.68C92.99 57.13 91.15 52.73 91.7 51.91Z" fill="#0b0c1a"/><g filter="url(#t2)" fill="#35a8e2"><path d="M115.14 62.74C113.04 64.11 109.52 68.75 106.41 71.4C103.29 74.06 99.78 76.56 96.44 78.65C93.1 80.74 88.15 82.67 86.36 83.93C84.58 85.2 85.46 85.71 85.72 86.25C85.99 86.78 85.83 87.81 87.96 87.12C90.09 86.43 94.97 84.13 98.5 82.09C102.04 80.05 105.75 77.4 109.17 74.9C112.58 72.4 117.35 69.02 118.99 67.07C120.63 65.11 119.66 63.89 119.02 63.17C118.38 62.45 117.25 61.36 115.14 62.74Z" /><path d="M88.19 82.43C86.75 81.51 83.55 80.99 80.97 82.02C78.39 83.05 74.23 87.11 72.72 88.62C71.21 90.13 71.04 90.93 71.9 91.1C72.75 91.27 76.71 89.21 77.88 89.65C79.05 90.1 78.05 92.92 78.91 93.78C79.77 94.64 81.66 95.15 83.03 94.81C84.41 94.47 86.06 92.92 87.16 91.72C88.26 90.51 89.46 89.14 89.63 87.59C89.81 86.04 89.63 83.36 88.19 82.43Z" /></g></g></svg><svg style="left:658.2px;top:623.2px;overflow:hidden;box-shadow:2px 2px 3px rgba(0,0,0,0.45);" width="154.4" height="153.8" viewBox="0 0 154.4 153.8"><defs><linearGradient id="tb3" x1="0" y1="0" x2="0" y2="154" gradientUnits="userSpaceOnUse"><stop offset="0" stop-color="#dcdcdc"/><stop offset="0.3" stop-color="#dfdfdf"/><stop offset="0.63" stop-color="#dfdfdf"/><stop offset="0.65" stop-color="#ddddde"/><stop offset="0.66" stop-color="#d7d9db"/><stop offset="0.68" stop-color="#ced2d7"/><stop offset="0.7" stop-color="#c3cad1"/><stop offset="0.72" stop-color="#b8c0cc"/><stop offset="0.74" stop-color="#acb7c6"/><stop offset="0.75" stop-color="#a1afc0"/><stop offset="0.77" stop-color="#98a8bc"/><stop offset="0.79" stop-color="#92a4b9"/><stop offset="0.81" stop-color="#90a2b8"/><stop offset="1" stop-color="#899bb3"/></linearGradient><clipPath id="tc3"><rect x="0" y="0" width="154.4" height="153.8"/></clipPath></defs><rect x="0" y="0" width="154.4" height="153.8" fill="url(#tb3)"/><g clip-path="url(#tc3)"><g filter="url(#blur14)"><ellipse cx="140" cy="122" rx="40" ry="12" fill="#c4c9d6" opacity="0.8"/></g><g filter="url(#blur1)"><path d="M57.68 129.88C60.78 127.81 74.87 125.75 82.43 123.69C90 121.63 96.87 119.22 103.06 117.5C109.25 115.78 113.37 114.58 119.56 113.37C125.75 112.17 134.41 111.14 140.19 110.28C145.97 109.42 151.88 106.67 154.22 108.22C156.55 109.76 156.9 116.81 154.22 119.56C151.53 122.31 143.9 123.34 138.13 124.72C132.35 126.09 125.41 127.3 119.56 127.81C113.72 128.33 107.87 126.95 103.06 127.81C98.25 128.67 94.81 131.59 90.68 132.97C86.56 134.35 82.78 135.55 78.31 136.06C73.84 136.58 67.31 137.1 63.87 136.06C60.43 135.03 54.59 131.94 57.68 129.88Z" fill="#66718f" opacity="0.75"/></g><g filter="url(#t2)" fill="#35a8e2"><path d="M58.13 58.93C56.25 60.13 52.47 64.11 50.13 66.53C47.78 68.95 46.23 73.11 44.04 73.45C41.85 73.78 38.53 69.25 36.97 68.55C35.4 67.84 34.98 68.7 34.66 69.21C34.35 69.71 33.44 70.27 35.08 71.57C36.72 72.86 41.55 77.33 44.51 76.98C47.47 76.63 50.05 71.85 52.86 69.46C55.67 67.07 59.93 64.31 61.36 62.62C62.78 60.93 61.94 59.94 61.4 59.32C60.87 58.71 60.01 57.73 58.13 58.93Z" /><path d="M37.05 66.96C35.85 65.83 32.58 64.73 30.87 64.9C29.15 65.07 27.15 66.72 26.74 67.99C26.33 69.27 27.19 71.57 28.39 72.53C29.59 73.5 32.34 73.91 33.96 73.77C35.58 73.63 37.57 72.84 38.09 71.71C38.6 70.57 38.26 68.1 37.05 66.96Z" /><path d="M30.86 65.08C30.02 63.77 26.67 60.05 25.53 59.03C24.4 58.01 24.32 58.74 24.04 58.97C23.75 59.21 23.03 59.15 23.82 60.46C24.62 61.76 27.68 65.72 28.81 66.79C29.94 67.85 30.26 67.14 30.6 66.86C30.95 66.57 31.71 66.38 30.86 65.08Z" /><path d="M34.25 64.68C34.23 63.42 33.42 59.69 33 58.53C32.58 57.37 32.1 57.66 31.73 57.72C31.37 57.78 30.82 57.66 30.8 58.9C30.78 60.13 31.22 63.92 31.61 65.12C32 66.32 32.69 66.16 33.13 66.09C33.57 66.01 34.27 65.94 34.25 64.68Z" /><path d="M37.26 66.44C37.96 65.22 39.43 61.09 39.74 59.75C40.04 58.41 39.43 58.54 39.08 58.4C38.74 58.26 38.39 57.74 37.67 58.91C36.96 60.08 35.13 64.07 34.78 65.43C34.43 66.78 35.16 66.88 35.57 67.05C35.98 67.21 36.57 67.65 37.26 66.44Z" /><path d="M28.54 67.93C27.34 66.87 23 64.07 21.6 63.37C20.2 62.66 20.35 63.4 20.14 63.71C19.93 64.01 19.18 64.13 20.33 65.2C21.47 66.26 25.6 69.37 27.01 70.12C28.41 70.88 28.5 70.08 28.76 69.71C29.01 69.35 29.73 68.99 28.54 67.93Z" /><path d="M28.63 70.38C27.37 70.36 23.64 71.05 22.47 71.43C21.3 71.81 21.57 72.3 21.62 72.67C21.67 73.03 21.54 73.58 22.76 73.64C23.99 73.7 27.77 73.38 28.98 73.03C30.19 72.68 30.05 71.99 30 71.55C29.94 71.11 29.88 70.4 28.63 70.38Z" /></g><g filter="url(#t4)" fill="#35a8e2"><path d="M67.92 84.88C64.74 86.85 58.55 93.76 55.34 97.58C52.13 101.4 49.13 104.32 48.67 107.79C48.2 111.27 51.21 115.43 52.57 118.43C53.92 121.44 55.59 124.49 56.78 125.82C57.97 127.16 59.06 126.83 59.71 126.46C60.35 126.09 61.16 125.26 60.65 123.61C60.13 121.96 57.8 119.06 56.61 116.56C55.42 114.07 52.93 111.01 53.49 108.64C54.06 106.27 56.56 105.07 60.02 102.35C63.48 99.64 71.85 95.13 74.25 92.36C76.66 89.6 75.51 87.02 74.46 85.77C73.4 84.53 71.11 82.91 67.92 84.88Z" /><path d="M78.08 90.16C80.49 93.15 87.87 97.98 92.65 101.49C97.43 105 102.66 108.42 106.76 111.22C110.86 114.02 115.02 117.23 117.25 118.29C119.49 119.36 119.75 118.23 120.17 117.62C120.6 117.01 121.56 116.37 119.81 114.64C118.06 112.92 113.48 110.32 109.67 107.28C105.87 104.24 101.13 100.44 96.97 96.38C92.81 92.33 87.86 85.09 84.73 82.96C81.59 80.82 79.27 82.37 78.16 83.57C77.05 84.77 75.66 87.17 78.08 90.16Z" /><path d="M40.15 129.88C39.98 128.5 41.7 126.44 44.27 125.34C46.85 124.24 52.42 123.38 55.62 123.28C58.82 123.17 62.08 123.79 63.46 124.72C64.83 125.65 65.18 127.81 63.87 128.84C62.56 129.88 58.71 130.12 55.62 130.91C52.52 131.7 47.88 133.76 45.3 133.59C42.73 133.42 40.32 131.25 40.15 129.88Z" /><path d="M113.79 117.5C113.17 115.37 116.09 112.96 117.91 112.96C119.73 112.96 122.11 115.71 124.72 117.5C127.33 119.29 131.84 121.9 133.59 123.69C135.34 125.48 135.86 127.13 135.24 128.23C134.62 129.33 132.14 130.7 129.88 130.29C127.61 129.88 124.31 127.88 121.63 125.75C118.94 123.62 114.41 119.63 113.79 117.5Z" /><path d="M57.68 55.62C57.96 54.59 60.95 57.34 63.87 57.68C66.79 58.02 72.29 55.96 75.21 57.68C78.14 59.4 79.68 64.38 81.4 67.99C83.12 71.6 84.94 76.07 85.53 79.34C86.11 82.61 86.11 85.53 84.91 87.59C83.71 89.65 80.78 91.13 78.31 91.72C75.83 92.3 72.19 92.3 70.06 91.1C67.93 89.89 66.55 87.32 65.52 84.5C64.49 81.68 64.42 77.62 63.87 74.18C63.32 70.74 63.25 66.96 62.22 63.87C61.19 60.78 57.41 56.65 57.68 55.62Z" /></g><g filter="url(#t6)" fill="#35a8e2"><path d="M46.34 41.18C45.89 37.91 46.41 34.48 47.78 31.9C49.16 29.32 52.08 26.91 54.59 25.71C57.1 24.51 60.26 24.16 62.84 24.68C65.42 25.19 67.99 26.74 70.06 28.8C72.12 30.87 73.77 34.03 75.21 37.05C76.66 40.08 78.72 46.96 78.72 46.96C78.72 46.96 74.94 43.93 73.15 43.65C71.36 43.38 69.54 43.83 67.99 45.3C66.45 46.78 65.59 50.74 63.87 52.52C62.15 54.31 59.92 56.2 57.68 56.03C55.45 55.86 52.35 53.97 50.46 51.49C48.57 49.02 46.78 44.45 46.34 41.18Z" /></g><path d="M43.65 31.28C43.65 31.28 49.29 29.93 51.49 30.04C53.69 30.15 60.16 32.1 60.16 32.1C60.16 32.1 59.94 36.88 59.33 38.09C58.73 39.3 57.08 40.93 55.62 41.18C54.16 41.43 49.77 39.72 48.4 39.94C47.02 40.16 46.05 42.66 45.3 42.83C44.56 42.99 43.05 42.72 42.83 41.18C42.61 39.64 43.65 31.28 43.65 31.28Z" fill="url(#orG)" stroke="#a8640f" stroke-width="0.4"/><path d="M47.37 32.52C48.74 31.88 57.34 32.6 58.71 33.34C60.09 34.08 58.23 37.26 57.68 38.09C57.13 38.91 55.82 39.53 54.59 39.53C53.35 39.53 49.36 39.02 48.4 38.09C47.44 37.15 45.99 33.15 47.37 32.52Z" fill="#0b0c1a"/><g filter="url(#t2)" fill="#35a8e2"><path d="M74.04 60.86C76.1 62.37 81.61 64.71 85.63 66.68C89.65 68.65 94.53 71 98.17 72.7C101.81 74.39 105.57 76.31 107.49 76.84C109.41 77.37 109.44 76.41 109.68 75.87C109.92 75.32 110.6 74.65 108.94 73.59C107.28 72.52 103.28 71.22 99.7 69.48C96.13 67.74 91.37 65.28 87.49 63.12C83.6 60.97 78.76 57.47 76.39 56.56C74.02 55.65 73.67 56.94 73.28 57.66C72.89 58.37 71.98 59.36 74.04 60.86Z" /><path d="M106.15 72.53C107.01 71.5 109.76 70.81 111.31 71.09C112.86 71.36 114.92 72.81 115.44 74.18C115.95 75.56 115.44 78.31 114.41 79.34C113.37 80.37 110.62 80.71 109.25 80.37C107.87 80.03 106.67 78.58 106.15 77.28C105.64 75.97 105.3 73.56 106.15 72.53Z" /><path d="M113.29 74.49C115.02 74.79 120.85 74.99 122.58 74.88C124.31 74.77 123.63 74.21 123.66 73.84C123.68 73.47 124.43 73 122.73 72.66C121.03 72.32 115.22 71.75 113.46 71.82C111.7 71.89 112.2 72.63 112.17 73.07C112.14 73.52 111.55 74.18 113.29 74.49Z" /><path d="M114.02 77.53C115.88 78.28 122.46 80.06 124.4 80.41C126.34 80.76 125.57 79.98 125.68 79.63C125.79 79.27 126.85 79.05 125.04 78.27C123.22 77.5 116.75 75.36 114.79 74.97C112.83 74.57 113.38 75.47 113.25 75.9C113.13 76.33 112.16 76.77 114.02 77.53Z" /><path d="M112.67 79.44C114.11 80.56 119.4 83.65 121.03 84.41C122.67 85.17 122.28 84.31 122.48 84C122.67 83.68 123.61 83.66 122.22 82.52C120.82 81.38 115.73 77.98 114.08 77.17C112.44 76.37 112.59 77.29 112.35 77.67C112.12 78.05 111.22 78.32 112.67 79.44Z" /><path d="M107.5 78.31C107.31 79.88 107.5 85.02 107.72 86.56C107.95 88.1 108.47 87.56 108.84 87.56C109.21 87.56 109.73 88.1 109.95 86.56C110.17 85.02 110.36 79.88 110.17 78.31C109.99 76.73 109.28 77.11 108.84 77.11C108.39 77.11 107.69 76.73 107.5 78.31Z" /><path d="M110.47 73.44C111.9 73.43 116.32 72.61 117.66 72.19C118.99 71.78 118.54 71.31 118.49 70.95C118.44 70.58 118.74 70.01 117.34 69.99C115.94 69.96 111.47 70.41 110.09 70.8C108.72 71.18 109.03 71.85 109.09 72.29C109.15 72.73 109.04 73.46 110.47 73.44Z" /></g></g></svg><svg style="left:847.8px;top:623.2px;overflow:hidden;box-shadow:2px 2px 3px rgba(0,0,0,0.45);" width="154.4" height="153.8" viewBox="0 0 154.4 153.8"><defs><linearGradient id="tb4" x1="0" y1="0" x2="0" y2="154" gradientUnits="userSpaceOnUse"><stop offset="0" stop-color="#dcdcdc"/><stop offset="0.3" stop-color="#dfdfdf"/><stop offset="0.6" stop-color="#dfdfdf"/><stop offset="0.62" stop-color="#ddddde"/><stop offset="0.63" stop-color="#d6d8da"/><stop offset="0.65" stop-color="#ccd0d5"/><stop offset="0.66" stop-color="#c0c6cf"/><stop offset="0.68" stop-color="#b2bcc8"/><stop offset="0.69" stop-color="#a5b2c2"/><stop offset="0.71" stop-color="#99a8bc"/><stop offset="0.72" stop-color="#8fa0b7"/><stop offset="0.74" stop-color="#889bb3"/><stop offset="0.75" stop-color="#8699b2"/><stop offset="1" stop-color="#7e91ac"/></linearGradient><clipPath id="tc4"><rect x="0" y="0" width="154.4" height="153.8"/></clipPath></defs><rect x="0" y="0" width="154.4" height="153.8" fill="url(#tb4)"/><g clip-path="url(#tc4)"><g filter="url(#blur1)"><path d="M78.71 140.19C81.46 138.3 95.21 139.5 103.46 138.13C111.71 136.75 122.03 131.59 128.21 131.94C134.4 132.28 138.87 137.1 140.59 140.19C142.31 143.28 143.34 148.44 138.53 150.5C133.71 152.57 120.31 152.74 111.71 152.57C103.12 152.39 92.46 151.53 86.96 149.47C81.46 147.41 75.96 142.08 78.71 140.19Z" fill="#4d5878" opacity="0.85"/><path d="M117.9 127.81C119.96 126.78 130.34 125.34 136.46 124.72C142.58 124.1 151.59 123.52 154.62 124.1C157.64 124.68 157.3 127.33 154.62 128.23C151.93 129.12 143.61 129.02 138.53 129.46C133.44 129.91 127.53 131.18 124.09 130.91C120.65 130.63 115.84 128.84 117.9 127.81Z" fill="#59648a" opacity="0.8"/><path d="M8.58 110.28C10.64 110.28 25.42 116.3 33.33 119.56C41.24 122.83 53.96 128.16 56.02 129.88C58.08 131.59 51.55 131.59 45.7 129.88C39.86 128.16 27.14 122.83 20.95 119.56C14.76 116.3 6.51 110.28 8.58 110.28Z" fill="#66708f" opacity="0.6"/></g><g filter="url(#pk)" fill="#b3979d"><path d="M-1.75 103.86C1.45 105.83 9.22 107.94 15.58 110.29C21.94 112.64 29.78 115.61 36.41 117.96C43.05 120.31 51.58 123.69 55.4 124.39C59.21 125.09 58.94 123.2 59.29 122.14C59.64 121.09 60.93 119.71 57.47 118.04C54 116.36 45.06 114.41 38.5 112.08C31.93 109.76 24.22 106.75 18.07 104.08C11.92 101.42 5.18 97.01 1.57 96.07C-2.04 95.14 -3.04 97.17 -3.59 98.47C-4.14 99.77 -4.94 101.89 -1.75 103.86Z" /><ellipse cx="14.76" cy="106.77" rx="4.2" ry="5.6" transform="rotate(20 14.76 106.77)" /><ellipse cx="6.51" cy="103.06" rx="4.2" ry="6.2" transform="rotate(20 6.51 103.06)" /><path d="M-1.74 92.75C-1.05 90.68 1.36 93.09 2.39 94.81C3.42 96.53 4.79 100.83 4.45 103.06C4.11 105.3 1.36 107.53 0.33 108.22C-0.71 108.91 -1.39 109.76 -1.74 107.19C-2.08 104.61 -2.42 94.81 -1.74 92.75Z" /></g><g filter="url(#pk)" fill="#b3979d"><path d="M56.43 117.5C56.43 117.5 66.33 110.28 66.33 110.28C66.33 110.28 84.9 107.19 84.9 107.19C84.9 107.19 99.34 116.47 99.34 116.47C99.34 116.47 101.81 127.81 101.81 127.81C101.81 127.81 95.21 140.19 95.21 140.19C95.21 140.19 82.83 148.03 82.83 148.03C82.83 148.03 68.39 138.13 68.39 138.13C68.39 138.13 58.08 127.81 58.08 127.81C58.08 127.81 56.43 117.5 56.43 117.5Z" /><ellipse cx="110.06" cy="131.94" rx="4.8" ry="4.6" transform="rotate(0 110.06 131.94)" /><ellipse cx="104.49" cy="130.29" rx="3.2" ry="3.6" transform="rotate(0 104.49 130.29)" /></g><path d="M66.33 110.28C66.33 110.28 70.87 119.56 70.87 119.56C70.87 119.56 68.39 138.13 68.39 138.13" fill="none" stroke="#a88088" stroke-width="0.9"/><path d="M84.9 107.19C84.9 107.19 86.96 119.15 86.96 119.15C86.96 119.15 95.21 140.19 95.21 140.19" fill="none" stroke="#a88088" stroke-width="0.9"/><path d="M70.87 119.56C70.87 119.56 86.96 119.15 86.96 119.15C86.96 119.15 99.34 116.47 99.34 116.47" fill="none" stroke="#a88088" stroke-width="0.9"/><path d="M70.87 119.56C70.87 119.56 86.96 119.15 86.96 119.15C86.96 119.15 93.15 136.06 93.15 136.06C93.15 136.06 82.83 144.31 82.83 144.31C82.83 144.31 69.43 136.06 69.43 136.06C69.43 136.06 70.87 119.56 70.87 119.56Z" fill="#c6bfca" opacity="0.85"/><g filter="url(#t4)" fill="#35a8e2"><path d="M103.46 38.09C104.66 36.02 108.96 34.65 111.71 34.99C114.46 35.34 117.73 37.74 119.96 40.15C122.2 42.55 124.16 45.82 125.12 49.43C126.08 53.04 126.08 56.99 125.74 61.81C125.39 66.62 123.85 73.15 123.06 78.31C122.27 83.47 121.51 87.93 120.99 92.75C120.48 97.56 120.99 104.78 119.96 107.19C118.93 109.59 115.77 109.59 114.81 107.19C113.84 104.78 114.36 97.56 114.19 92.75C114.01 87.93 114.19 82.78 113.77 78.31C113.36 73.84 112.57 69.71 111.71 65.93C110.85 62.15 109.82 58.71 108.62 55.62C107.41 52.52 105.35 50.29 104.49 47.37C103.63 44.45 102.26 40.15 103.46 38.09Z" /><path d="M115.84 106.15C117.11 105.12 119.89 105.3 120.99 107.19C122.09 109.08 122.61 114.41 122.44 117.5C122.27 120.59 121.23 124.03 119.96 125.75C118.69 127.47 116.11 128.5 114.81 127.81C113.5 127.13 112.36 124.03 112.12 121.63C111.88 119.22 112.74 115.95 113.36 113.37C113.98 110.8 114.56 107.19 115.84 106.15Z" /></g><g filter="url(#t2)" fill="#35a8e2"><path d="M96.68 40.48C97.67 41.7 100.27 42.81 102.14 43.92C104.02 45.02 106.32 46.85 107.92 47.1C109.53 47.36 111.34 46.4 111.78 45.46C112.22 44.51 111.72 42.48 110.55 41.44C109.38 40.41 106.55 40.22 104.78 39.27C103.01 38.31 101.37 36.13 99.93 35.69C98.49 35.25 96.69 35.82 96.15 36.62C95.61 37.42 95.68 39.26 96.68 40.48Z" /></g><g filter="url(#t6)" fill="#35a8e2"><path d="M79.74 30.87C79.81 27.94 80.94 23.37 82.83 20.55C84.72 17.73 88.33 15.33 91.08 13.95C93.83 12.58 97 12.44 99.34 12.3C101.67 12.16 105.11 13.13 105.11 13.13C105.11 13.13 103.05 16.22 103.05 18.49C103.05 20.76 105.04 23.65 105.11 26.74C105.18 29.83 104.77 34.48 103.46 37.05C102.15 39.63 99.68 41.25 97.27 42.21C94.87 43.17 91.5 43.52 89.02 42.83C86.55 42.14 83.97 40.08 82.42 38.09C80.87 36.09 79.67 33.79 79.74 30.87Z" /></g><path d="M77.68 34.17C77.68 34.17 84.07 34.77 86.96 34.99C89.85 35.21 99.34 35.82 99.34 35.82C99.34 35.82 99.67 39.1 99.34 40.15C99.01 41.19 98.51 43.08 96.86 43.65C95.21 44.23 88.83 44.75 86.96 44.48C85.09 44.2 84.07 42.97 82.83 41.59C81.6 40.22 77.68 34.17 77.68 34.17Z" fill="url(#orG)" stroke="#a8640f" stroke-width="0.4"/><path d="M86.96 37.47C88.25 36.64 96.93 36.42 98.3 37.05C99.68 37.69 98.57 41.39 97.27 42.21C95.98 43.04 89.98 43.87 88.61 43.24C87.23 42.61 85.67 38.29 86.96 37.47Z" fill="#0b0c1a"/><g filter="url(#t2)" fill="#35a8e2"><path d="M106.88 46.67C105.2 47.88 102.55 51.82 100.08 54.1C97.62 56.39 94.46 58.63 92.11 60.36C89.76 62.08 87.05 63.37 85.97 64.45C84.89 65.53 85.29 66.33 85.62 66.82C85.95 67.32 86.52 68.01 87.95 67.41C89.37 66.82 91.72 64.97 94.18 63.26C96.64 61.54 100.02 59.32 102.71 57.13C105.41 54.95 109.11 51.85 110.35 50.13C111.59 48.42 110.75 47.42 110.18 46.84C109.6 46.26 108.57 45.46 106.88 46.67Z" /><path d="M107.05 55.52C105.35 55.65 101.85 57.82 99.34 57.96C96.82 58.11 94.03 57.78 91.97 56.4C89.92 55.02 88.14 50.84 87.02 49.68C85.89 48.53 85.59 49.22 85.23 49.48C84.87 49.74 84.01 49.66 84.84 51.24C85.67 52.82 87.78 57.25 90.2 58.96C92.61 60.68 96.35 61.38 99.34 61.53C102.32 61.67 106.43 60.56 108.13 59.84C109.83 59.12 109.71 57.92 109.53 57.19C109.35 56.47 108.75 55.39 107.05 55.52Z" /><path d="M73.55 62.84C74.86 61.29 78.19 59.92 80.77 59.74C83.35 59.57 86.96 60.6 89.02 61.81C91.08 63.01 92.98 64.73 93.15 66.96C93.32 69.2 91.77 73.39 90.05 75.21C88.33 77.04 85.07 77.9 82.83 77.9C80.6 77.9 78.3 76.69 76.65 75.21C75 73.74 73.45 71.09 72.93 69.03C72.42 66.96 72.25 64.38 73.55 62.84Z" /></g><path d="M75.61 65.93C76.82 65.76 80.6 64.73 82.83 64.9C85.07 65.07 87.99 66.62 89.02 66.96" fill="none" stroke="#1f79b8" stroke-width="0.8"/><path d="M75.61 70.06C76.82 69.99 80.53 69.47 82.83 69.64C85.14 69.82 88.33 70.85 89.43 71.09" fill="none" stroke="#1f79b8" stroke-width="0.8"/></g></svg><svg style="left:1037.4px;top:623.2px;overflow:hidden;box-shadow:2px 2px 3px rgba(0,0,0,0.45);" width="154.4" height="153.8" viewBox="0 0 154.4 153.8"><defs><linearGradient id="tb5" x1="0" y1="0" x2="0" y2="154" gradientUnits="userSpaceOnUse"><stop offset="0" stop-color="#dcdcdc"/><stop offset="0.3" stop-color="#dfdfdf"/><stop offset="0.63" stop-color="#dfdfdf"/><stop offset="0.65" stop-color="#dcdddd"/><stop offset="0.67" stop-color="#d4d6d9"/><stop offset="0.69" stop-color="#c9cdd3"/><stop offset="0.71" stop-color="#bbc2cc"/><stop offset="0.72" stop-color="#acb6c4"/><stop offset="0.74" stop-color="#9ea9bb"/><stop offset="0.76" stop-color="#909eb4"/><stop offset="0.78" stop-color="#8595ae"/><stop offset="0.8" stop-color="#7d8eaa"/><stop offset="0.82" stop-color="#7a8ca8"/><stop offset="1" stop-color="#7184a2"/></linearGradient><clipPath id="tc5"><rect x="0" y="0" width="154.4" height="153.8"/></clipPath></defs><rect x="0" y="0" width="154.4" height="153.8" fill="url(#tb5)"/><g clip-path="url(#tc5)"><g filter="url(#blur3)"><ellipse cx="95" cy="160" rx="100" ry="38" fill="none" stroke="#a0abc4" stroke-width="7" opacity="0.6"/></g><g filter="url(#blur6)"><ellipse cx="20" cy="140" rx="50" ry="22" fill="#5e6c92" opacity="0.6"/></g><g filter="url(#blur1)"><path d="M73.98 145.35C74.84 144.21 77.42 143.11 82.23 142.66C87.05 142.22 95.3 143.08 102.86 142.66C110.42 142.25 119.09 140.95 127.61 140.19C136.14 139.43 149.62 136.75 154.02 138.13C158.42 139.5 158.42 146.72 154.02 148.44C149.62 150.16 136.14 148.61 127.61 148.44C119.09 148.27 109.74 147.13 102.86 147.41C95.99 147.68 90.66 149.75 86.36 150.09C82.06 150.43 79.14 150.26 77.08 149.47C75.01 148.68 73.12 146.48 73.98 145.35Z" fill="#4f5a7e" opacity="0.85"/></g><g filter="url(#t2)" fill="#35a8e2"><path d="M77.83 49.33C76.32 47.76 71.5 44.92 68.95 42.92C66.4 40.91 64.02 39.71 62.53 37.28C61.04 34.86 60.75 30.01 60.01 28.37C59.28 26.73 58.62 27.31 58.12 27.45C57.62 27.6 56.73 27.33 57.01 29.24C57.3 31.14 58.25 36.16 59.86 38.89C61.46 41.62 64.1 43.31 66.64 45.63C69.18 47.95 73.18 51.72 75.08 52.83C76.98 53.95 77.58 52.9 78.03 52.32C78.49 51.74 79.35 50.9 77.83 49.33Z" /><path d="M54.39 26.74C53.7 25.19 53.18 22.27 53.36 20.55C53.53 18.83 54.39 17.29 55.42 16.43C56.45 15.57 58.34 15.05 59.54 15.4C60.75 15.74 61.88 17.11 62.64 18.49C63.39 19.86 64.18 21.93 64.08 23.65C63.98 25.37 63.12 27.77 62.02 28.8C60.92 29.83 58.75 30.18 57.48 29.83C56.21 29.49 55.07 28.29 54.39 26.74Z" /><path d="M62.64 20.97C63.18 20.01 64.28 16.78 64.5 15.73C64.72 14.67 64.24 14.76 63.97 14.65C63.69 14.54 63.41 14.15 62.84 15.06C62.28 15.98 60.84 19.07 60.57 20.14C60.3 21.21 60.89 21.35 61.23 21.48C61.58 21.62 62.1 21.93 62.64 20.97Z" /></g><g filter="url(#t4)" fill="#35a8e2"><path d="M69.29 75.18C66.23 75.8 60.33 79.41 56.26 81.63C52.18 83.85 46.41 85.53 44.84 88.51C43.28 91.48 46.06 96.26 46.89 99.48C47.72 102.7 48.91 106.28 49.81 107.85C50.72 109.42 51.67 109.11 52.3 108.89C52.93 108.67 53.86 108.27 53.6 106.52C53.34 104.77 51.57 101.01 50.75 98.39C49.93 95.77 47.34 92.64 48.67 90.8C49.99 88.96 54.74 88.58 58.71 87.36C62.68 86.15 69.83 85.08 72.49 83.5C75.14 81.92 75.16 79.29 74.63 77.9C74.1 76.51 72.35 74.56 69.29 75.18Z" /><path d="M74.4 82.84C75.7 85.73 80.66 90.14 83.7 94.38C86.75 98.63 90.12 104.28 92.69 108.31C95.25 112.33 97.57 116.74 99.08 118.53C100.59 120.32 101.15 119.39 101.73 119.05C102.3 118.7 103.38 118.63 102.52 116.47C101.65 114.3 98.78 110.29 96.53 106.06C94.28 101.84 91.47 95.81 89.02 91.11C86.56 86.42 84 80.25 81.82 77.9C79.63 75.55 77.12 76.21 75.88 77.03C74.65 77.86 73.1 79.95 74.4 82.84Z" /><path d="M31.7 102.03C31.35 100.21 33.93 98.25 35.82 97.9C37.71 97.56 40.46 98.76 43.04 99.97C45.62 101.17 49.16 103.58 51.29 105.12C53.42 106.67 55.32 107.87 55.83 109.25C56.35 110.62 55.83 112.76 54.39 113.37C52.94 113.99 49.92 113.72 47.17 112.96C44.42 112.21 40.46 110.66 37.89 108.84C35.31 107.01 32.04 103.85 31.7 102.03Z" /><path d="M98.74 116.47C100.45 114.92 102.79 116.47 103.89 117.5C104.99 118.53 105.85 120.25 105.34 122.66C104.82 125.06 102.41 129.43 100.8 131.94C99.18 134.45 97.09 137.2 95.64 137.71C94.2 138.23 92.48 136.85 92.13 135.03C91.79 133.21 92.48 129.88 93.58 126.78C94.68 123.69 97.02 118.02 98.74 116.47Z" /><path d="M78.11 48.4C80.34 47.54 83.09 48.23 84.3 50.46C85.5 52.7 85.26 57.85 85.33 61.81C85.4 65.76 85.4 71.09 84.71 74.18C84.02 77.28 83.16 79.27 81.2 80.37C79.24 81.47 75.36 81.3 72.95 80.78C70.54 80.27 67.9 79.75 66.76 77.28C65.63 74.8 65.46 69.54 66.14 65.93C66.83 62.32 68.89 58.54 70.89 55.62C72.88 52.7 75.87 49.26 78.11 48.4Z" /></g><g filter="url(#t6)" fill="#35a8e2"><path d="M75.63 34.99C75.01 31.73 75.36 28.87 76.46 26.74C77.56 24.61 79.9 22.89 82.23 22.2C84.57 21.52 88.08 21.58 90.48 22.62C92.89 23.65 95.47 25.98 96.67 28.39C97.88 30.8 98.12 34.3 97.7 37.05C97.29 39.8 95.92 43 94.2 44.89C92.48 46.78 89.73 48.16 87.39 48.4C85.05 48.64 82.13 48.57 80.17 46.34C78.21 44.1 76.25 38.26 75.63 34.99Z" /></g><ellipse cx="79.35" cy="27.36" rx="5.16" ry="3.92" transform="rotate(-20 79.35 27.36)" fill="#0b0c1a" stroke="#e89a2a" stroke-width="1.6"/><ellipse cx="90.48" cy="29.22" rx="5.78" ry="4.54" transform="rotate(25 90.48 29.22)" fill="#0b0c1a" stroke="#e89a2a" stroke-width="1.6"/><g filter="url(#t2)" fill="#35a8e2"><path d="M83.74 52C85.7 52.82 90.5 53.32 94.12 54.24C97.75 55.16 101.88 56.42 105.49 57.52C109.1 58.62 113.77 60.44 115.79 60.82C117.81 61.19 117.45 60.25 117.61 59.76C117.76 59.26 118.61 58.72 116.74 57.85C114.88 56.98 110.03 55.72 106.42 54.54C102.81 53.37 98.69 51.95 95.1 50.81C91.51 49.67 86.98 47.93 84.86 47.69C82.73 47.44 82.54 48.62 82.36 49.34C82.17 50.06 81.78 51.18 83.74 52Z" /><path d="M115.24 56.65C116.03 55.27 118.67 54.31 120.39 53.97C122.11 53.62 124.35 53.8 125.55 54.59C126.75 55.38 127.61 57.23 127.61 58.71C127.61 60.19 126.93 62.43 125.55 63.46C124.18 64.49 121.01 65.11 119.36 64.9C117.71 64.69 116.34 63.59 115.65 62.22C114.96 60.84 114.45 58.02 115.24 56.65Z" /></g></g></svg><svg style="left:1227px;top:623.2px;overflow:hidden;box-shadow:2px 2px 3px rgba(0,0,0,0.45);" width="154.4" height="153.8" viewBox="0 0 154.4 153.8"><defs><linearGradient id="tb6" x1="0" y1="0" x2="0" y2="154" gradientUnits="userSpaceOnUse"><stop offset="0" stop-color="#dcdcdc"/><stop offset="0.3" stop-color="#dfdfdf"/><stop offset="0.62" stop-color="#dfdfdf"/><stop offset="0.64" stop-color="#ddddde"/><stop offset="0.66" stop-color="#d6d8db"/><stop offset="0.68" stop-color="#cdd1d6"/><stop offset="0.7" stop-color="#c1c7d0"/><stop offset="0.72" stop-color="#b4beca"/><stop offset="0.74" stop-color="#a8b4c3"/><stop offset="0.76" stop-color="#9caabd"/><stop offset="0.78" stop-color="#93a3b8"/><stop offset="0.8" stop-color="#8c9eb5"/><stop offset="0.82" stop-color="#8a9cb4"/><stop offset="1" stop-color="#8497b0"/></linearGradient><clipPath id="tc6"><rect x="0" y="0" width="154.4" height="153.8"/></clipPath></defs><rect x="0" y="0" width="154.4" height="153.8" fill="url(#tb6)"/><g clip-path="url(#tc6)"><g filter="url(#blur14)"><ellipse cx="125" cy="118" rx="36" ry="10" fill="#c6cbd8" opacity="0.7"/></g><g filter="url(#blur1)"><path d="M67.19 126.78C67.88 125.41 75.79 123.69 81.63 121.63C87.48 119.56 96.07 116.12 102.26 114.41C108.45 112.69 112.92 111.83 118.76 111.31C124.61 110.8 133.89 109.94 137.33 111.31C140.76 112.69 141.11 117.5 139.39 119.56C137.67 121.63 130.45 121.97 127.01 123.69C123.58 125.41 121.51 128.91 118.76 129.88C116.01 130.84 111.54 130.77 110.51 129.46C109.48 128.16 115.32 122.83 112.57 122.04C109.82 121.25 99.85 123.41 94.01 124.72C88.17 126.03 81.98 129.53 77.51 129.88C73.04 130.22 66.51 128.16 67.19 126.78Z" fill="#5d6888" opacity="0.75"/></g><g filter="url(#blur1)"><ellipse cx="49.04" cy="141.22" rx="30.53" ry="8.25" transform="rotate(0 49.04 141.22)" fill="#4a3a5c" opacity="0.85"/></g><g filter="url(#t2)" fill="#35a8e2"><path d="M104.53 36.23C102.88 34.78 97.86 32.42 95.08 30.47C92.3 28.53 90.08 26.57 87.85 24.56C85.62 22.55 83.08 19.42 81.7 18.42C80.33 17.41 79.98 18.16 79.61 18.53C79.24 18.9 78.48 19.24 79.5 20.62C80.52 22.01 83.49 24.74 85.73 26.86C87.97 28.97 90.22 31.14 92.94 33.32C95.66 35.5 100.05 38.96 102.06 39.94C104.06 40.92 104.55 39.82 104.96 39.2C105.37 38.58 106.17 37.69 104.53 36.23Z" /><path d="M77.51 15.4C78.2 14.19 81.29 14.71 82.67 15.4C84.04 16.08 85.59 18.15 85.76 19.52C85.93 20.9 84.9 23.13 83.7 23.65C82.49 24.16 79.57 23.99 78.54 22.62C77.51 21.24 76.82 16.6 77.51 15.4Z" /><path d="M79.99 16.43C78.79 15.78 74.6 14.28 73.31 13.95C72.01 13.63 72.34 14.2 72.23 14.48C72.12 14.75 71.48 14.93 72.63 15.6C73.79 16.27 77.84 18.12 79.15 18.49C80.46 18.86 80.36 18.18 80.5 17.84C80.64 17.49 81.19 17.07 79.99 16.43Z" /></g><g filter="url(#t4)" fill="#35a8e2"><path d="M95.46 63.46C93.29 65.78 90.79 72.38 88.36 76.53C85.92 80.67 83.12 84.97 80.87 88.33C78.62 91.69 75.79 94.87 74.87 96.7C73.96 98.54 74.86 98.95 75.39 99.35C75.93 99.75 76.57 100.5 78.08 99.11C79.59 97.71 81.89 94.14 84.46 90.97C87.02 87.81 90.41 83.85 93.48 80.09C96.55 76.33 101.55 71.32 102.87 68.4C104.19 65.49 102.63 63.42 101.39 62.6C100.16 61.77 97.63 61.14 95.46 63.46Z" /><path d="M104.09 70.78C106.12 72.56 112.26 74.3 115.09 75.56C117.92 76.81 121.01 77.08 121.07 78.31C121.13 79.54 117.22 81.66 115.46 82.92C113.7 84.18 111.42 84.94 110.51 85.87C109.6 86.8 109.65 87.95 110 88.52C110.34 89.09 111.25 89.72 112.57 89.31C113.9 88.9 115.78 87.9 117.94 86.07C120.1 84.24 125.47 80.86 125.53 78.31C125.59 75.75 121.12 73.27 118.31 70.75C115.5 68.22 111.24 64.12 108.68 63.14C106.12 62.17 103.71 63.63 102.95 64.9C102.18 66.17 102.07 69.01 104.09 70.78Z" /><path d="M74.41 96.46C75.96 95.94 78.02 96.46 78.54 97.9C79.06 99.35 78.54 102.72 77.51 105.12C76.48 107.53 74.07 110.97 72.35 112.34C70.63 113.72 68.33 114.06 67.19 113.37C66.06 112.69 65.2 110.28 65.54 108.22C65.89 106.15 67.78 102.96 69.26 101C70.74 99.04 72.87 96.98 74.41 96.46Z" /><path d="M105.35 84.5C106.63 83.05 110.06 83.4 111.54 84.08C113.02 84.77 114.05 86.49 114.22 88.62C114.4 90.75 113.36 94.29 112.57 96.87C111.78 99.45 110.79 103.06 109.48 104.09C108.17 105.12 105.66 104.95 104.74 103.06C103.81 101.17 103.81 95.84 103.91 92.75C104.01 89.65 104.08 85.94 105.35 84.5Z" /><path d="M102.26 37.05C104.15 35.85 108.38 36.99 110.51 38.09C112.64 39.19 114.53 40.73 115.05 43.65C115.57 46.58 114.53 51.91 113.61 55.62C112.68 59.33 111.37 63.87 109.48 65.93C107.59 67.99 104.43 68.17 102.26 67.99C100.09 67.82 97.52 66.96 96.49 64.9C95.45 62.84 95.63 58.88 96.07 55.62C96.52 52.35 98.14 48.4 99.17 45.3C100.2 42.21 100.37 38.26 102.26 37.05Z" /></g><g filter="url(#t6)" fill="#35a8e2"><path d="M99.17 26.74C98.72 23.65 99.58 19.8 100.61 17.46C101.64 15.12 103.53 13.57 105.35 12.71C107.18 11.85 109.65 11.68 111.54 12.3C113.43 12.92 115.6 14.19 116.7 16.43C117.8 18.66 118.32 22.79 118.14 25.71C117.97 28.63 117.11 32 115.67 33.96C114.22 35.92 111.54 37.12 109.48 37.47C107.42 37.81 105.01 37.81 103.29 36.02C101.57 34.24 99.61 29.83 99.17 26.74Z" /></g><path d="M95.66 25.92C95.66 25.92 101.74 26.82 104.32 27.15C106.91 27.48 115.05 28.39 115.05 28.39C115.05 28.39 115.1 31.99 114.64 32.93C114.17 33.86 112.78 35.24 111.54 35.4C110.31 35.57 106.59 34.61 105.35 34.17C104.12 33.73 103.22 32.21 102.26 32.1C101.3 31.99 99.02 34.17 98.14 33.34C97.26 32.52 95.66 25.92 95.66 25.92Z" fill="url(#orG)" stroke="#a8640f" stroke-width="0.4"/><path d="M104.74 28.8C105.73 28.36 112.82 28.94 113.81 29.63C114.8 30.32 113.15 33.52 112.16 33.96C111.17 34.4 107.38 33.62 106.39 32.93C105.4 32.24 103.75 29.24 104.74 28.8Z" fill="#0b0c1a"/><path d="M97.31 27.57C97.86 27.13 102.12 27.9 102.67 28.39C103.22 28.89 101.99 30.84 101.44 31.28C100.89 31.72 99.1 32.19 98.55 31.69C98 31.2 96.76 28.01 97.31 27.57Z" fill="#0b0c1a"/><g filter="url(#t2)" fill="#35a8e2"><path d="M112.63 43.34C113.68 44.22 116.29 45.46 118.33 45.98C120.36 46.5 123.51 46.61 124.85 46.45C126.18 46.28 126.32 45.5 126.35 44.99C126.39 44.47 126.25 43.67 125.05 43.34C123.86 43 120.94 43.56 119.2 42.98C117.45 42.4 115.78 40.22 114.59 39.84C113.39 39.46 112.36 40.13 112.03 40.71C111.7 41.29 111.58 42.46 112.63 43.34Z" /><path d="M123.3 42.21C123.88 40.97 126.22 39.98 128.04 39.53C129.87 39.08 132.96 39.19 134.23 39.53C135.5 39.87 136.19 41.11 135.68 41.59C135.16 42.07 132.24 41.97 131.14 42.42C130.04 42.86 128.8 43.79 129.08 44.27C129.35 44.75 131.59 45.2 132.79 45.3C133.99 45.41 135.88 44.55 136.3 44.89C136.71 45.24 136.47 46.89 135.26 47.37C134.06 47.85 130.86 47.85 129.08 47.78C127.29 47.71 125.5 47.88 124.54 46.96C123.58 46.03 122.72 43.45 123.3 42.21Z" /></g><defs><radialGradient id="ballg" cx="0.4" cy="0.3" r="0.75"><stop offset="0" stop-color="#d4a4aa" stop-opacity="0.5"/><stop offset="0.6" stop-color="#c08088" stop-opacity="0.56"/><stop offset="1" stop-color="#a04c5c" stop-opacity="0.72"/></radialGradient></defs><circle cx="49.87" cy="123.69" r="28.67" fill="url(#ballg)"/><g filter="url(#blur1)"><ellipse cx="49.04" cy="140.19" rx="24.75" ry="6.19" transform="rotate(0 49.04 140.19)" fill="#9c2038" opacity="0.45"/></g></g></svg>
<svg style="left:0px;top:0px;" width="1386" height="795" viewBox="0 0 1386 795"><defs><filter id="bs1" x="-20%" y="-20%" width="140%" height="140%" color-interpolation-filters="sRGB"><feGaussianBlur in="SourceAlpha" stdDeviation="9" result="b"/><feOffset in="b" dx="-6" dy="-3.6" result="o1"/><feComposite in="SourceAlpha" in2="o1" operator="out" result="m1"/><feFlood flood-color="#0a4a8c" flood-opacity="1"/><feComposite in2="m1" operator="in" result="dk"/><feOffset in="b" dx="6" dy="3.6" result="o2"/><feComposite in="SourceAlpha" in2="o2" operator="out" result="m2"/><feFlood flood-color="#5ad8ff" flood-opacity="1"/><feComposite in2="m2" operator="in" result="lt"/><feMerge><feMergeNode in="SourceGraphic"/><feMergeNode in="lt"/><feMergeNode in="dk"/></feMerge></filter><filter id="bsH" x="-20%" y="-20%" width="140%" height="140%" color-interpolation-filters="sRGB"><feGaussianBlur in="SourceAlpha" stdDeviation="14" result="b"/><feOffset in="b" dx="-10" dy="-6" result="o1"/><feComposite in="SourceAlpha" in2="o1" operator="out" result="m1"/><feFlood flood-color="#0c4f94" flood-opacity="1"/><feComposite in2="m1" operator="in" result="dk"/><feOffset in="b" dx="10" dy="6" result="o2"/><feComposite in="SourceAlpha" in2="o2" operator="out" result="m2"/><feFlood flood-color="#3fb4ea" flood-opacity="0.5"/><feComposite in2="m2" operator="in" result="lt"/><feMerge><feMergeNode in="SourceGraphic"/><feMergeNode in="lt"/><feMergeNode in="dk"/></feMerge></filter><filter id="bs2" x="-20%" y="-20%" width="140%" height="140%" color-interpolation-filters="sRGB"><feGaussianBlur in="SourceAlpha" stdDeviation="3.4" result="b"/><feOffset in="b" dx="-2.6" dy="-1.56" result="o1"/><feComposite in="SourceAlpha" in2="o1" operator="out" result="m1"/><feFlood flood-color="#0a4a8c" flood-opacity="1"/><feComposite in2="m1" operator="in" result="dk"/><feOffset in="b" dx="2.6" dy="1.56" result="o2"/><feComposite in="SourceAlpha" in2="o2" operator="out" result="m2"/><feFlood flood-color="#5ad8ff" flood-opacity="1"/><feComposite in2="m2" operator="in" result="lt"/><feMerge><feMergeNode in="SourceGraphic"/><feMergeNode in="lt"/><feMergeNode in="dk"/></feMerge></filter><filter id="bs3" x="-20%" y="-20%" width="140%" height="140%" color-interpolation-filters="sRGB"><feGaussianBlur in="SourceAlpha" stdDeviation="1.6" result="b"/><feOffset in="b" dx="-1" dy="-0.6" result="o1"/><feComposite in="SourceAlpha" in2="o1" operator="out" result="m1"/><feFlood flood-color="#0b4f92" flood-opacity="0.85"/><feComposite in2="m1" operator="in" result="dk"/><feOffset in="b" dx="1" dy="0.6" result="o2"/><feComposite in="SourceAlpha" in2="o2" operator="out" result="m2"/><feFlood flood-color="#5ad8ff" flood-opacity="0.75"/><feComposite in2="m2" operator="in" result="lt"/><feMerge><feMergeNode in="SourceGraphic"/><feMergeNode in="lt"/><feMergeNode in="dk"/></feMerge></filter><filter id="bds" x="-10%" y="-10%" width="120%" height="120%"><feDropShadow dx="1.5" dy="2" stdDeviation="1.6" flood-color="#000" flood-opacity="0.45"/></filter><linearGradient id="bgT" gradientUnits="userSpaceOnUse" x1="128" y1="450" x2="190" y2="480"><stop offset="0" stop-color="#48d0fa"/><stop offset="0.22" stop-color="#38b8ec"/><stop offset="0.5" stop-color="#2a9fdb"/><stop offset="1" stop-color="#1f80c2"/></linearGradient><filter id="bblur"><feGaussianBlur stdDeviation="4"/></filter><radialGradient id="bgH" gradientUnits="userSpaceOnUse" cx="188" cy="338" r="92"><stop offset="0" stop-color="#31a6df"/><stop offset="0.5" stop-color="#2a96d3"/><stop offset="1" stop-color="#1b6fb0"/></radialGradient><linearGradient id="bgO" x1="0" y1="0" x2="1" y2="1"><stop offset="0" stop-color="#f6b450"/><stop offset="0.5" stop-color="#e8962c"/><stop offset="1" stop-color="#c27416"/></linearGradient></defs><g filter="url(#bds)"><g filter="url(#bs2)" fill="#2a9fdb"><path d="M172.12 398.7C168.65 395.5 159.43 391.38 152.85 387.68C146.27 383.98 138.64 379.87 132.62 376.51C126.6 373.15 120.12 369.69 116.7 367.53C113.29 365.37 113.38 365.7 112.13 363.55C110.88 361.4 110.26 357.95 109.19 354.64C108.12 351.33 106.89 347.36 105.7 343.7C104.52 340.04 103.21 336.01 102.09 332.67C100.97 329.33 100.37 325.55 98.98 323.67C97.6 321.8 95.13 320.97 93.8 321.41C92.48 321.86 91 324.01 91.02 326.33C91.03 328.65 92.86 332 93.91 335.33C94.96 338.66 96.21 342.63 97.3 346.3C98.38 349.97 99.31 353.67 100.41 357.36C101.5 361.05 102.06 365.43 103.87 368.45C105.69 371.47 107.38 372.63 111.3 375.47C115.21 378.31 121.4 381.85 127.38 385.49C133.36 389.13 140.77 393.35 147.15 397.32C153.53 401.29 161.26 407.7 165.68 409.3C170.1 410.89 172.59 408.67 173.67 406.9C174.74 405.13 175.59 401.91 172.12 398.7Z"/><path d="M84.5 326C80.8 326.27 79.82 324.7 78 323.6C76.18 322.5 74.6 320.93 73.6 319.4C72.6 317.87 72.73 316.13 72 314.4C71.27 312.67 70.1 311.07 69.2 309C68.3 306.93 67.73 303.4 66.6 302C65.47 300.6 63.97 300.23 62.4 300.6C60.83 300.97 58.77 302.93 57.2 304.2C55.63 305.47 54.27 307.97 53 308.2C51.73 308.43 49.97 307.03 49.6 305.6C49.23 304.17 49.67 301.37 50.8 299.6C51.93 297.83 54.4 295.97 56.4 295C58.4 294.03 61.1 293.9 62.8 293.8C64.5 293.7 65.77 294.97 66.6 294.4C67.43 293.83 66.73 291.17 67.8 290.4C68.87 289.63 70.63 289.27 73 289.8C75.37 290.33 79.17 292.2 82 293.6C84.83 295 87.57 296.3 90 298.2C92.43 300.1 94.67 302.6 96.6 305C98.53 307.4 100.6 310.53 101.6 312.6C102.6 314.67 102.83 315.83 102.6 317.4C102.37 318.97 103.22 320.57 100.2 322C97.18 323.43 88.2 325.73 84.5 326Z"/></g><path d="M68 300C72 298 78 299.5 84 304 88 307 90 311 88 314L84 318.5C80 316 76 316 73.5 313 71.5 309 69 305 68 300Z" fill="#3cbaee" opacity="0.75"/><path d="M67 295C72 297 80 299 88 305.5M73.5 313.5C77 315.5 81 318 84.5 318.5L90.5 311.5" stroke="#176fb0" stroke-width="1.3" fill="none" opacity="0.8"/><g filter="url(#bs2)" fill="#2a9fdb"><path d="M1.2 623.4C0.53 621.32 1.53 618.57 3 616.5C4.47 614.43 6.72 612.35 10 611C13.28 609.65 17.7 608.57 22.7 608.4C27.7 608.23 34.12 608.82 40 610C45.88 611.18 52.5 613.5 58 615.5C63.5 617.5 68.33 621.17 73 622C77.67 622.83 82.58 620.08 86 620.5C89.42 620.92 91.9 622.42 93.5 624.5C95.1 626.58 95.42 630.25 95.6 633C95.78 635.75 95.62 638.9 94.6 641C93.58 643.1 92.27 644.93 89.5 645.6C86.73 646.27 82.92 645.6 78 645C73.08 644.4 66.33 643.17 60 642C53.67 640.83 46.67 639.42 40 638C33.33 636.58 25.5 635 20 633.5C14.5 632 10.13 630.68 7 629C3.87 627.32 1.87 625.48 1.2 623.4Z"/><path d="M27.67 571.4C29.59 575.25 35.94 583.07 40.4 588.18C44.87 593.28 49.82 597.25 54.46 602.04C59.11 606.82 64.04 612.51 68.26 616.89C72.48 621.27 76.44 626.58 79.79 628.32C83.13 630.05 86.93 628.9 88.33 627.29C89.74 625.69 90.31 621.71 88.21 618.68C86.12 615.65 80.19 613.06 75.74 609.11C71.3 605.15 66.23 599.51 61.54 594.96C56.84 590.42 51.97 586.72 47.6 581.82C43.23 576.93 38.44 568.4 35.33 565.6C32.21 562.81 30.17 564.09 28.89 565.06C27.62 566.02 25.76 567.54 27.67 571.4Z"/></g><defs><clipPath id="torsoclip"><path d="M178 388C174.5 389.33 177.33 393.58 176 396C174.67 398.42 173 400 170 402.5C167 405 161.83 407.83 158 411C154.17 414.17 150.25 417.67 147 421.5C143.75 425.33 141.3 429.18 138.5 434C135.7 438.82 132.7 445.07 130.2 450.4C127.7 455.73 125.5 460.4 123.5 466C121.5 471.6 119.72 478.33 118.2 484C116.68 489.67 115.1 495.33 114.4 500C113.7 504.67 113.65 508.42 114 512C114.35 515.58 117.5 518.4 116.5 521.5C115.5 524.6 112.32 528.08 108 530.6C103.68 533.12 96.6 534.6 90.6 536.6C84.6 538.6 77.67 540.7 72 542.6C66.33 544.5 61.6 546.17 56.6 548C51.6 549.83 46.18 551.68 42 553.6C37.82 555.52 34.07 557.52 31.5 559.5C28.93 561.48 27.08 563.55 26.6 565.5C26.12 567.45 26.95 570.05 28.6 571.2C30.25 572.35 32.93 572.93 36.5 572.4C40.07 571.87 44.77 569.37 50 568C55.23 566.63 62.07 565.2 67.9 564.2C73.73 563.2 79.33 562.6 85 562C90.67 561.4 96.07 561 101.9 560.6C107.73 560.2 114.33 559.98 120 559.6C125.67 559.22 131.4 558.97 135.9 558.3C140.4 557.63 143.88 556.4 147 555.6C150.12 554.8 152.67 551.68 154.6 553.5C156.53 555.32 156.5 561.88 158.6 566.5C160.7 571.12 163.8 575.53 167.2 581.2C170.6 586.87 175.13 593.87 179 600.5C182.87 607.13 186.97 614.42 190.4 621C193.83 627.58 196.27 632.93 199.6 640C202.93 647.07 207.13 655.93 210.4 663.4C213.67 670.87 217.17 678.37 219.2 684.8C221.23 691.23 222.2 697.63 222.6 702C223 706.37 222.65 707.37 221.6 711C220.55 714.63 219.13 719.07 216.3 723.8C213.47 728.53 208.67 733.87 204.6 739.4C200.53 744.93 194.83 751.8 191.9 757C188.97 762.2 187.48 766.7 187 770.6C186.52 774.5 187.7 777.8 189 780.4C190.3 783 192.53 785.72 194.8 786.2C197.07 786.68 199.02 785.9 202.6 783.3C206.18 780.7 211.1 776.28 216.3 770.6C221.5 764.92 228.28 755.7 233.8 749.2C239.32 742.7 245.82 736.48 249.4 731.6C252.98 726.72 254.65 723.15 255.3 719.9C255.95 716.65 254.93 714.32 253.3 712.1C251.67 709.88 248.13 707.75 245.5 706.6C242.87 705.45 240.42 709.15 237.5 705.2C234.58 701.25 230.75 690.52 228 682.9C225.25 675.28 223.25 666.65 221 659.5C218.75 652.35 216.88 648.15 214.5 640C212.12 631.85 209.35 618.87 206.7 610.6C204.05 602.33 201.12 597.12 198.6 590.4C196.08 583.68 193.62 577 191.6 570.3C189.58 563.6 187.68 556.9 186.5 550.2C185.32 543.5 185.5 537.13 184.5 530.1C183.5 523.07 181.98 514.68 180.5 508C179.02 501.32 176.45 496.25 175.6 490C174.75 483.75 174.58 477.1 175.4 470.5C176.22 463.9 178.65 456.43 180.5 450.4C182.35 444.37 184.58 439.37 186.5 434.3C188.42 429.23 190.17 424.38 192 420C193.83 415.62 196.42 411.67 197.5 408C198.58 404.33 198.58 401.33 198.5 398C198.42 394.67 200.42 389.67 197 388C193.58 386.33 181.5 386.67 178 388Z"/></clipPath></defs><g filter="url(#bs1)"><path d="M178 388C174.5 389.33 177.33 393.58 176 396C174.67 398.42 173 400 170 402.5C167 405 161.83 407.83 158 411C154.17 414.17 150.25 417.67 147 421.5C143.75 425.33 141.3 429.18 138.5 434C135.7 438.82 132.7 445.07 130.2 450.4C127.7 455.73 125.5 460.4 123.5 466C121.5 471.6 119.72 478.33 118.2 484C116.68 489.67 115.1 495.33 114.4 500C113.7 504.67 113.65 508.42 114 512C114.35 515.58 117.5 518.4 116.5 521.5C115.5 524.6 112.32 528.08 108 530.6C103.68 533.12 96.6 534.6 90.6 536.6C84.6 538.6 77.67 540.7 72 542.6C66.33 544.5 61.6 546.17 56.6 548C51.6 549.83 46.18 551.68 42 553.6C37.82 555.52 34.07 557.52 31.5 559.5C28.93 561.48 27.08 563.55 26.6 565.5C26.12 567.45 26.95 570.05 28.6 571.2C30.25 572.35 32.93 572.93 36.5 572.4C40.07 571.87 44.77 569.37 50 568C55.23 566.63 62.07 565.2 67.9 564.2C73.73 563.2 79.33 562.6 85 562C90.67 561.4 96.07 561 101.9 560.6C107.73 560.2 114.33 559.98 120 559.6C125.67 559.22 131.4 558.97 135.9 558.3C140.4 557.63 143.88 556.4 147 555.6C150.12 554.8 152.67 551.68 154.6 553.5C156.53 555.32 156.5 561.88 158.6 566.5C160.7 571.12 163.8 575.53 167.2 581.2C170.6 586.87 175.13 593.87 179 600.5C182.87 607.13 186.97 614.42 190.4 621C193.83 627.58 196.27 632.93 199.6 640C202.93 647.07 207.13 655.93 210.4 663.4C213.67 670.87 217.17 678.37 219.2 684.8C221.23 691.23 222.2 697.63 222.6 702C223 706.37 222.65 707.37 221.6 711C220.55 714.63 219.13 719.07 216.3 723.8C213.47 728.53 208.67 733.87 204.6 739.4C200.53 744.93 194.83 751.8 191.9 757C188.97 762.2 187.48 766.7 187 770.6C186.52 774.5 187.7 777.8 189 780.4C190.3 783 192.53 785.72 194.8 786.2C197.07 786.68 199.02 785.9 202.6 783.3C206.18 780.7 211.1 776.28 216.3 770.6C221.5 764.92 228.28 755.7 233.8 749.2C239.32 742.7 245.82 736.48 249.4 731.6C252.98 726.72 254.65 723.15 255.3 719.9C255.95 716.65 254.93 714.32 253.3 712.1C251.67 709.88 248.13 707.75 245.5 706.6C242.87 705.45 240.42 709.15 237.5 705.2C234.58 701.25 230.75 690.52 228 682.9C225.25 675.28 223.25 666.65 221 659.5C218.75 652.35 216.88 648.15 214.5 640C212.12 631.85 209.35 618.87 206.7 610.6C204.05 602.33 201.12 597.12 198.6 590.4C196.08 583.68 193.62 577 191.6 570.3C189.58 563.6 187.68 556.9 186.5 550.2C185.32 543.5 185.5 537.13 184.5 530.1C183.5 523.07 181.98 514.68 180.5 508C179.02 501.32 176.45 496.25 175.6 490C174.75 483.75 174.58 477.1 175.4 470.5C176.22 463.9 178.65 456.43 180.5 450.4C182.35 444.37 184.58 439.37 186.5 434.3C188.42 429.23 190.17 424.38 192 420C193.83 415.62 196.42 411.67 197.5 408C198.58 404.33 198.58 401.33 198.5 398C198.42 394.67 200.42 389.67 197 388C193.58 386.33 181.5 386.67 178 388Z" fill="url(#bgT)"/></g><g clip-path="url(#torsoclip)"><path d="M150 424C138 444 126 470 121.5 492 119.5 504 120 514 123 522" stroke="#4fdcff" stroke-width="11" fill="none" opacity="0.6" filter="url(#bblur)"/></g><path d="M120.5 525.6C127 531 131.5 538 135.5 545.5" stroke="#1a70b2" stroke-width="1.6" fill="none" opacity="0.55" stroke-linecap="round"/><defs><linearGradient id="amg" gradientUnits="userSpaceOnUse" x1="176" y1="409" x2="194" y2="420"><stop offset="0" stop-color="#000"/><stop offset="0.25" stop-color="#000"/><stop offset="1" stop-color="#fff"/></linearGradient><mask id="armmask" maskUnits="userSpaceOnUse" x="150" y="380" width="220" height="160"><rect x="150" y="380" width="220" height="160" fill="url(#amg)"/></mask></defs><g mask="url(#armmask)"><g filter="url(#bs2)" fill="#2a9fdb"><path d="M171.97 415.44C174.32 418.29 180.15 420.14 184.29 422.44C188.43 424.73 191.17 426.13 196.84 429.22C202.5 432.3 211.48 437.1 218.28 440.93C225.09 444.77 231.21 448.43 237.65 452.22C244.1 456.01 250.87 459.99 256.95 463.7C263.04 467.41 268.78 471.23 274.17 474.48C279.55 477.73 285.98 482.01 289.24 483.23C292.5 484.44 293.14 482.79 293.72 481.78C294.31 480.77 295.4 479.38 292.76 477.17C290.11 474.96 283.12 471.83 277.83 468.52C272.55 465.21 266.96 461.25 261.05 457.3C255.13 453.34 248.57 448.99 242.35 444.78C236.13 440.57 230.25 436.4 223.72 432.07C217.18 427.73 208.5 422.37 203.16 418.78C197.83 415.2 195.57 413.27 191.71 410.56C187.85 407.86 183.61 403.42 180.03 402.56C176.44 401.69 171.54 403.23 170.2 405.37C168.86 407.52 169.62 412.6 171.97 415.44Z"/><path d="M287.5 476.6C289.08 475.02 291.58 474.27 294 474C296.42 473.73 299.5 474.33 302 475C304.5 475.67 306.73 476.83 309 478C311.27 479.17 314.2 480.17 315.6 482C317 483.83 317.23 486.5 317.4 489C317.57 491.5 317.33 494.67 316.6 497C315.87 499.33 314.77 501.9 313 503C311.23 504.1 308.5 503.85 306 503.6C303.5 503.35 300.5 502.52 298 501.5C295.5 500.48 293 499.25 291 497.5C289 495.75 287.08 493.33 286 491C284.92 488.67 284.25 485.9 284.5 483.5C284.75 481.1 285.92 478.18 287.5 476.6Z"/><path d="M310.23 483.88C312.28 483.71 315.64 481.79 318.27 480.54C320.9 479.29 323.66 477.83 326 476.4C328.35 474.96 331.2 473.3 332.35 471.93C333.5 470.56 333.41 468.98 332.9 468.2C332.38 467.43 330.9 466.77 329.25 467.27C327.6 467.77 325.25 469.97 323 471.2C320.74 472.44 318.27 473.68 315.73 474.66C313.19 475.65 309.4 475.96 307.77 477.12C306.14 478.27 305.54 480.48 305.95 481.6C306.36 482.73 308.17 484.06 310.23 483.88Z"/><path d="M314.16 487.9C315.99 488.3 319.4 487.27 322 487.2C324.6 487.13 327.14 487.31 329.75 487.49C332.36 487.67 335.89 488.54 337.67 488.28C339.44 488.01 340.3 486.79 340.41 485.9C340.52 485.01 340.03 483.62 338.33 482.92C336.64 482.22 332.98 482 330.25 481.71C327.53 481.42 324.74 481.27 322 481.2C319.26 481.13 315.66 480.71 313.84 481.3C312.01 481.9 310.98 483.65 311.03 484.75C311.09 485.85 312.34 487.49 314.16 487.9Z"/><path d="M313.67 496.28C315.77 497 320.3 496.61 323.61 496.97C326.93 497.34 330.23 498.02 333.57 498.47C336.91 498.92 341.49 499.86 343.63 499.67C345.77 499.49 346.28 498.23 346.41 497.34C346.53 496.45 346.37 495.09 344.37 494.33C342.38 493.56 337.76 493.28 334.43 492.73C331.1 492.18 327.74 491.53 324.39 491.03C321.04 490.52 316.55 489.44 314.33 489.72C312.1 490 311.15 491.61 311.04 492.7C310.94 493.8 311.58 495.57 313.67 496.28Z"/><path d="M306.48 503.04C308.38 504.57 313.1 506.17 316.67 507.8C320.24 509.42 324.19 511.38 327.9 512.79C331.61 514.2 336.53 515.99 338.91 516.26C341.3 516.52 341.9 515.28 342.19 514.4C342.49 513.51 342.7 512.14 340.69 510.94C338.67 509.75 333.66 508.67 330.1 507.21C326.54 505.75 322.76 503.91 319.33 502.2C315.9 500.49 311.87 497.55 309.52 496.96C307.18 496.36 305.77 497.62 305.26 498.63C304.76 499.65 304.58 501.51 306.48 503.04Z"/></g></g><g filter="url(#bsH)"><path d="M158.6 350C158.2 346 157.12 342.17 157.6 338C158.08 333.83 159.43 328.92 161.5 325C163.57 321.08 166.58 317.3 170 314.5C173.42 311.7 177.67 309.72 182 308.2C186.33 306.68 191.33 305.97 196 305.4C200.67 304.83 205.67 304.7 210 304.8C214.33 304.9 218.17 305.2 222 306C225.83 306.8 228.78 307.23 233 309.6C237.22 311.97 243.47 316.72 247.3 320.2C251.13 323.68 253.47 326.95 256 330.5C258.53 334.05 260.57 337.75 262.5 341.5C264.43 345.25 266.18 348.92 267.6 353C269.02 357.08 270.1 361.5 271 366C271.9 370.5 272.9 374.75 273 380C273.1 385.25 271.6 397.5 271.6 397.5C271.6 397.5 269.1 390.65 267.5 388C265.9 385.35 264.25 383.33 262 381.6C259.75 379.87 257.12 378.43 254 377.6C250.88 376.77 246.97 376.33 243.3 376.6C239.63 376.87 235.88 377.8 232 379.2C228.12 380.6 224 382.7 220 385C216 387.3 211.42 390.42 208 393C204.58 395.58 202.67 398.92 199.5 400.5C196.33 402.08 192.48 403.25 189 402.5C185.52 401.75 181.6 398.92 178.6 396C175.6 393.08 173.43 388.58 171 385C168.57 381.42 165.83 378.33 164 374.5C162.17 370.67 160.9 366.08 160 362C159.1 357.92 159 354 158.6 350Z" fill="url(#bgH)"/></g><path d="M166.6 311C166.6 311 171.15 312.27 174 313.6C176.85 314.93 184.11 318.84 188 321C191.89 323.16 203.2 329.8 203.2 329.8C203.2 329.8 204.43 332.47 203.6 334.5C202.77 336.53 198.76 342.48 197 345C195.24 347.52 190.4 353.4 190.4 353.4C190.4 353.4 186.72 354.93 184 354.4C181.28 353.87 173.36 350.68 170 349.4C166.64 348.12 161.47 345.6 158.8 344.8C156.13 344 150 343.4 150 343.4C150 343.4 148.93 341.12 149.6 339.2C150.27 337.28 153.35 331.96 155 329C156.65 326.04 160.45 319.4 162 317C163.55 314.6 166.6 311 166.6 311Z" fill="url(#bgO)" stroke="#a4600f" stroke-width="0.6"/><path d="M171.2 316.2C171.2 316.2 179.4 319.74 183 321.6C186.6 323.46 195.2 328.6 195.2 328.6C195.2 328.6 192.1 335.1 190.6 337.5C189.1 339.9 187.09 343.21 185.2 344.6C183.31 346 180.58 347.04 178 346.8C175.42 346.56 170.34 344.02 168 343C165.66 341.98 163.33 341.31 162.4 340C161.47 338.69 161.26 336.62 161.8 334.3C162.34 331.98 164.59 327.22 166 324.5C167.41 321.78 171.2 316.2 171.2 316.2Z" fill="#0b0c1c"/><path d="M167.5 312.5L202 330.6" stroke="#ffd078" stroke-width="1" fill="none" opacity="0.8"/></g></svg>
</body></html>
